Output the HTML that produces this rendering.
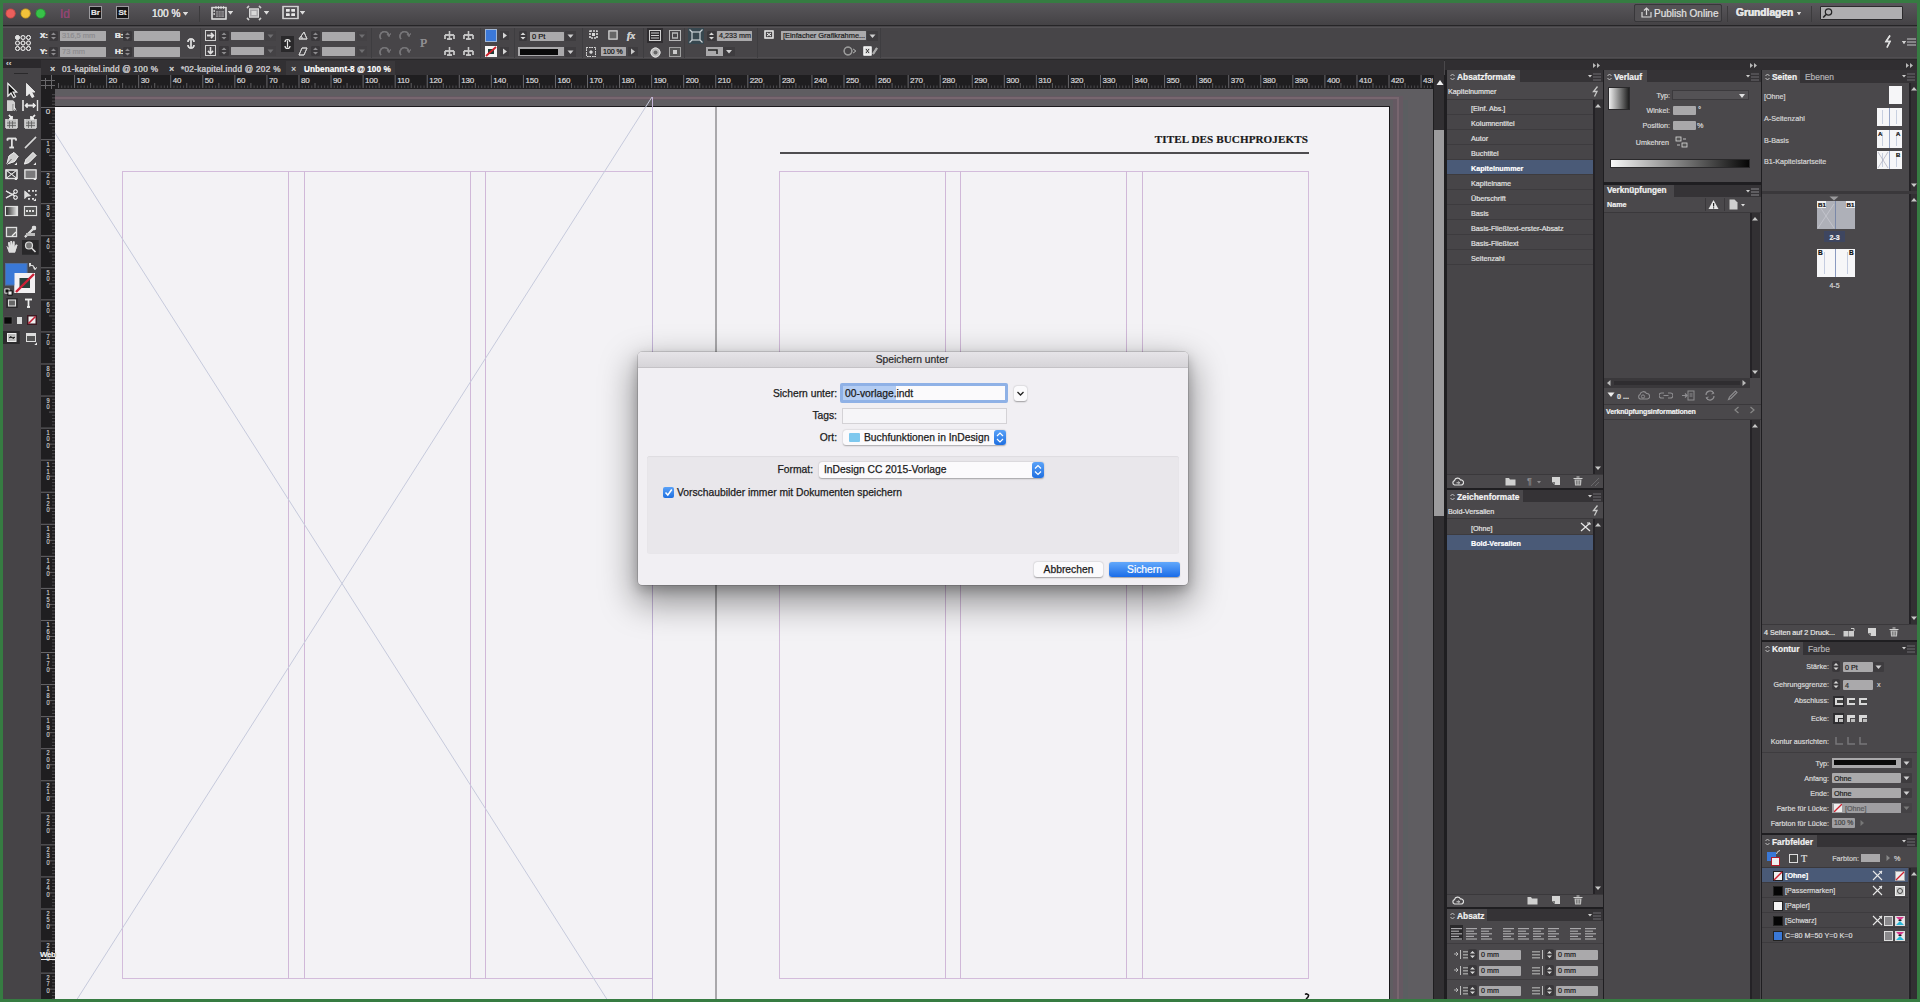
<!DOCTYPE html><html><head><meta charset="utf-8"><style>
html,body{margin:0;padding:0;}
body{width:1920px;height:1002px;position:relative;overflow:hidden;background:#367c42;font-family:"Liberation Sans",sans-serif;}
div{position:absolute;box-sizing:border-box;}
.t{white-space:nowrap;-webkit-text-stroke-width:0.2px;}
</style></head><body>
<div style="left:3px;top:3px;width:1914px;height:996px;background:#4a484b"></div>
<div style="left:3px;top:3px;width:1914px;height:22px;background:linear-gradient(#59575b,#444245)"></div>
<div style="left:3px;top:25px;width:1914px;height:1.5px;background:#262527"></div>
<div style="left:3px;top:26px;width:1914px;height:34px;background:#474548"></div>
<div style="left:3px;top:26.5px;width:1914px;height:1px;background:#555356"></div>
<div style="left:3px;top:57px;width:1914px;height:1px;background:#504e51"></div>
<div style="left:3px;top:59px;width:1914px;height:1.5px;background:#29282a"></div>
<div style="left:3px;top:60px;width:1441px;height:15px;background:#323033"></div>
<div style="left:41px;top:75px;width:1392px;height:14px;background:#1f1e20"></div>
<div style="left:3px;top:60px;width:38px;height:939px;background:#464447"></div>
<div style="left:41px;top:75px;width:14px;height:924px;background:#1f1e20"></div>
<svg style="position:absolute;left:0px;top:0px;pointer-events:none" width="1440" height="1002" viewBox="0 0 1440 1002"><rect x="58.03" y="83" width="1" height="5" fill="#5f5e61"/><rect x="61.24" y="85.5" width="1" height="2.5" fill="#4c4b4e"/><rect x="64.44" y="85.5" width="1" height="2.5" fill="#4c4b4e"/><rect x="67.65" y="85.5" width="1" height="2.5" fill="#4c4b4e"/><rect x="70.85" y="85.5" width="1" height="2.5" fill="#4c4b4e"/><rect x="74.06" y="75" width="1" height="13" fill="#68676a"/><rect x="77.27" y="85.5" width="1" height="2.5" fill="#4c4b4e"/><rect x="80.47" y="85.5" width="1" height="2.5" fill="#4c4b4e"/><rect x="83.68" y="85.5" width="1" height="2.5" fill="#4c4b4e"/><rect x="86.88" y="85.5" width="1" height="2.5" fill="#4c4b4e"/><rect x="90.09" y="83" width="1" height="5" fill="#5f5e61"/><rect x="93.30" y="85.5" width="1" height="2.5" fill="#4c4b4e"/><rect x="96.50" y="85.5" width="1" height="2.5" fill="#4c4b4e"/><rect x="99.71" y="85.5" width="1" height="2.5" fill="#4c4b4e"/><rect x="102.91" y="85.5" width="1" height="2.5" fill="#4c4b4e"/><rect x="106.12" y="75" width="1" height="13" fill="#68676a"/><rect x="109.33" y="85.5" width="1" height="2.5" fill="#4c4b4e"/><rect x="112.53" y="85.5" width="1" height="2.5" fill="#4c4b4e"/><rect x="115.74" y="85.5" width="1" height="2.5" fill="#4c4b4e"/><rect x="118.94" y="85.5" width="1" height="2.5" fill="#4c4b4e"/><rect x="122.15" y="83" width="1" height="5" fill="#5f5e61"/><rect x="125.36" y="85.5" width="1" height="2.5" fill="#4c4b4e"/><rect x="128.56" y="85.5" width="1" height="2.5" fill="#4c4b4e"/><rect x="131.77" y="85.5" width="1" height="2.5" fill="#4c4b4e"/><rect x="134.97" y="85.5" width="1" height="2.5" fill="#4c4b4e"/><rect x="138.18" y="75" width="1" height="13" fill="#68676a"/><rect x="141.39" y="85.5" width="1" height="2.5" fill="#4c4b4e"/><rect x="144.59" y="85.5" width="1" height="2.5" fill="#4c4b4e"/><rect x="147.80" y="85.5" width="1" height="2.5" fill="#4c4b4e"/><rect x="151.00" y="85.5" width="1" height="2.5" fill="#4c4b4e"/><rect x="154.21" y="83" width="1" height="5" fill="#5f5e61"/><rect x="157.42" y="85.5" width="1" height="2.5" fill="#4c4b4e"/><rect x="160.62" y="85.5" width="1" height="2.5" fill="#4c4b4e"/><rect x="163.83" y="85.5" width="1" height="2.5" fill="#4c4b4e"/><rect x="167.03" y="85.5" width="1" height="2.5" fill="#4c4b4e"/><rect x="170.24" y="75" width="1" height="13" fill="#68676a"/><rect x="173.45" y="85.5" width="1" height="2.5" fill="#4c4b4e"/><rect x="176.65" y="85.5" width="1" height="2.5" fill="#4c4b4e"/><rect x="179.86" y="85.5" width="1" height="2.5" fill="#4c4b4e"/><rect x="183.06" y="85.5" width="1" height="2.5" fill="#4c4b4e"/><rect x="186.27" y="83" width="1" height="5" fill="#5f5e61"/><rect x="189.48" y="85.5" width="1" height="2.5" fill="#4c4b4e"/><rect x="192.68" y="85.5" width="1" height="2.5" fill="#4c4b4e"/><rect x="195.89" y="85.5" width="1" height="2.5" fill="#4c4b4e"/><rect x="199.09" y="85.5" width="1" height="2.5" fill="#4c4b4e"/><rect x="202.30" y="75" width="1" height="13" fill="#68676a"/><rect x="205.51" y="85.5" width="1" height="2.5" fill="#4c4b4e"/><rect x="208.71" y="85.5" width="1" height="2.5" fill="#4c4b4e"/><rect x="211.92" y="85.5" width="1" height="2.5" fill="#4c4b4e"/><rect x="215.12" y="85.5" width="1" height="2.5" fill="#4c4b4e"/><rect x="218.33" y="83" width="1" height="5" fill="#5f5e61"/><rect x="221.54" y="85.5" width="1" height="2.5" fill="#4c4b4e"/><rect x="224.74" y="85.5" width="1" height="2.5" fill="#4c4b4e"/><rect x="227.95" y="85.5" width="1" height="2.5" fill="#4c4b4e"/><rect x="231.15" y="85.5" width="1" height="2.5" fill="#4c4b4e"/><rect x="234.36" y="75" width="1" height="13" fill="#68676a"/><rect x="237.57" y="85.5" width="1" height="2.5" fill="#4c4b4e"/><rect x="240.77" y="85.5" width="1" height="2.5" fill="#4c4b4e"/><rect x="243.98" y="85.5" width="1" height="2.5" fill="#4c4b4e"/><rect x="247.18" y="85.5" width="1" height="2.5" fill="#4c4b4e"/><rect x="250.39" y="83" width="1" height="5" fill="#5f5e61"/><rect x="253.60" y="85.5" width="1" height="2.5" fill="#4c4b4e"/><rect x="256.80" y="85.5" width="1" height="2.5" fill="#4c4b4e"/><rect x="260.01" y="85.5" width="1" height="2.5" fill="#4c4b4e"/><rect x="263.21" y="85.5" width="1" height="2.5" fill="#4c4b4e"/><rect x="266.42" y="75" width="1" height="13" fill="#68676a"/><rect x="269.63" y="85.5" width="1" height="2.5" fill="#4c4b4e"/><rect x="272.83" y="85.5" width="1" height="2.5" fill="#4c4b4e"/><rect x="276.04" y="85.5" width="1" height="2.5" fill="#4c4b4e"/><rect x="279.24" y="85.5" width="1" height="2.5" fill="#4c4b4e"/><rect x="282.45" y="83" width="1" height="5" fill="#5f5e61"/><rect x="285.66" y="85.5" width="1" height="2.5" fill="#4c4b4e"/><rect x="288.86" y="85.5" width="1" height="2.5" fill="#4c4b4e"/><rect x="292.07" y="85.5" width="1" height="2.5" fill="#4c4b4e"/><rect x="295.27" y="85.5" width="1" height="2.5" fill="#4c4b4e"/><rect x="298.48" y="75" width="1" height="13" fill="#68676a"/><rect x="301.69" y="85.5" width="1" height="2.5" fill="#4c4b4e"/><rect x="304.89" y="85.5" width="1" height="2.5" fill="#4c4b4e"/><rect x="308.10" y="85.5" width="1" height="2.5" fill="#4c4b4e"/><rect x="311.30" y="85.5" width="1" height="2.5" fill="#4c4b4e"/><rect x="314.51" y="83" width="1" height="5" fill="#5f5e61"/><rect x="317.72" y="85.5" width="1" height="2.5" fill="#4c4b4e"/><rect x="320.92" y="85.5" width="1" height="2.5" fill="#4c4b4e"/><rect x="324.13" y="85.5" width="1" height="2.5" fill="#4c4b4e"/><rect x="327.33" y="85.5" width="1" height="2.5" fill="#4c4b4e"/><rect x="330.54" y="75" width="1" height="13" fill="#68676a"/><rect x="333.75" y="85.5" width="1" height="2.5" fill="#4c4b4e"/><rect x="336.95" y="85.5" width="1" height="2.5" fill="#4c4b4e"/><rect x="340.16" y="85.5" width="1" height="2.5" fill="#4c4b4e"/><rect x="343.36" y="85.5" width="1" height="2.5" fill="#4c4b4e"/><rect x="346.57" y="83" width="1" height="5" fill="#5f5e61"/><rect x="349.78" y="85.5" width="1" height="2.5" fill="#4c4b4e"/><rect x="352.98" y="85.5" width="1" height="2.5" fill="#4c4b4e"/><rect x="356.19" y="85.5" width="1" height="2.5" fill="#4c4b4e"/><rect x="359.39" y="85.5" width="1" height="2.5" fill="#4c4b4e"/><rect x="362.60" y="75" width="1" height="13" fill="#68676a"/><rect x="365.81" y="85.5" width="1" height="2.5" fill="#4c4b4e"/><rect x="369.01" y="85.5" width="1" height="2.5" fill="#4c4b4e"/><rect x="372.22" y="85.5" width="1" height="2.5" fill="#4c4b4e"/><rect x="375.42" y="85.5" width="1" height="2.5" fill="#4c4b4e"/><rect x="378.63" y="83" width="1" height="5" fill="#5f5e61"/><rect x="381.84" y="85.5" width="1" height="2.5" fill="#4c4b4e"/><rect x="385.04" y="85.5" width="1" height="2.5" fill="#4c4b4e"/><rect x="388.25" y="85.5" width="1" height="2.5" fill="#4c4b4e"/><rect x="391.45" y="85.5" width="1" height="2.5" fill="#4c4b4e"/><rect x="394.66" y="75" width="1" height="13" fill="#68676a"/><rect x="397.87" y="85.5" width="1" height="2.5" fill="#4c4b4e"/><rect x="401.07" y="85.5" width="1" height="2.5" fill="#4c4b4e"/><rect x="404.28" y="85.5" width="1" height="2.5" fill="#4c4b4e"/><rect x="407.48" y="85.5" width="1" height="2.5" fill="#4c4b4e"/><rect x="410.69" y="83" width="1" height="5" fill="#5f5e61"/><rect x="413.90" y="85.5" width="1" height="2.5" fill="#4c4b4e"/><rect x="417.10" y="85.5" width="1" height="2.5" fill="#4c4b4e"/><rect x="420.31" y="85.5" width="1" height="2.5" fill="#4c4b4e"/><rect x="423.51" y="85.5" width="1" height="2.5" fill="#4c4b4e"/><rect x="426.72" y="75" width="1" height="13" fill="#68676a"/><rect x="429.93" y="85.5" width="1" height="2.5" fill="#4c4b4e"/><rect x="433.13" y="85.5" width="1" height="2.5" fill="#4c4b4e"/><rect x="436.34" y="85.5" width="1" height="2.5" fill="#4c4b4e"/><rect x="439.54" y="85.5" width="1" height="2.5" fill="#4c4b4e"/><rect x="442.75" y="83" width="1" height="5" fill="#5f5e61"/><rect x="445.96" y="85.5" width="1" height="2.5" fill="#4c4b4e"/><rect x="449.16" y="85.5" width="1" height="2.5" fill="#4c4b4e"/><rect x="452.37" y="85.5" width="1" height="2.5" fill="#4c4b4e"/><rect x="455.57" y="85.5" width="1" height="2.5" fill="#4c4b4e"/><rect x="458.78" y="75" width="1" height="13" fill="#68676a"/><rect x="461.99" y="85.5" width="1" height="2.5" fill="#4c4b4e"/><rect x="465.19" y="85.5" width="1" height="2.5" fill="#4c4b4e"/><rect x="468.40" y="85.5" width="1" height="2.5" fill="#4c4b4e"/><rect x="471.60" y="85.5" width="1" height="2.5" fill="#4c4b4e"/><rect x="474.81" y="83" width="1" height="5" fill="#5f5e61"/><rect x="478.02" y="85.5" width="1" height="2.5" fill="#4c4b4e"/><rect x="481.22" y="85.5" width="1" height="2.5" fill="#4c4b4e"/><rect x="484.43" y="85.5" width="1" height="2.5" fill="#4c4b4e"/><rect x="487.63" y="85.5" width="1" height="2.5" fill="#4c4b4e"/><rect x="490.84" y="75" width="1" height="13" fill="#68676a"/><rect x="494.05" y="85.5" width="1" height="2.5" fill="#4c4b4e"/><rect x="497.25" y="85.5" width="1" height="2.5" fill="#4c4b4e"/><rect x="500.46" y="85.5" width="1" height="2.5" fill="#4c4b4e"/><rect x="503.66" y="85.5" width="1" height="2.5" fill="#4c4b4e"/><rect x="506.87" y="83" width="1" height="5" fill="#5f5e61"/><rect x="510.08" y="85.5" width="1" height="2.5" fill="#4c4b4e"/><rect x="513.28" y="85.5" width="1" height="2.5" fill="#4c4b4e"/><rect x="516.49" y="85.5" width="1" height="2.5" fill="#4c4b4e"/><rect x="519.69" y="85.5" width="1" height="2.5" fill="#4c4b4e"/><rect x="522.90" y="75" width="1" height="13" fill="#68676a"/><rect x="526.11" y="85.5" width="1" height="2.5" fill="#4c4b4e"/><rect x="529.31" y="85.5" width="1" height="2.5" fill="#4c4b4e"/><rect x="532.52" y="85.5" width="1" height="2.5" fill="#4c4b4e"/><rect x="535.72" y="85.5" width="1" height="2.5" fill="#4c4b4e"/><rect x="538.93" y="83" width="1" height="5" fill="#5f5e61"/><rect x="542.14" y="85.5" width="1" height="2.5" fill="#4c4b4e"/><rect x="545.34" y="85.5" width="1" height="2.5" fill="#4c4b4e"/><rect x="548.55" y="85.5" width="1" height="2.5" fill="#4c4b4e"/><rect x="551.75" y="85.5" width="1" height="2.5" fill="#4c4b4e"/><rect x="554.96" y="75" width="1" height="13" fill="#68676a"/><rect x="558.17" y="85.5" width="1" height="2.5" fill="#4c4b4e"/><rect x="561.37" y="85.5" width="1" height="2.5" fill="#4c4b4e"/><rect x="564.58" y="85.5" width="1" height="2.5" fill="#4c4b4e"/><rect x="567.78" y="85.5" width="1" height="2.5" fill="#4c4b4e"/><rect x="570.99" y="83" width="1" height="5" fill="#5f5e61"/><rect x="574.20" y="85.5" width="1" height="2.5" fill="#4c4b4e"/><rect x="577.40" y="85.5" width="1" height="2.5" fill="#4c4b4e"/><rect x="580.61" y="85.5" width="1" height="2.5" fill="#4c4b4e"/><rect x="583.81" y="85.5" width="1" height="2.5" fill="#4c4b4e"/><rect x="587.02" y="75" width="1" height="13" fill="#68676a"/><rect x="590.23" y="85.5" width="1" height="2.5" fill="#4c4b4e"/><rect x="593.43" y="85.5" width="1" height="2.5" fill="#4c4b4e"/><rect x="596.64" y="85.5" width="1" height="2.5" fill="#4c4b4e"/><rect x="599.84" y="85.5" width="1" height="2.5" fill="#4c4b4e"/><rect x="603.05" y="83" width="1" height="5" fill="#5f5e61"/><rect x="606.26" y="85.5" width="1" height="2.5" fill="#4c4b4e"/><rect x="609.46" y="85.5" width="1" height="2.5" fill="#4c4b4e"/><rect x="612.67" y="85.5" width="1" height="2.5" fill="#4c4b4e"/><rect x="615.87" y="85.5" width="1" height="2.5" fill="#4c4b4e"/><rect x="619.08" y="75" width="1" height="13" fill="#68676a"/><rect x="622.29" y="85.5" width="1" height="2.5" fill="#4c4b4e"/><rect x="625.49" y="85.5" width="1" height="2.5" fill="#4c4b4e"/><rect x="628.70" y="85.5" width="1" height="2.5" fill="#4c4b4e"/><rect x="631.90" y="85.5" width="1" height="2.5" fill="#4c4b4e"/><rect x="635.11" y="83" width="1" height="5" fill="#5f5e61"/><rect x="638.32" y="85.5" width="1" height="2.5" fill="#4c4b4e"/><rect x="641.52" y="85.5" width="1" height="2.5" fill="#4c4b4e"/><rect x="644.73" y="85.5" width="1" height="2.5" fill="#4c4b4e"/><rect x="647.93" y="85.5" width="1" height="2.5" fill="#4c4b4e"/><rect x="651.14" y="75" width="1" height="13" fill="#68676a"/><rect x="654.35" y="85.5" width="1" height="2.5" fill="#4c4b4e"/><rect x="657.55" y="85.5" width="1" height="2.5" fill="#4c4b4e"/><rect x="660.76" y="85.5" width="1" height="2.5" fill="#4c4b4e"/><rect x="663.96" y="85.5" width="1" height="2.5" fill="#4c4b4e"/><rect x="667.17" y="83" width="1" height="5" fill="#5f5e61"/><rect x="670.38" y="85.5" width="1" height="2.5" fill="#4c4b4e"/><rect x="673.58" y="85.5" width="1" height="2.5" fill="#4c4b4e"/><rect x="676.79" y="85.5" width="1" height="2.5" fill="#4c4b4e"/><rect x="679.99" y="85.5" width="1" height="2.5" fill="#4c4b4e"/><rect x="683.20" y="75" width="1" height="13" fill="#68676a"/><rect x="686.41" y="85.5" width="1" height="2.5" fill="#4c4b4e"/><rect x="689.61" y="85.5" width="1" height="2.5" fill="#4c4b4e"/><rect x="692.82" y="85.5" width="1" height="2.5" fill="#4c4b4e"/><rect x="696.02" y="85.5" width="1" height="2.5" fill="#4c4b4e"/><rect x="699.23" y="83" width="1" height="5" fill="#5f5e61"/><rect x="702.44" y="85.5" width="1" height="2.5" fill="#4c4b4e"/><rect x="705.64" y="85.5" width="1" height="2.5" fill="#4c4b4e"/><rect x="708.85" y="85.5" width="1" height="2.5" fill="#4c4b4e"/><rect x="712.05" y="85.5" width="1" height="2.5" fill="#4c4b4e"/><rect x="715.26" y="75" width="1" height="13" fill="#68676a"/><rect x="718.47" y="85.5" width="1" height="2.5" fill="#4c4b4e"/><rect x="721.67" y="85.5" width="1" height="2.5" fill="#4c4b4e"/><rect x="724.88" y="85.5" width="1" height="2.5" fill="#4c4b4e"/><rect x="728.08" y="85.5" width="1" height="2.5" fill="#4c4b4e"/><rect x="731.29" y="83" width="1" height="5" fill="#5f5e61"/><rect x="734.50" y="85.5" width="1" height="2.5" fill="#4c4b4e"/><rect x="737.70" y="85.5" width="1" height="2.5" fill="#4c4b4e"/><rect x="740.91" y="85.5" width="1" height="2.5" fill="#4c4b4e"/><rect x="744.11" y="85.5" width="1" height="2.5" fill="#4c4b4e"/><rect x="747.32" y="75" width="1" height="13" fill="#68676a"/><rect x="750.53" y="85.5" width="1" height="2.5" fill="#4c4b4e"/><rect x="753.73" y="85.5" width="1" height="2.5" fill="#4c4b4e"/><rect x="756.94" y="85.5" width="1" height="2.5" fill="#4c4b4e"/><rect x="760.14" y="85.5" width="1" height="2.5" fill="#4c4b4e"/><rect x="763.35" y="83" width="1" height="5" fill="#5f5e61"/><rect x="766.56" y="85.5" width="1" height="2.5" fill="#4c4b4e"/><rect x="769.76" y="85.5" width="1" height="2.5" fill="#4c4b4e"/><rect x="772.97" y="85.5" width="1" height="2.5" fill="#4c4b4e"/><rect x="776.17" y="85.5" width="1" height="2.5" fill="#4c4b4e"/><rect x="779.38" y="75" width="1" height="13" fill="#68676a"/><rect x="782.59" y="85.5" width="1" height="2.5" fill="#4c4b4e"/><rect x="785.79" y="85.5" width="1" height="2.5" fill="#4c4b4e"/><rect x="789.00" y="85.5" width="1" height="2.5" fill="#4c4b4e"/><rect x="792.20" y="85.5" width="1" height="2.5" fill="#4c4b4e"/><rect x="795.41" y="83" width="1" height="5" fill="#5f5e61"/><rect x="798.62" y="85.5" width="1" height="2.5" fill="#4c4b4e"/><rect x="801.82" y="85.5" width="1" height="2.5" fill="#4c4b4e"/><rect x="805.03" y="85.5" width="1" height="2.5" fill="#4c4b4e"/><rect x="808.23" y="85.5" width="1" height="2.5" fill="#4c4b4e"/><rect x="811.44" y="75" width="1" height="13" fill="#68676a"/><rect x="814.65" y="85.5" width="1" height="2.5" fill="#4c4b4e"/><rect x="817.85" y="85.5" width="1" height="2.5" fill="#4c4b4e"/><rect x="821.06" y="85.5" width="1" height="2.5" fill="#4c4b4e"/><rect x="824.26" y="85.5" width="1" height="2.5" fill="#4c4b4e"/><rect x="827.47" y="83" width="1" height="5" fill="#5f5e61"/><rect x="830.68" y="85.5" width="1" height="2.5" fill="#4c4b4e"/><rect x="833.88" y="85.5" width="1" height="2.5" fill="#4c4b4e"/><rect x="837.09" y="85.5" width="1" height="2.5" fill="#4c4b4e"/><rect x="840.29" y="85.5" width="1" height="2.5" fill="#4c4b4e"/><rect x="843.50" y="75" width="1" height="13" fill="#68676a"/><rect x="846.71" y="85.5" width="1" height="2.5" fill="#4c4b4e"/><rect x="849.91" y="85.5" width="1" height="2.5" fill="#4c4b4e"/><rect x="853.12" y="85.5" width="1" height="2.5" fill="#4c4b4e"/><rect x="856.32" y="85.5" width="1" height="2.5" fill="#4c4b4e"/><rect x="859.53" y="83" width="1" height="5" fill="#5f5e61"/><rect x="862.74" y="85.5" width="1" height="2.5" fill="#4c4b4e"/><rect x="865.94" y="85.5" width="1" height="2.5" fill="#4c4b4e"/><rect x="869.15" y="85.5" width="1" height="2.5" fill="#4c4b4e"/><rect x="872.35" y="85.5" width="1" height="2.5" fill="#4c4b4e"/><rect x="875.56" y="75" width="1" height="13" fill="#68676a"/><rect x="878.77" y="85.5" width="1" height="2.5" fill="#4c4b4e"/><rect x="881.97" y="85.5" width="1" height="2.5" fill="#4c4b4e"/><rect x="885.18" y="85.5" width="1" height="2.5" fill="#4c4b4e"/><rect x="888.38" y="85.5" width="1" height="2.5" fill="#4c4b4e"/><rect x="891.59" y="83" width="1" height="5" fill="#5f5e61"/><rect x="894.80" y="85.5" width="1" height="2.5" fill="#4c4b4e"/><rect x="898.00" y="85.5" width="1" height="2.5" fill="#4c4b4e"/><rect x="901.21" y="85.5" width="1" height="2.5" fill="#4c4b4e"/><rect x="904.41" y="85.5" width="1" height="2.5" fill="#4c4b4e"/><rect x="907.62" y="75" width="1" height="13" fill="#68676a"/><rect x="910.83" y="85.5" width="1" height="2.5" fill="#4c4b4e"/><rect x="914.03" y="85.5" width="1" height="2.5" fill="#4c4b4e"/><rect x="917.24" y="85.5" width="1" height="2.5" fill="#4c4b4e"/><rect x="920.44" y="85.5" width="1" height="2.5" fill="#4c4b4e"/><rect x="923.65" y="83" width="1" height="5" fill="#5f5e61"/><rect x="926.86" y="85.5" width="1" height="2.5" fill="#4c4b4e"/><rect x="930.06" y="85.5" width="1" height="2.5" fill="#4c4b4e"/><rect x="933.27" y="85.5" width="1" height="2.5" fill="#4c4b4e"/><rect x="936.47" y="85.5" width="1" height="2.5" fill="#4c4b4e"/><rect x="939.68" y="75" width="1" height="13" fill="#68676a"/><rect x="942.89" y="85.5" width="1" height="2.5" fill="#4c4b4e"/><rect x="946.09" y="85.5" width="1" height="2.5" fill="#4c4b4e"/><rect x="949.30" y="85.5" width="1" height="2.5" fill="#4c4b4e"/><rect x="952.50" y="85.5" width="1" height="2.5" fill="#4c4b4e"/><rect x="955.71" y="83" width="1" height="5" fill="#5f5e61"/><rect x="958.92" y="85.5" width="1" height="2.5" fill="#4c4b4e"/><rect x="962.12" y="85.5" width="1" height="2.5" fill="#4c4b4e"/><rect x="965.33" y="85.5" width="1" height="2.5" fill="#4c4b4e"/><rect x="968.53" y="85.5" width="1" height="2.5" fill="#4c4b4e"/><rect x="971.74" y="75" width="1" height="13" fill="#68676a"/><rect x="974.95" y="85.5" width="1" height="2.5" fill="#4c4b4e"/><rect x="978.15" y="85.5" width="1" height="2.5" fill="#4c4b4e"/><rect x="981.36" y="85.5" width="1" height="2.5" fill="#4c4b4e"/><rect x="984.56" y="85.5" width="1" height="2.5" fill="#4c4b4e"/><rect x="987.77" y="83" width="1" height="5" fill="#5f5e61"/><rect x="990.98" y="85.5" width="1" height="2.5" fill="#4c4b4e"/><rect x="994.18" y="85.5" width="1" height="2.5" fill="#4c4b4e"/><rect x="997.39" y="85.5" width="1" height="2.5" fill="#4c4b4e"/><rect x="1000.59" y="85.5" width="1" height="2.5" fill="#4c4b4e"/><rect x="1003.80" y="75" width="1" height="13" fill="#68676a"/><rect x="1007.01" y="85.5" width="1" height="2.5" fill="#4c4b4e"/><rect x="1010.21" y="85.5" width="1" height="2.5" fill="#4c4b4e"/><rect x="1013.42" y="85.5" width="1" height="2.5" fill="#4c4b4e"/><rect x="1016.62" y="85.5" width="1" height="2.5" fill="#4c4b4e"/><rect x="1019.83" y="83" width="1" height="5" fill="#5f5e61"/><rect x="1023.04" y="85.5" width="1" height="2.5" fill="#4c4b4e"/><rect x="1026.24" y="85.5" width="1" height="2.5" fill="#4c4b4e"/><rect x="1029.45" y="85.5" width="1" height="2.5" fill="#4c4b4e"/><rect x="1032.65" y="85.5" width="1" height="2.5" fill="#4c4b4e"/><rect x="1035.86" y="75" width="1" height="13" fill="#68676a"/><rect x="1039.07" y="85.5" width="1" height="2.5" fill="#4c4b4e"/><rect x="1042.27" y="85.5" width="1" height="2.5" fill="#4c4b4e"/><rect x="1045.48" y="85.5" width="1" height="2.5" fill="#4c4b4e"/><rect x="1048.68" y="85.5" width="1" height="2.5" fill="#4c4b4e"/><rect x="1051.89" y="83" width="1" height="5" fill="#5f5e61"/><rect x="1055.10" y="85.5" width="1" height="2.5" fill="#4c4b4e"/><rect x="1058.30" y="85.5" width="1" height="2.5" fill="#4c4b4e"/><rect x="1061.51" y="85.5" width="1" height="2.5" fill="#4c4b4e"/><rect x="1064.71" y="85.5" width="1" height="2.5" fill="#4c4b4e"/><rect x="1067.92" y="75" width="1" height="13" fill="#68676a"/><rect x="1071.13" y="85.5" width="1" height="2.5" fill="#4c4b4e"/><rect x="1074.33" y="85.5" width="1" height="2.5" fill="#4c4b4e"/><rect x="1077.54" y="85.5" width="1" height="2.5" fill="#4c4b4e"/><rect x="1080.74" y="85.5" width="1" height="2.5" fill="#4c4b4e"/><rect x="1083.95" y="83" width="1" height="5" fill="#5f5e61"/><rect x="1087.16" y="85.5" width="1" height="2.5" fill="#4c4b4e"/><rect x="1090.36" y="85.5" width="1" height="2.5" fill="#4c4b4e"/><rect x="1093.57" y="85.5" width="1" height="2.5" fill="#4c4b4e"/><rect x="1096.77" y="85.5" width="1" height="2.5" fill="#4c4b4e"/><rect x="1099.98" y="75" width="1" height="13" fill="#68676a"/><rect x="1103.19" y="85.5" width="1" height="2.5" fill="#4c4b4e"/><rect x="1106.39" y="85.5" width="1" height="2.5" fill="#4c4b4e"/><rect x="1109.60" y="85.5" width="1" height="2.5" fill="#4c4b4e"/><rect x="1112.80" y="85.5" width="1" height="2.5" fill="#4c4b4e"/><rect x="1116.01" y="83" width="1" height="5" fill="#5f5e61"/><rect x="1119.22" y="85.5" width="1" height="2.5" fill="#4c4b4e"/><rect x="1122.42" y="85.5" width="1" height="2.5" fill="#4c4b4e"/><rect x="1125.63" y="85.5" width="1" height="2.5" fill="#4c4b4e"/><rect x="1128.83" y="85.5" width="1" height="2.5" fill="#4c4b4e"/><rect x="1132.04" y="75" width="1" height="13" fill="#68676a"/><rect x="1135.25" y="85.5" width="1" height="2.5" fill="#4c4b4e"/><rect x="1138.45" y="85.5" width="1" height="2.5" fill="#4c4b4e"/><rect x="1141.66" y="85.5" width="1" height="2.5" fill="#4c4b4e"/><rect x="1144.86" y="85.5" width="1" height="2.5" fill="#4c4b4e"/><rect x="1148.07" y="83" width="1" height="5" fill="#5f5e61"/><rect x="1151.28" y="85.5" width="1" height="2.5" fill="#4c4b4e"/><rect x="1154.48" y="85.5" width="1" height="2.5" fill="#4c4b4e"/><rect x="1157.69" y="85.5" width="1" height="2.5" fill="#4c4b4e"/><rect x="1160.89" y="85.5" width="1" height="2.5" fill="#4c4b4e"/><rect x="1164.10" y="75" width="1" height="13" fill="#68676a"/><rect x="1167.31" y="85.5" width="1" height="2.5" fill="#4c4b4e"/><rect x="1170.51" y="85.5" width="1" height="2.5" fill="#4c4b4e"/><rect x="1173.72" y="85.5" width="1" height="2.5" fill="#4c4b4e"/><rect x="1176.92" y="85.5" width="1" height="2.5" fill="#4c4b4e"/><rect x="1180.13" y="83" width="1" height="5" fill="#5f5e61"/><rect x="1183.34" y="85.5" width="1" height="2.5" fill="#4c4b4e"/><rect x="1186.54" y="85.5" width="1" height="2.5" fill="#4c4b4e"/><rect x="1189.75" y="85.5" width="1" height="2.5" fill="#4c4b4e"/><rect x="1192.95" y="85.5" width="1" height="2.5" fill="#4c4b4e"/><rect x="1196.16" y="75" width="1" height="13" fill="#68676a"/><rect x="1199.37" y="85.5" width="1" height="2.5" fill="#4c4b4e"/><rect x="1202.57" y="85.5" width="1" height="2.5" fill="#4c4b4e"/><rect x="1205.78" y="85.5" width="1" height="2.5" fill="#4c4b4e"/><rect x="1208.98" y="85.5" width="1" height="2.5" fill="#4c4b4e"/><rect x="1212.19" y="83" width="1" height="5" fill="#5f5e61"/><rect x="1215.40" y="85.5" width="1" height="2.5" fill="#4c4b4e"/><rect x="1218.60" y="85.5" width="1" height="2.5" fill="#4c4b4e"/><rect x="1221.81" y="85.5" width="1" height="2.5" fill="#4c4b4e"/><rect x="1225.01" y="85.5" width="1" height="2.5" fill="#4c4b4e"/><rect x="1228.22" y="75" width="1" height="13" fill="#68676a"/><rect x="1231.43" y="85.5" width="1" height="2.5" fill="#4c4b4e"/><rect x="1234.63" y="85.5" width="1" height="2.5" fill="#4c4b4e"/><rect x="1237.84" y="85.5" width="1" height="2.5" fill="#4c4b4e"/><rect x="1241.04" y="85.5" width="1" height="2.5" fill="#4c4b4e"/><rect x="1244.25" y="83" width="1" height="5" fill="#5f5e61"/><rect x="1247.46" y="85.5" width="1" height="2.5" fill="#4c4b4e"/><rect x="1250.66" y="85.5" width="1" height="2.5" fill="#4c4b4e"/><rect x="1253.87" y="85.5" width="1" height="2.5" fill="#4c4b4e"/><rect x="1257.07" y="85.5" width="1" height="2.5" fill="#4c4b4e"/><rect x="1260.28" y="75" width="1" height="13" fill="#68676a"/><rect x="1263.49" y="85.5" width="1" height="2.5" fill="#4c4b4e"/><rect x="1266.69" y="85.5" width="1" height="2.5" fill="#4c4b4e"/><rect x="1269.90" y="85.5" width="1" height="2.5" fill="#4c4b4e"/><rect x="1273.10" y="85.5" width="1" height="2.5" fill="#4c4b4e"/><rect x="1276.31" y="83" width="1" height="5" fill="#5f5e61"/><rect x="1279.52" y="85.5" width="1" height="2.5" fill="#4c4b4e"/><rect x="1282.72" y="85.5" width="1" height="2.5" fill="#4c4b4e"/><rect x="1285.93" y="85.5" width="1" height="2.5" fill="#4c4b4e"/><rect x="1289.13" y="85.5" width="1" height="2.5" fill="#4c4b4e"/><rect x="1292.34" y="75" width="1" height="13" fill="#68676a"/><rect x="1295.55" y="85.5" width="1" height="2.5" fill="#4c4b4e"/><rect x="1298.75" y="85.5" width="1" height="2.5" fill="#4c4b4e"/><rect x="1301.96" y="85.5" width="1" height="2.5" fill="#4c4b4e"/><rect x="1305.16" y="85.5" width="1" height="2.5" fill="#4c4b4e"/><rect x="1308.37" y="83" width="1" height="5" fill="#5f5e61"/><rect x="1311.58" y="85.5" width="1" height="2.5" fill="#4c4b4e"/><rect x="1314.78" y="85.5" width="1" height="2.5" fill="#4c4b4e"/><rect x="1317.99" y="85.5" width="1" height="2.5" fill="#4c4b4e"/><rect x="1321.19" y="85.5" width="1" height="2.5" fill="#4c4b4e"/><rect x="1324.40" y="75" width="1" height="13" fill="#68676a"/><rect x="1327.61" y="85.5" width="1" height="2.5" fill="#4c4b4e"/><rect x="1330.81" y="85.5" width="1" height="2.5" fill="#4c4b4e"/><rect x="1334.02" y="85.5" width="1" height="2.5" fill="#4c4b4e"/><rect x="1337.22" y="85.5" width="1" height="2.5" fill="#4c4b4e"/><rect x="1340.43" y="83" width="1" height="5" fill="#5f5e61"/><rect x="1343.64" y="85.5" width="1" height="2.5" fill="#4c4b4e"/><rect x="1346.84" y="85.5" width="1" height="2.5" fill="#4c4b4e"/><rect x="1350.05" y="85.5" width="1" height="2.5" fill="#4c4b4e"/><rect x="1353.25" y="85.5" width="1" height="2.5" fill="#4c4b4e"/><rect x="1356.46" y="75" width="1" height="13" fill="#68676a"/><rect x="1359.67" y="85.5" width="1" height="2.5" fill="#4c4b4e"/><rect x="1362.87" y="85.5" width="1" height="2.5" fill="#4c4b4e"/><rect x="1366.08" y="85.5" width="1" height="2.5" fill="#4c4b4e"/><rect x="1369.28" y="85.5" width="1" height="2.5" fill="#4c4b4e"/><rect x="1372.49" y="83" width="1" height="5" fill="#5f5e61"/><rect x="1375.70" y="85.5" width="1" height="2.5" fill="#4c4b4e"/><rect x="1378.90" y="85.5" width="1" height="2.5" fill="#4c4b4e"/><rect x="1382.11" y="85.5" width="1" height="2.5" fill="#4c4b4e"/><rect x="1385.31" y="85.5" width="1" height="2.5" fill="#4c4b4e"/><rect x="1388.52" y="75" width="1" height="13" fill="#68676a"/><rect x="1391.73" y="85.5" width="1" height="2.5" fill="#4c4b4e"/><rect x="1394.93" y="85.5" width="1" height="2.5" fill="#4c4b4e"/><rect x="1398.14" y="85.5" width="1" height="2.5" fill="#4c4b4e"/><rect x="1401.34" y="85.5" width="1" height="2.5" fill="#4c4b4e"/><rect x="1404.55" y="83" width="1" height="5" fill="#5f5e61"/><rect x="1407.76" y="85.5" width="1" height="2.5" fill="#4c4b4e"/><rect x="1410.96" y="85.5" width="1" height="2.5" fill="#4c4b4e"/><rect x="1414.17" y="85.5" width="1" height="2.5" fill="#4c4b4e"/><rect x="1417.37" y="85.5" width="1" height="2.5" fill="#4c4b4e"/><rect x="1420.58" y="75" width="1" height="13" fill="#68676a"/><rect x="1423.79" y="85.5" width="1" height="2.5" fill="#4c4b4e"/><rect x="1426.99" y="85.5" width="1" height="2.5" fill="#4c4b4e"/><rect x="1430.20" y="85.5" width="1" height="2.5" fill="#4c4b4e"/><rect x="52" y="94.18" width="3" height="1" fill="#4c4b4e"/><rect x="52" y="97.38" width="3" height="1" fill="#4c4b4e"/><rect x="52" y="100.59" width="3" height="1" fill="#4c4b4e"/><rect x="52" y="103.79" width="3" height="1" fill="#4c4b4e"/><rect x="41" y="107.00" width="14" height="1" fill="#68676a"/><rect x="52" y="110.21" width="3" height="1" fill="#4c4b4e"/><rect x="52" y="113.41" width="3" height="1" fill="#4c4b4e"/><rect x="52" y="116.62" width="3" height="1" fill="#4c4b4e"/><rect x="52" y="119.82" width="3" height="1" fill="#4c4b4e"/><rect x="49" y="123.03" width="6" height="1" fill="#5f5e61"/><rect x="52" y="126.24" width="3" height="1" fill="#4c4b4e"/><rect x="52" y="129.44" width="3" height="1" fill="#4c4b4e"/><rect x="52" y="132.65" width="3" height="1" fill="#4c4b4e"/><rect x="52" y="135.85" width="3" height="1" fill="#4c4b4e"/><rect x="41" y="139.06" width="14" height="1" fill="#68676a"/><rect x="52" y="142.27" width="3" height="1" fill="#4c4b4e"/><rect x="52" y="145.47" width="3" height="1" fill="#4c4b4e"/><rect x="52" y="148.68" width="3" height="1" fill="#4c4b4e"/><rect x="52" y="151.88" width="3" height="1" fill="#4c4b4e"/><rect x="49" y="155.09" width="6" height="1" fill="#5f5e61"/><rect x="52" y="158.30" width="3" height="1" fill="#4c4b4e"/><rect x="52" y="161.50" width="3" height="1" fill="#4c4b4e"/><rect x="52" y="164.71" width="3" height="1" fill="#4c4b4e"/><rect x="52" y="167.91" width="3" height="1" fill="#4c4b4e"/><rect x="41" y="171.12" width="14" height="1" fill="#68676a"/><rect x="52" y="174.33" width="3" height="1" fill="#4c4b4e"/><rect x="52" y="177.53" width="3" height="1" fill="#4c4b4e"/><rect x="52" y="180.74" width="3" height="1" fill="#4c4b4e"/><rect x="52" y="183.94" width="3" height="1" fill="#4c4b4e"/><rect x="49" y="187.15" width="6" height="1" fill="#5f5e61"/><rect x="52" y="190.36" width="3" height="1" fill="#4c4b4e"/><rect x="52" y="193.56" width="3" height="1" fill="#4c4b4e"/><rect x="52" y="196.77" width="3" height="1" fill="#4c4b4e"/><rect x="52" y="199.97" width="3" height="1" fill="#4c4b4e"/><rect x="41" y="203.18" width="14" height="1" fill="#68676a"/><rect x="52" y="206.39" width="3" height="1" fill="#4c4b4e"/><rect x="52" y="209.59" width="3" height="1" fill="#4c4b4e"/><rect x="52" y="212.80" width="3" height="1" fill="#4c4b4e"/><rect x="52" y="216.00" width="3" height="1" fill="#4c4b4e"/><rect x="49" y="219.21" width="6" height="1" fill="#5f5e61"/><rect x="52" y="222.42" width="3" height="1" fill="#4c4b4e"/><rect x="52" y="225.62" width="3" height="1" fill="#4c4b4e"/><rect x="52" y="228.83" width="3" height="1" fill="#4c4b4e"/><rect x="52" y="232.03" width="3" height="1" fill="#4c4b4e"/><rect x="41" y="235.24" width="14" height="1" fill="#68676a"/><rect x="52" y="238.45" width="3" height="1" fill="#4c4b4e"/><rect x="52" y="241.65" width="3" height="1" fill="#4c4b4e"/><rect x="52" y="244.86" width="3" height="1" fill="#4c4b4e"/><rect x="52" y="248.06" width="3" height="1" fill="#4c4b4e"/><rect x="49" y="251.27" width="6" height="1" fill="#5f5e61"/><rect x="52" y="254.48" width="3" height="1" fill="#4c4b4e"/><rect x="52" y="257.68" width="3" height="1" fill="#4c4b4e"/><rect x="52" y="260.89" width="3" height="1" fill="#4c4b4e"/><rect x="52" y="264.09" width="3" height="1" fill="#4c4b4e"/><rect x="41" y="267.30" width="14" height="1" fill="#68676a"/><rect x="52" y="270.51" width="3" height="1" fill="#4c4b4e"/><rect x="52" y="273.71" width="3" height="1" fill="#4c4b4e"/><rect x="52" y="276.92" width="3" height="1" fill="#4c4b4e"/><rect x="52" y="280.12" width="3" height="1" fill="#4c4b4e"/><rect x="49" y="283.33" width="6" height="1" fill="#5f5e61"/><rect x="52" y="286.54" width="3" height="1" fill="#4c4b4e"/><rect x="52" y="289.74" width="3" height="1" fill="#4c4b4e"/><rect x="52" y="292.95" width="3" height="1" fill="#4c4b4e"/><rect x="52" y="296.15" width="3" height="1" fill="#4c4b4e"/><rect x="41" y="299.36" width="14" height="1" fill="#68676a"/><rect x="52" y="302.57" width="3" height="1" fill="#4c4b4e"/><rect x="52" y="305.77" width="3" height="1" fill="#4c4b4e"/><rect x="52" y="308.98" width="3" height="1" fill="#4c4b4e"/><rect x="52" y="312.18" width="3" height="1" fill="#4c4b4e"/><rect x="49" y="315.39" width="6" height="1" fill="#5f5e61"/><rect x="52" y="318.60" width="3" height="1" fill="#4c4b4e"/><rect x="52" y="321.80" width="3" height="1" fill="#4c4b4e"/><rect x="52" y="325.01" width="3" height="1" fill="#4c4b4e"/><rect x="52" y="328.21" width="3" height="1" fill="#4c4b4e"/><rect x="41" y="331.42" width="14" height="1" fill="#68676a"/><rect x="52" y="334.63" width="3" height="1" fill="#4c4b4e"/><rect x="52" y="337.83" width="3" height="1" fill="#4c4b4e"/><rect x="52" y="341.04" width="3" height="1" fill="#4c4b4e"/><rect x="52" y="344.24" width="3" height="1" fill="#4c4b4e"/><rect x="49" y="347.45" width="6" height="1" fill="#5f5e61"/><rect x="52" y="350.66" width="3" height="1" fill="#4c4b4e"/><rect x="52" y="353.86" width="3" height="1" fill="#4c4b4e"/><rect x="52" y="357.07" width="3" height="1" fill="#4c4b4e"/><rect x="52" y="360.27" width="3" height="1" fill="#4c4b4e"/><rect x="41" y="363.48" width="14" height="1" fill="#68676a"/><rect x="52" y="366.69" width="3" height="1" fill="#4c4b4e"/><rect x="52" y="369.89" width="3" height="1" fill="#4c4b4e"/><rect x="52" y="373.10" width="3" height="1" fill="#4c4b4e"/><rect x="52" y="376.30" width="3" height="1" fill="#4c4b4e"/><rect x="49" y="379.51" width="6" height="1" fill="#5f5e61"/><rect x="52" y="382.72" width="3" height="1" fill="#4c4b4e"/><rect x="52" y="385.92" width="3" height="1" fill="#4c4b4e"/><rect x="52" y="389.13" width="3" height="1" fill="#4c4b4e"/><rect x="52" y="392.33" width="3" height="1" fill="#4c4b4e"/><rect x="41" y="395.54" width="14" height="1" fill="#68676a"/><rect x="52" y="398.75" width="3" height="1" fill="#4c4b4e"/><rect x="52" y="401.95" width="3" height="1" fill="#4c4b4e"/><rect x="52" y="405.16" width="3" height="1" fill="#4c4b4e"/><rect x="52" y="408.36" width="3" height="1" fill="#4c4b4e"/><rect x="49" y="411.57" width="6" height="1" fill="#5f5e61"/><rect x="52" y="414.78" width="3" height="1" fill="#4c4b4e"/><rect x="52" y="417.98" width="3" height="1" fill="#4c4b4e"/><rect x="52" y="421.19" width="3" height="1" fill="#4c4b4e"/><rect x="52" y="424.39" width="3" height="1" fill="#4c4b4e"/><rect x="41" y="427.60" width="14" height="1" fill="#68676a"/><rect x="52" y="430.81" width="3" height="1" fill="#4c4b4e"/><rect x="52" y="434.01" width="3" height="1" fill="#4c4b4e"/><rect x="52" y="437.22" width="3" height="1" fill="#4c4b4e"/><rect x="52" y="440.42" width="3" height="1" fill="#4c4b4e"/><rect x="49" y="443.63" width="6" height="1" fill="#5f5e61"/><rect x="52" y="446.84" width="3" height="1" fill="#4c4b4e"/><rect x="52" y="450.04" width="3" height="1" fill="#4c4b4e"/><rect x="52" y="453.25" width="3" height="1" fill="#4c4b4e"/><rect x="52" y="456.45" width="3" height="1" fill="#4c4b4e"/><rect x="41" y="459.66" width="14" height="1" fill="#68676a"/><rect x="52" y="462.87" width="3" height="1" fill="#4c4b4e"/><rect x="52" y="466.07" width="3" height="1" fill="#4c4b4e"/><rect x="52" y="469.28" width="3" height="1" fill="#4c4b4e"/><rect x="52" y="472.48" width="3" height="1" fill="#4c4b4e"/><rect x="49" y="475.69" width="6" height="1" fill="#5f5e61"/><rect x="52" y="478.90" width="3" height="1" fill="#4c4b4e"/><rect x="52" y="482.10" width="3" height="1" fill="#4c4b4e"/><rect x="52" y="485.31" width="3" height="1" fill="#4c4b4e"/><rect x="52" y="488.51" width="3" height="1" fill="#4c4b4e"/><rect x="41" y="491.72" width="14" height="1" fill="#68676a"/><rect x="52" y="494.93" width="3" height="1" fill="#4c4b4e"/><rect x="52" y="498.13" width="3" height="1" fill="#4c4b4e"/><rect x="52" y="501.34" width="3" height="1" fill="#4c4b4e"/><rect x="52" y="504.54" width="3" height="1" fill="#4c4b4e"/><rect x="49" y="507.75" width="6" height="1" fill="#5f5e61"/><rect x="52" y="510.96" width="3" height="1" fill="#4c4b4e"/><rect x="52" y="514.16" width="3" height="1" fill="#4c4b4e"/><rect x="52" y="517.37" width="3" height="1" fill="#4c4b4e"/><rect x="52" y="520.57" width="3" height="1" fill="#4c4b4e"/><rect x="41" y="523.78" width="14" height="1" fill="#68676a"/><rect x="52" y="526.99" width="3" height="1" fill="#4c4b4e"/><rect x="52" y="530.19" width="3" height="1" fill="#4c4b4e"/><rect x="52" y="533.40" width="3" height="1" fill="#4c4b4e"/><rect x="52" y="536.60" width="3" height="1" fill="#4c4b4e"/><rect x="49" y="539.81" width="6" height="1" fill="#5f5e61"/><rect x="52" y="543.02" width="3" height="1" fill="#4c4b4e"/><rect x="52" y="546.22" width="3" height="1" fill="#4c4b4e"/><rect x="52" y="549.43" width="3" height="1" fill="#4c4b4e"/><rect x="52" y="552.63" width="3" height="1" fill="#4c4b4e"/><rect x="41" y="555.84" width="14" height="1" fill="#68676a"/><rect x="52" y="559.05" width="3" height="1" fill="#4c4b4e"/><rect x="52" y="562.25" width="3" height="1" fill="#4c4b4e"/><rect x="52" y="565.46" width="3" height="1" fill="#4c4b4e"/><rect x="52" y="568.66" width="3" height="1" fill="#4c4b4e"/><rect x="49" y="571.87" width="6" height="1" fill="#5f5e61"/><rect x="52" y="575.08" width="3" height="1" fill="#4c4b4e"/><rect x="52" y="578.28" width="3" height="1" fill="#4c4b4e"/><rect x="52" y="581.49" width="3" height="1" fill="#4c4b4e"/><rect x="52" y="584.69" width="3" height="1" fill="#4c4b4e"/><rect x="41" y="587.90" width="14" height="1" fill="#68676a"/><rect x="52" y="591.11" width="3" height="1" fill="#4c4b4e"/><rect x="52" y="594.31" width="3" height="1" fill="#4c4b4e"/><rect x="52" y="597.52" width="3" height="1" fill="#4c4b4e"/><rect x="52" y="600.72" width="3" height="1" fill="#4c4b4e"/><rect x="49" y="603.93" width="6" height="1" fill="#5f5e61"/><rect x="52" y="607.14" width="3" height="1" fill="#4c4b4e"/><rect x="52" y="610.34" width="3" height="1" fill="#4c4b4e"/><rect x="52" y="613.55" width="3" height="1" fill="#4c4b4e"/><rect x="52" y="616.75" width="3" height="1" fill="#4c4b4e"/><rect x="41" y="619.96" width="14" height="1" fill="#68676a"/><rect x="52" y="623.17" width="3" height="1" fill="#4c4b4e"/><rect x="52" y="626.37" width="3" height="1" fill="#4c4b4e"/><rect x="52" y="629.58" width="3" height="1" fill="#4c4b4e"/><rect x="52" y="632.78" width="3" height="1" fill="#4c4b4e"/><rect x="49" y="635.99" width="6" height="1" fill="#5f5e61"/><rect x="52" y="639.20" width="3" height="1" fill="#4c4b4e"/><rect x="52" y="642.40" width="3" height="1" fill="#4c4b4e"/><rect x="52" y="645.61" width="3" height="1" fill="#4c4b4e"/><rect x="52" y="648.81" width="3" height="1" fill="#4c4b4e"/><rect x="41" y="652.02" width="14" height="1" fill="#68676a"/><rect x="52" y="655.23" width="3" height="1" fill="#4c4b4e"/><rect x="52" y="658.43" width="3" height="1" fill="#4c4b4e"/><rect x="52" y="661.64" width="3" height="1" fill="#4c4b4e"/><rect x="52" y="664.84" width="3" height="1" fill="#4c4b4e"/><rect x="49" y="668.05" width="6" height="1" fill="#5f5e61"/><rect x="52" y="671.26" width="3" height="1" fill="#4c4b4e"/><rect x="52" y="674.46" width="3" height="1" fill="#4c4b4e"/><rect x="52" y="677.67" width="3" height="1" fill="#4c4b4e"/><rect x="52" y="680.87" width="3" height="1" fill="#4c4b4e"/><rect x="41" y="684.08" width="14" height="1" fill="#68676a"/><rect x="52" y="687.29" width="3" height="1" fill="#4c4b4e"/><rect x="52" y="690.49" width="3" height="1" fill="#4c4b4e"/><rect x="52" y="693.70" width="3" height="1" fill="#4c4b4e"/><rect x="52" y="696.90" width="3" height="1" fill="#4c4b4e"/><rect x="49" y="700.11" width="6" height="1" fill="#5f5e61"/><rect x="52" y="703.32" width="3" height="1" fill="#4c4b4e"/><rect x="52" y="706.52" width="3" height="1" fill="#4c4b4e"/><rect x="52" y="709.73" width="3" height="1" fill="#4c4b4e"/><rect x="52" y="712.93" width="3" height="1" fill="#4c4b4e"/><rect x="41" y="716.14" width="14" height="1" fill="#68676a"/><rect x="52" y="719.35" width="3" height="1" fill="#4c4b4e"/><rect x="52" y="722.55" width="3" height="1" fill="#4c4b4e"/><rect x="52" y="725.76" width="3" height="1" fill="#4c4b4e"/><rect x="52" y="728.96" width="3" height="1" fill="#4c4b4e"/><rect x="49" y="732.17" width="6" height="1" fill="#5f5e61"/><rect x="52" y="735.38" width="3" height="1" fill="#4c4b4e"/><rect x="52" y="738.58" width="3" height="1" fill="#4c4b4e"/><rect x="52" y="741.79" width="3" height="1" fill="#4c4b4e"/><rect x="52" y="744.99" width="3" height="1" fill="#4c4b4e"/><rect x="41" y="748.20" width="14" height="1" fill="#68676a"/><rect x="52" y="751.41" width="3" height="1" fill="#4c4b4e"/><rect x="52" y="754.61" width="3" height="1" fill="#4c4b4e"/><rect x="52" y="757.82" width="3" height="1" fill="#4c4b4e"/><rect x="52" y="761.02" width="3" height="1" fill="#4c4b4e"/><rect x="49" y="764.23" width="6" height="1" fill="#5f5e61"/><rect x="52" y="767.44" width="3" height="1" fill="#4c4b4e"/><rect x="52" y="770.64" width="3" height="1" fill="#4c4b4e"/><rect x="52" y="773.85" width="3" height="1" fill="#4c4b4e"/><rect x="52" y="777.05" width="3" height="1" fill="#4c4b4e"/><rect x="41" y="780.26" width="14" height="1" fill="#68676a"/><rect x="52" y="783.47" width="3" height="1" fill="#4c4b4e"/><rect x="52" y="786.67" width="3" height="1" fill="#4c4b4e"/><rect x="52" y="789.88" width="3" height="1" fill="#4c4b4e"/><rect x="52" y="793.08" width="3" height="1" fill="#4c4b4e"/><rect x="49" y="796.29" width="6" height="1" fill="#5f5e61"/><rect x="52" y="799.50" width="3" height="1" fill="#4c4b4e"/><rect x="52" y="802.70" width="3" height="1" fill="#4c4b4e"/><rect x="52" y="805.91" width="3" height="1" fill="#4c4b4e"/><rect x="52" y="809.11" width="3" height="1" fill="#4c4b4e"/><rect x="41" y="812.32" width="14" height="1" fill="#68676a"/><rect x="52" y="815.53" width="3" height="1" fill="#4c4b4e"/><rect x="52" y="818.73" width="3" height="1" fill="#4c4b4e"/><rect x="52" y="821.94" width="3" height="1" fill="#4c4b4e"/><rect x="52" y="825.14" width="3" height="1" fill="#4c4b4e"/><rect x="49" y="828.35" width="6" height="1" fill="#5f5e61"/><rect x="52" y="831.56" width="3" height="1" fill="#4c4b4e"/><rect x="52" y="834.76" width="3" height="1" fill="#4c4b4e"/><rect x="52" y="837.97" width="3" height="1" fill="#4c4b4e"/><rect x="52" y="841.17" width="3" height="1" fill="#4c4b4e"/><rect x="41" y="844.38" width="14" height="1" fill="#68676a"/><rect x="52" y="847.59" width="3" height="1" fill="#4c4b4e"/><rect x="52" y="850.79" width="3" height="1" fill="#4c4b4e"/><rect x="52" y="854.00" width="3" height="1" fill="#4c4b4e"/><rect x="52" y="857.20" width="3" height="1" fill="#4c4b4e"/><rect x="49" y="860.41" width="6" height="1" fill="#5f5e61"/><rect x="52" y="863.62" width="3" height="1" fill="#4c4b4e"/><rect x="52" y="866.82" width="3" height="1" fill="#4c4b4e"/><rect x="52" y="870.03" width="3" height="1" fill="#4c4b4e"/><rect x="52" y="873.23" width="3" height="1" fill="#4c4b4e"/><rect x="41" y="876.44" width="14" height="1" fill="#68676a"/><rect x="52" y="879.65" width="3" height="1" fill="#4c4b4e"/><rect x="52" y="882.85" width="3" height="1" fill="#4c4b4e"/><rect x="52" y="886.06" width="3" height="1" fill="#4c4b4e"/><rect x="52" y="889.26" width="3" height="1" fill="#4c4b4e"/><rect x="49" y="892.47" width="6" height="1" fill="#5f5e61"/><rect x="52" y="895.68" width="3" height="1" fill="#4c4b4e"/><rect x="52" y="898.88" width="3" height="1" fill="#4c4b4e"/><rect x="52" y="902.09" width="3" height="1" fill="#4c4b4e"/><rect x="52" y="905.29" width="3" height="1" fill="#4c4b4e"/><rect x="41" y="908.50" width="14" height="1" fill="#68676a"/><rect x="52" y="911.71" width="3" height="1" fill="#4c4b4e"/><rect x="52" y="914.91" width="3" height="1" fill="#4c4b4e"/><rect x="52" y="918.12" width="3" height="1" fill="#4c4b4e"/><rect x="52" y="921.32" width="3" height="1" fill="#4c4b4e"/><rect x="49" y="924.53" width="6" height="1" fill="#5f5e61"/><rect x="52" y="927.74" width="3" height="1" fill="#4c4b4e"/><rect x="52" y="930.94" width="3" height="1" fill="#4c4b4e"/><rect x="52" y="934.15" width="3" height="1" fill="#4c4b4e"/><rect x="52" y="937.35" width="3" height="1" fill="#4c4b4e"/><rect x="41" y="940.56" width="14" height="1" fill="#68676a"/><rect x="52" y="943.77" width="3" height="1" fill="#4c4b4e"/><rect x="52" y="946.97" width="3" height="1" fill="#4c4b4e"/><rect x="52" y="950.18" width="3" height="1" fill="#4c4b4e"/><rect x="52" y="953.38" width="3" height="1" fill="#4c4b4e"/><rect x="49" y="956.59" width="6" height="1" fill="#5f5e61"/><rect x="52" y="959.80" width="3" height="1" fill="#4c4b4e"/><rect x="52" y="963.00" width="3" height="1" fill="#4c4b4e"/><rect x="52" y="966.21" width="3" height="1" fill="#4c4b4e"/><rect x="52" y="969.41" width="3" height="1" fill="#4c4b4e"/><rect x="41" y="972.62" width="14" height="1" fill="#68676a"/><rect x="52" y="975.83" width="3" height="1" fill="#4c4b4e"/><rect x="52" y="979.03" width="3" height="1" fill="#4c4b4e"/><rect x="52" y="982.24" width="3" height="1" fill="#4c4b4e"/><rect x="52" y="985.44" width="3" height="1" fill="#4c4b4e"/><rect x="49" y="988.65" width="6" height="1" fill="#5f5e61"/><rect x="52" y="991.86" width="3" height="1" fill="#4c4b4e"/><rect x="52" y="995.06" width="3" height="1" fill="#4c4b4e"/><rect x="52" y="998.27" width="3" height="1" fill="#4c4b4e"/></svg>
<svg style="position:absolute;left:41px;top:75px;" width="14" height="14" viewBox="0 0 14 14"><path d="M0,10.5 L14,10.5 M10.5,0 L10.5,14 M4.5,3 L4.5,14 M0,5.5 L14,5.5" stroke="#6a696c" stroke-width="1"/></svg>
<div class="t" style="left:76.56px;top:77.23px;font-size:8px;line-height:8px;color:#d9d8da;font-weight:400;font-family:'Liberation Sans',sans-serif;letter-spacing:-0.2px">10</div>
<div class="t" style="left:108.62px;top:77.23px;font-size:8px;line-height:8px;color:#d9d8da;font-weight:400;font-family:'Liberation Sans',sans-serif;letter-spacing:-0.2px">20</div>
<div class="t" style="left:140.68px;top:77.23px;font-size:8px;line-height:8px;color:#d9d8da;font-weight:400;font-family:'Liberation Sans',sans-serif;letter-spacing:-0.2px">30</div>
<div class="t" style="left:172.74px;top:77.23px;font-size:8px;line-height:8px;color:#d9d8da;font-weight:400;font-family:'Liberation Sans',sans-serif;letter-spacing:-0.2px">40</div>
<div class="t" style="left:204.8px;top:77.23px;font-size:8px;line-height:8px;color:#d9d8da;font-weight:400;font-family:'Liberation Sans',sans-serif;letter-spacing:-0.2px">50</div>
<div class="t" style="left:236.85999999999999px;top:77.23px;font-size:8px;line-height:8px;color:#d9d8da;font-weight:400;font-family:'Liberation Sans',sans-serif;letter-spacing:-0.2px">60</div>
<div class="t" style="left:268.91999999999996px;top:77.23px;font-size:8px;line-height:8px;color:#d9d8da;font-weight:400;font-family:'Liberation Sans',sans-serif;letter-spacing:-0.2px">70</div>
<div class="t" style="left:300.98px;top:77.23px;font-size:8px;line-height:8px;color:#d9d8da;font-weight:400;font-family:'Liberation Sans',sans-serif;letter-spacing:-0.2px">80</div>
<div class="t" style="left:333.04px;top:77.23px;font-size:8px;line-height:8px;color:#d9d8da;font-weight:400;font-family:'Liberation Sans',sans-serif;letter-spacing:-0.2px">90</div>
<div class="t" style="left:365.1px;top:77.23px;font-size:8px;line-height:8px;color:#d9d8da;font-weight:400;font-family:'Liberation Sans',sans-serif;letter-spacing:-0.2px">100</div>
<div class="t" style="left:397.15999999999997px;top:77.23px;font-size:8px;line-height:8px;color:#d9d8da;font-weight:400;font-family:'Liberation Sans',sans-serif;letter-spacing:-0.2px">110</div>
<div class="t" style="left:429.21999999999997px;top:77.23px;font-size:8px;line-height:8px;color:#d9d8da;font-weight:400;font-family:'Liberation Sans',sans-serif;letter-spacing:-0.2px">120</div>
<div class="t" style="left:461.28px;top:77.23px;font-size:8px;line-height:8px;color:#d9d8da;font-weight:400;font-family:'Liberation Sans',sans-serif;letter-spacing:-0.2px">130</div>
<div class="t" style="left:493.34px;top:77.23px;font-size:8px;line-height:8px;color:#d9d8da;font-weight:400;font-family:'Liberation Sans',sans-serif;letter-spacing:-0.2px">140</div>
<div class="t" style="left:525.4px;top:77.23px;font-size:8px;line-height:8px;color:#d9d8da;font-weight:400;font-family:'Liberation Sans',sans-serif;letter-spacing:-0.2px">150</div>
<div class="t" style="left:557.46px;top:77.23px;font-size:8px;line-height:8px;color:#d9d8da;font-weight:400;font-family:'Liberation Sans',sans-serif;letter-spacing:-0.2px">160</div>
<div class="t" style="left:589.52px;top:77.23px;font-size:8px;line-height:8px;color:#d9d8da;font-weight:400;font-family:'Liberation Sans',sans-serif;letter-spacing:-0.2px">170</div>
<div class="t" style="left:621.58px;top:77.23px;font-size:8px;line-height:8px;color:#d9d8da;font-weight:400;font-family:'Liberation Sans',sans-serif;letter-spacing:-0.2px">180</div>
<div class="t" style="left:653.64px;top:77.23px;font-size:8px;line-height:8px;color:#d9d8da;font-weight:400;font-family:'Liberation Sans',sans-serif;letter-spacing:-0.2px">190</div>
<div class="t" style="left:685.7px;top:77.23px;font-size:8px;line-height:8px;color:#d9d8da;font-weight:400;font-family:'Liberation Sans',sans-serif;letter-spacing:-0.2px">200</div>
<div class="t" style="left:717.76px;top:77.23px;font-size:8px;line-height:8px;color:#d9d8da;font-weight:400;font-family:'Liberation Sans',sans-serif;letter-spacing:-0.2px">210</div>
<div class="t" style="left:749.8199999999999px;top:77.23px;font-size:8px;line-height:8px;color:#d9d8da;font-weight:400;font-family:'Liberation Sans',sans-serif;letter-spacing:-0.2px">220</div>
<div class="t" style="left:781.88px;top:77.23px;font-size:8px;line-height:8px;color:#d9d8da;font-weight:400;font-family:'Liberation Sans',sans-serif;letter-spacing:-0.2px">230</div>
<div class="t" style="left:813.9399999999999px;top:77.23px;font-size:8px;line-height:8px;color:#d9d8da;font-weight:400;font-family:'Liberation Sans',sans-serif;letter-spacing:-0.2px">240</div>
<div class="t" style="left:846.0px;top:77.23px;font-size:8px;line-height:8px;color:#d9d8da;font-weight:400;font-family:'Liberation Sans',sans-serif;letter-spacing:-0.2px">250</div>
<div class="t" style="left:878.06px;top:77.23px;font-size:8px;line-height:8px;color:#d9d8da;font-weight:400;font-family:'Liberation Sans',sans-serif;letter-spacing:-0.2px">260</div>
<div class="t" style="left:910.12px;top:77.23px;font-size:8px;line-height:8px;color:#d9d8da;font-weight:400;font-family:'Liberation Sans',sans-serif;letter-spacing:-0.2px">270</div>
<div class="t" style="left:942.18px;top:77.23px;font-size:8px;line-height:8px;color:#d9d8da;font-weight:400;font-family:'Liberation Sans',sans-serif;letter-spacing:-0.2px">280</div>
<div class="t" style="left:974.24px;top:77.23px;font-size:8px;line-height:8px;color:#d9d8da;font-weight:400;font-family:'Liberation Sans',sans-serif;letter-spacing:-0.2px">290</div>
<div class="t" style="left:1006.3px;top:77.23px;font-size:8px;line-height:8px;color:#d9d8da;font-weight:400;font-family:'Liberation Sans',sans-serif;letter-spacing:-0.2px">300</div>
<div class="t" style="left:1038.3600000000001px;top:77.23px;font-size:8px;line-height:8px;color:#d9d8da;font-weight:400;font-family:'Liberation Sans',sans-serif;letter-spacing:-0.2px">310</div>
<div class="t" style="left:1070.42px;top:77.23px;font-size:8px;line-height:8px;color:#d9d8da;font-weight:400;font-family:'Liberation Sans',sans-serif;letter-spacing:-0.2px">320</div>
<div class="t" style="left:1102.48px;top:77.23px;font-size:8px;line-height:8px;color:#d9d8da;font-weight:400;font-family:'Liberation Sans',sans-serif;letter-spacing:-0.2px">330</div>
<div class="t" style="left:1134.54px;top:77.23px;font-size:8px;line-height:8px;color:#d9d8da;font-weight:400;font-family:'Liberation Sans',sans-serif;letter-spacing:-0.2px">340</div>
<div class="t" style="left:1166.6px;top:77.23px;font-size:8px;line-height:8px;color:#d9d8da;font-weight:400;font-family:'Liberation Sans',sans-serif;letter-spacing:-0.2px">350</div>
<div class="t" style="left:1198.66px;top:77.23px;font-size:8px;line-height:8px;color:#d9d8da;font-weight:400;font-family:'Liberation Sans',sans-serif;letter-spacing:-0.2px">360</div>
<div class="t" style="left:1230.72px;top:77.23px;font-size:8px;line-height:8px;color:#d9d8da;font-weight:400;font-family:'Liberation Sans',sans-serif;letter-spacing:-0.2px">370</div>
<div class="t" style="left:1262.78px;top:77.23px;font-size:8px;line-height:8px;color:#d9d8da;font-weight:400;font-family:'Liberation Sans',sans-serif;letter-spacing:-0.2px">380</div>
<div class="t" style="left:1294.84px;top:77.23px;font-size:8px;line-height:8px;color:#d9d8da;font-weight:400;font-family:'Liberation Sans',sans-serif;letter-spacing:-0.2px">390</div>
<div class="t" style="left:1326.9px;top:77.23px;font-size:8px;line-height:8px;color:#d9d8da;font-weight:400;font-family:'Liberation Sans',sans-serif;letter-spacing:-0.2px">400</div>
<div class="t" style="left:1358.96px;top:77.23px;font-size:8px;line-height:8px;color:#d9d8da;font-weight:400;font-family:'Liberation Sans',sans-serif;letter-spacing:-0.2px">410</div>
<div class="t" style="left:1391.02px;top:77.23px;font-size:8px;line-height:8px;color:#d9d8da;font-weight:400;font-family:'Liberation Sans',sans-serif;letter-spacing:-0.2px">420</div>
<div class="t" style="left:1423.08px;top:77.23px;font-size:8px;line-height:8px;color:#d9d8da;font-weight:400;font-family:'Liberation Sans',sans-serif;letter-spacing:-0.2px">430</div>
<div class="t" style="left:-452px;width:1000px;text-align:center;top:107.73px;font-size:8px;line-height:8px;color:#d9d8da;font-weight:400;font-family:'Liberation Sans',sans-serif;">0</div>
<div class="t" style="left:-452.5px;width:1000px;text-align:center;top:140.33px;font-size:7px;line-height:7px;color:#cfcfd1;font-weight:400;font-family:'Liberation Sans',sans-serif;transform:scaleX(0.8)">1</div>
<div class="t" style="left:-452.5px;width:1000px;text-align:center;top:146.93px;font-size:7px;line-height:7px;color:#cfcfd1;font-weight:400;font-family:'Liberation Sans',sans-serif;transform:scaleX(0.8)">0</div>
<div class="t" style="left:-452.5px;width:1000px;text-align:center;top:172.39px;font-size:7px;line-height:7px;color:#cfcfd1;font-weight:400;font-family:'Liberation Sans',sans-serif;transform:scaleX(0.8)">2</div>
<div class="t" style="left:-452.5px;width:1000px;text-align:center;top:178.99px;font-size:7px;line-height:7px;color:#cfcfd1;font-weight:400;font-family:'Liberation Sans',sans-serif;transform:scaleX(0.8)">0</div>
<div class="t" style="left:-452.5px;width:1000px;text-align:center;top:204.45px;font-size:7px;line-height:7px;color:#cfcfd1;font-weight:400;font-family:'Liberation Sans',sans-serif;transform:scaleX(0.8)">3</div>
<div class="t" style="left:-452.5px;width:1000px;text-align:center;top:211.05px;font-size:7px;line-height:7px;color:#cfcfd1;font-weight:400;font-family:'Liberation Sans',sans-serif;transform:scaleX(0.8)">0</div>
<div class="t" style="left:-452.5px;width:1000px;text-align:center;top:236.51px;font-size:7px;line-height:7px;color:#cfcfd1;font-weight:400;font-family:'Liberation Sans',sans-serif;transform:scaleX(0.8)">4</div>
<div class="t" style="left:-452.5px;width:1000px;text-align:center;top:243.11px;font-size:7px;line-height:7px;color:#cfcfd1;font-weight:400;font-family:'Liberation Sans',sans-serif;transform:scaleX(0.8)">0</div>
<div class="t" style="left:-452.5px;width:1000px;text-align:center;top:268.57px;font-size:7px;line-height:7px;color:#cfcfd1;font-weight:400;font-family:'Liberation Sans',sans-serif;transform:scaleX(0.8)">5</div>
<div class="t" style="left:-452.5px;width:1000px;text-align:center;top:275.17px;font-size:7px;line-height:7px;color:#cfcfd1;font-weight:400;font-family:'Liberation Sans',sans-serif;transform:scaleX(0.8)">0</div>
<div class="t" style="left:-452.5px;width:1000px;text-align:center;top:300.63px;font-size:7px;line-height:7px;color:#cfcfd1;font-weight:400;font-family:'Liberation Sans',sans-serif;transform:scaleX(0.8)">6</div>
<div class="t" style="left:-452.5px;width:1000px;text-align:center;top:307.23px;font-size:7px;line-height:7px;color:#cfcfd1;font-weight:400;font-family:'Liberation Sans',sans-serif;transform:scaleX(0.8)">0</div>
<div class="t" style="left:-452.5px;width:1000px;text-align:center;top:332.69px;font-size:7px;line-height:7px;color:#cfcfd1;font-weight:400;font-family:'Liberation Sans',sans-serif;transform:scaleX(0.8)">7</div>
<div class="t" style="left:-452.5px;width:1000px;text-align:center;top:339.29px;font-size:7px;line-height:7px;color:#cfcfd1;font-weight:400;font-family:'Liberation Sans',sans-serif;transform:scaleX(0.8)">0</div>
<div class="t" style="left:-452.5px;width:1000px;text-align:center;top:364.75px;font-size:7px;line-height:7px;color:#cfcfd1;font-weight:400;font-family:'Liberation Sans',sans-serif;transform:scaleX(0.8)">8</div>
<div class="t" style="left:-452.5px;width:1000px;text-align:center;top:371.35px;font-size:7px;line-height:7px;color:#cfcfd1;font-weight:400;font-family:'Liberation Sans',sans-serif;transform:scaleX(0.8)">0</div>
<div class="t" style="left:-452.5px;width:1000px;text-align:center;top:396.81px;font-size:7px;line-height:7px;color:#cfcfd1;font-weight:400;font-family:'Liberation Sans',sans-serif;transform:scaleX(0.8)">9</div>
<div class="t" style="left:-452.5px;width:1000px;text-align:center;top:403.41px;font-size:7px;line-height:7px;color:#cfcfd1;font-weight:400;font-family:'Liberation Sans',sans-serif;transform:scaleX(0.8)">0</div>
<div class="t" style="left:-452.5px;width:1000px;text-align:center;top:428.87px;font-size:7px;line-height:7px;color:#cfcfd1;font-weight:400;font-family:'Liberation Sans',sans-serif;transform:scaleX(0.8)">1</div>
<div class="t" style="left:-452.5px;width:1000px;text-align:center;top:435.47px;font-size:7px;line-height:7px;color:#cfcfd1;font-weight:400;font-family:'Liberation Sans',sans-serif;transform:scaleX(0.8)">0</div>
<div class="t" style="left:-452.5px;width:1000px;text-align:center;top:442.07px;font-size:7px;line-height:7px;color:#cfcfd1;font-weight:400;font-family:'Liberation Sans',sans-serif;transform:scaleX(0.8)">0</div>
<div class="t" style="left:-452.5px;width:1000px;text-align:center;top:460.93px;font-size:7px;line-height:7px;color:#cfcfd1;font-weight:400;font-family:'Liberation Sans',sans-serif;transform:scaleX(0.8)">1</div>
<div class="t" style="left:-452.5px;width:1000px;text-align:center;top:467.53px;font-size:7px;line-height:7px;color:#cfcfd1;font-weight:400;font-family:'Liberation Sans',sans-serif;transform:scaleX(0.8)">1</div>
<div class="t" style="left:-452.5px;width:1000px;text-align:center;top:474.13px;font-size:7px;line-height:7px;color:#cfcfd1;font-weight:400;font-family:'Liberation Sans',sans-serif;transform:scaleX(0.8)">0</div>
<div class="t" style="left:-452.5px;width:1000px;text-align:center;top:492.99px;font-size:7px;line-height:7px;color:#cfcfd1;font-weight:400;font-family:'Liberation Sans',sans-serif;transform:scaleX(0.8)">1</div>
<div class="t" style="left:-452.5px;width:1000px;text-align:center;top:499.59px;font-size:7px;line-height:7px;color:#cfcfd1;font-weight:400;font-family:'Liberation Sans',sans-serif;transform:scaleX(0.8)">2</div>
<div class="t" style="left:-452.5px;width:1000px;text-align:center;top:506.19px;font-size:7px;line-height:7px;color:#cfcfd1;font-weight:400;font-family:'Liberation Sans',sans-serif;transform:scaleX(0.8)">0</div>
<div class="t" style="left:-452.5px;width:1000px;text-align:center;top:525.05px;font-size:7px;line-height:7px;color:#cfcfd1;font-weight:400;font-family:'Liberation Sans',sans-serif;transform:scaleX(0.8)">1</div>
<div class="t" style="left:-452.5px;width:1000px;text-align:center;top:531.65px;font-size:7px;line-height:7px;color:#cfcfd1;font-weight:400;font-family:'Liberation Sans',sans-serif;transform:scaleX(0.8)">3</div>
<div class="t" style="left:-452.5px;width:1000px;text-align:center;top:538.25px;font-size:7px;line-height:7px;color:#cfcfd1;font-weight:400;font-family:'Liberation Sans',sans-serif;transform:scaleX(0.8)">0</div>
<div class="t" style="left:-452.5px;width:1000px;text-align:center;top:557.11px;font-size:7px;line-height:7px;color:#cfcfd1;font-weight:400;font-family:'Liberation Sans',sans-serif;transform:scaleX(0.8)">1</div>
<div class="t" style="left:-452.5px;width:1000px;text-align:center;top:563.71px;font-size:7px;line-height:7px;color:#cfcfd1;font-weight:400;font-family:'Liberation Sans',sans-serif;transform:scaleX(0.8)">4</div>
<div class="t" style="left:-452.5px;width:1000px;text-align:center;top:570.31px;font-size:7px;line-height:7px;color:#cfcfd1;font-weight:400;font-family:'Liberation Sans',sans-serif;transform:scaleX(0.8)">0</div>
<div class="t" style="left:-452.5px;width:1000px;text-align:center;top:589.17px;font-size:7px;line-height:7px;color:#cfcfd1;font-weight:400;font-family:'Liberation Sans',sans-serif;transform:scaleX(0.8)">1</div>
<div class="t" style="left:-452.5px;width:1000px;text-align:center;top:595.77px;font-size:7px;line-height:7px;color:#cfcfd1;font-weight:400;font-family:'Liberation Sans',sans-serif;transform:scaleX(0.8)">5</div>
<div class="t" style="left:-452.5px;width:1000px;text-align:center;top:602.37px;font-size:7px;line-height:7px;color:#cfcfd1;font-weight:400;font-family:'Liberation Sans',sans-serif;transform:scaleX(0.8)">0</div>
<div class="t" style="left:-452.5px;width:1000px;text-align:center;top:621.23px;font-size:7px;line-height:7px;color:#cfcfd1;font-weight:400;font-family:'Liberation Sans',sans-serif;transform:scaleX(0.8)">1</div>
<div class="t" style="left:-452.5px;width:1000px;text-align:center;top:627.83px;font-size:7px;line-height:7px;color:#cfcfd1;font-weight:400;font-family:'Liberation Sans',sans-serif;transform:scaleX(0.8)">6</div>
<div class="t" style="left:-452.5px;width:1000px;text-align:center;top:634.43px;font-size:7px;line-height:7px;color:#cfcfd1;font-weight:400;font-family:'Liberation Sans',sans-serif;transform:scaleX(0.8)">0</div>
<div class="t" style="left:-452.5px;width:1000px;text-align:center;top:653.29px;font-size:7px;line-height:7px;color:#cfcfd1;font-weight:400;font-family:'Liberation Sans',sans-serif;transform:scaleX(0.8)">1</div>
<div class="t" style="left:-452.5px;width:1000px;text-align:center;top:659.89px;font-size:7px;line-height:7px;color:#cfcfd1;font-weight:400;font-family:'Liberation Sans',sans-serif;transform:scaleX(0.8)">7</div>
<div class="t" style="left:-452.5px;width:1000px;text-align:center;top:666.49px;font-size:7px;line-height:7px;color:#cfcfd1;font-weight:400;font-family:'Liberation Sans',sans-serif;transform:scaleX(0.8)">0</div>
<div class="t" style="left:-452.5px;width:1000px;text-align:center;top:685.35px;font-size:7px;line-height:7px;color:#cfcfd1;font-weight:400;font-family:'Liberation Sans',sans-serif;transform:scaleX(0.8)">1</div>
<div class="t" style="left:-452.5px;width:1000px;text-align:center;top:691.95px;font-size:7px;line-height:7px;color:#cfcfd1;font-weight:400;font-family:'Liberation Sans',sans-serif;transform:scaleX(0.8)">8</div>
<div class="t" style="left:-452.5px;width:1000px;text-align:center;top:698.55px;font-size:7px;line-height:7px;color:#cfcfd1;font-weight:400;font-family:'Liberation Sans',sans-serif;transform:scaleX(0.8)">0</div>
<div class="t" style="left:-452.5px;width:1000px;text-align:center;top:717.41px;font-size:7px;line-height:7px;color:#cfcfd1;font-weight:400;font-family:'Liberation Sans',sans-serif;transform:scaleX(0.8)">1</div>
<div class="t" style="left:-452.5px;width:1000px;text-align:center;top:724.01px;font-size:7px;line-height:7px;color:#cfcfd1;font-weight:400;font-family:'Liberation Sans',sans-serif;transform:scaleX(0.8)">9</div>
<div class="t" style="left:-452.5px;width:1000px;text-align:center;top:730.61px;font-size:7px;line-height:7px;color:#cfcfd1;font-weight:400;font-family:'Liberation Sans',sans-serif;transform:scaleX(0.8)">0</div>
<div class="t" style="left:-452.5px;width:1000px;text-align:center;top:749.47px;font-size:7px;line-height:7px;color:#cfcfd1;font-weight:400;font-family:'Liberation Sans',sans-serif;transform:scaleX(0.8)">2</div>
<div class="t" style="left:-452.5px;width:1000px;text-align:center;top:756.07px;font-size:7px;line-height:7px;color:#cfcfd1;font-weight:400;font-family:'Liberation Sans',sans-serif;transform:scaleX(0.8)">0</div>
<div class="t" style="left:-452.5px;width:1000px;text-align:center;top:762.67px;font-size:7px;line-height:7px;color:#cfcfd1;font-weight:400;font-family:'Liberation Sans',sans-serif;transform:scaleX(0.8)">0</div>
<div class="t" style="left:-452.5px;width:1000px;text-align:center;top:781.53px;font-size:7px;line-height:7px;color:#cfcfd1;font-weight:400;font-family:'Liberation Sans',sans-serif;transform:scaleX(0.8)">2</div>
<div class="t" style="left:-452.5px;width:1000px;text-align:center;top:788.13px;font-size:7px;line-height:7px;color:#cfcfd1;font-weight:400;font-family:'Liberation Sans',sans-serif;transform:scaleX(0.8)">1</div>
<div class="t" style="left:-452.5px;width:1000px;text-align:center;top:794.73px;font-size:7px;line-height:7px;color:#cfcfd1;font-weight:400;font-family:'Liberation Sans',sans-serif;transform:scaleX(0.8)">0</div>
<div class="t" style="left:-452.5px;width:1000px;text-align:center;top:813.59px;font-size:7px;line-height:7px;color:#cfcfd1;font-weight:400;font-family:'Liberation Sans',sans-serif;transform:scaleX(0.8)">2</div>
<div class="t" style="left:-452.5px;width:1000px;text-align:center;top:820.19px;font-size:7px;line-height:7px;color:#cfcfd1;font-weight:400;font-family:'Liberation Sans',sans-serif;transform:scaleX(0.8)">2</div>
<div class="t" style="left:-452.5px;width:1000px;text-align:center;top:826.79px;font-size:7px;line-height:7px;color:#cfcfd1;font-weight:400;font-family:'Liberation Sans',sans-serif;transform:scaleX(0.8)">0</div>
<div class="t" style="left:-452.5px;width:1000px;text-align:center;top:845.65px;font-size:7px;line-height:7px;color:#cfcfd1;font-weight:400;font-family:'Liberation Sans',sans-serif;transform:scaleX(0.8)">2</div>
<div class="t" style="left:-452.5px;width:1000px;text-align:center;top:852.25px;font-size:7px;line-height:7px;color:#cfcfd1;font-weight:400;font-family:'Liberation Sans',sans-serif;transform:scaleX(0.8)">3</div>
<div class="t" style="left:-452.5px;width:1000px;text-align:center;top:858.85px;font-size:7px;line-height:7px;color:#cfcfd1;font-weight:400;font-family:'Liberation Sans',sans-serif;transform:scaleX(0.8)">0</div>
<div class="t" style="left:-452.5px;width:1000px;text-align:center;top:877.71px;font-size:7px;line-height:7px;color:#cfcfd1;font-weight:400;font-family:'Liberation Sans',sans-serif;transform:scaleX(0.8)">2</div>
<div class="t" style="left:-452.5px;width:1000px;text-align:center;top:884.31px;font-size:7px;line-height:7px;color:#cfcfd1;font-weight:400;font-family:'Liberation Sans',sans-serif;transform:scaleX(0.8)">4</div>
<div class="t" style="left:-452.5px;width:1000px;text-align:center;top:890.91px;font-size:7px;line-height:7px;color:#cfcfd1;font-weight:400;font-family:'Liberation Sans',sans-serif;transform:scaleX(0.8)">0</div>
<div class="t" style="left:-452.5px;width:1000px;text-align:center;top:909.77px;font-size:7px;line-height:7px;color:#cfcfd1;font-weight:400;font-family:'Liberation Sans',sans-serif;transform:scaleX(0.8)">2</div>
<div class="t" style="left:-452.5px;width:1000px;text-align:center;top:916.37px;font-size:7px;line-height:7px;color:#cfcfd1;font-weight:400;font-family:'Liberation Sans',sans-serif;transform:scaleX(0.8)">5</div>
<div class="t" style="left:-452.5px;width:1000px;text-align:center;top:922.97px;font-size:7px;line-height:7px;color:#cfcfd1;font-weight:400;font-family:'Liberation Sans',sans-serif;transform:scaleX(0.8)">0</div>
<div class="t" style="left:-452.5px;width:1000px;text-align:center;top:941.83px;font-size:7px;line-height:7px;color:#cfcfd1;font-weight:400;font-family:'Liberation Sans',sans-serif;transform:scaleX(0.8)">2</div>
<div class="t" style="left:-452.5px;width:1000px;text-align:center;top:948.43px;font-size:7px;line-height:7px;color:#cfcfd1;font-weight:400;font-family:'Liberation Sans',sans-serif;transform:scaleX(0.8)">6</div>
<div class="t" style="left:-452.5px;width:1000px;text-align:center;top:955.03px;font-size:7px;line-height:7px;color:#cfcfd1;font-weight:400;font-family:'Liberation Sans',sans-serif;transform:scaleX(0.8)">0</div>
<div class="t" style="left:-452.5px;width:1000px;text-align:center;top:973.89px;font-size:7px;line-height:7px;color:#cfcfd1;font-weight:400;font-family:'Liberation Sans',sans-serif;transform:scaleX(0.8)">2</div>
<div class="t" style="left:-452.5px;width:1000px;text-align:center;top:980.49px;font-size:7px;line-height:7px;color:#cfcfd1;font-weight:400;font-family:'Liberation Sans',sans-serif;transform:scaleX(0.8)">7</div>
<div class="t" style="left:-452.5px;width:1000px;text-align:center;top:987.09px;font-size:7px;line-height:7px;color:#cfcfd1;font-weight:400;font-family:'Liberation Sans',sans-serif;transform:scaleX(0.8)">0</div>
<div style="left:0;top:0;width:1920px;height:1002px;clip-path:inset(89px 487px 3px 55px)">
<div style="left:55px;top:89px;width:1378px;height:910px;background:#5f5d61"></div>
<div style="left:1393px;top:96px;width:10px;height:903px;background:#655962"></div>
<div style="left:55px;top:96px;width:1348px;height:4px;background:#655962"></div>
<div style="left:1403px;top:100px;width:5px;height:899px;background:#5b5e61"></div>
<div style="left:55px;top:88px;width:1378px;height:1px;background:#747276"></div>
<div style="left:42px;top:107px;width:674px;height:892px;background:#f3f2f5"></div>
<div style="left:716px;top:107px;width:673px;height:892px;background:#f3f2f5"></div>
<div style="left:55px;top:106px;width:1335px;height:1px;background:#1c1b1e"></div>
<div style="left:1389px;top:106px;width:1px;height:893px;background:#18171a"></div>
<div style="left:715px;top:107px;width:2px;height:892px;background:#a9a8ab"></div>
<div style="left:55px;top:97px;width:1344px;height:1.5px;background:#78666f"></div>
<div style="left:1397px;top:97px;width:1.5px;height:902px;background:#78666f"></div>
<div style="left:122px;top:171px;width:531px;height:808px;border:1px solid #d3bcdb"></div>
<div style="left:288px;top:171px;width:1px;height:808px;background:#d0b8d8"></div>
<div style="left:304px;top:171px;width:1px;height:808px;background:#d0b8d8"></div>
<div style="left:470px;top:171px;width:1px;height:808px;background:#d0b8d8"></div>
<div style="left:485px;top:171px;width:1px;height:808px;background:#d0b8d8"></div>
<div style="left:779px;top:171px;width:530px;height:808px;border:1px solid #d3bcdb"></div>
<div style="left:945px;top:171px;width:1px;height:808px;background:#d0b8d8"></div>
<div style="left:960px;top:171px;width:1px;height:808px;background:#d0b8d8"></div>
<div style="left:1126px;top:171px;width:1px;height:808px;background:#d0b8d8"></div>
<div style="left:1142px;top:171px;width:1px;height:808px;background:#d0b8d8"></div>
<svg style="position:absolute;left:0px;top:0px;" width="1440" height="1002" viewBox="0 0 1440 1002"><line x1="32" y1="97" x2="652" y2="1070" stroke="#c6cadc" stroke-width="1"/><line x1="652" y1="97" x2="32" y2="1070" stroke="#c6cadc" stroke-width="1"/><line x1="652.5" y1="97" x2="652.5" y2="1002" stroke="#c4b4d8" stroke-width="1"/></svg>
<div class="t" style="right:612px;top:133.80px;font-size:11.1px;line-height:11.1px;color:#1a1a1a;font-weight:700;font-family:'Liberation Serif',serif;letter-spacing:0.1px">TITEL DES BUCHPROJEKTS</div>
<div style="left:780px;top:152.3px;width:529px;height:1.7px;background:#4e4d50"></div>
<svg style="position:absolute;left:1304px;top:993px;" width="6" height="7" viewBox="0 0 6 7"><path d="M1,1.5 Q3,0 4.5,2 Q5,3.5 2,6" fill="none" stroke="#111" stroke-width="1.5"/></svg>
</div>
<div style="left:1433px;top:75px;width:12px;height:924px;background:#323033"></div>
<div style="left:1433px;top:75px;width:1px;height:924px;background:#1f1e20"></div>
<div style="left:1444px;top:75px;width:2px;height:924px;background:#1f1e20"></div>
<div style="left:1434px;top:130px;width:10px;height:386px;background:#9c9b9d"></div>
<div class="t" style="left:40px;top:950.73px;font-size:8px;line-height:8px;color:#f4f4f4;font-weight:700;font-family:'Liberation Sans',sans-serif;letter-spacing:-0.4px;text-shadow:0 0 1px #000">Web</div>
<div style="left:41px;top:959px;width:14px;height:1px;background:#e8e8e8"></div>
<svg style="position:absolute;left:1435px;top:79px;" width="10" height="7" viewBox="0 0 10 7"><path d="M1.5,6 L5,1 L8.5,6 Z" fill="#f0f0f0"/></svg>
<svg style="position:absolute;left:3px;top:3px;" width="60" height="22" viewBox="0 0 60 22"><circle cx="7.6" cy="10.5" r="4.6" fill="#ec5f5c" stroke="#b8453f" stroke-width="0.6"/><circle cx="22.6" cy="10.5" r="4.6" fill="#f3c23a" stroke="#b89020" stroke-width="0.6"/><circle cx="37.6" cy="10.5" r="4.6" fill="#38c149" stroke="#24902f" stroke-width="0.6"/></svg>
<div class="t" style="left:60px;top:8.34px;font-size:12px;line-height:12px;color:#8e4672;font-weight:400;font-family:'Liberation Sans',sans-serif;">Id</div>
<div style="left:89px;top:6px;width:13px;height:13px;background:#151416;border:1px solid #9b9a9d"></div>
<div class="t" style="left:-404.5px;width:1000px;text-align:center;top:9.23px;font-size:8px;line-height:8px;color:#e4e4e4;font-weight:700;font-family:'Liberation Sans',sans-serif;">Br</div>
<div style="left:116px;top:6px;width:13px;height:13px;background:#151416;border:1px solid #9b9a9d"></div>
<div class="t" style="left:-377.5px;width:1000px;text-align:center;top:9.23px;font-size:8px;line-height:8px;color:#e4e4e4;font-weight:700;font-family:'Liberation Sans',sans-serif;">St</div>
<div class="t" style="left:152px;top:8.54px;font-size:10px;line-height:10px;color:#dedede;font-weight:400;font-family:'Liberation Sans',sans-serif;">100 %</div>
<svg style="position:absolute;left:183px;top:12px;" width="5" height="3.5" viewBox="0 0 5 3.5"><path d="M0,0 L5,0 L2.5,3.5 Z" fill="#dcdcdc"/></svg>
<div style="left:199px;top:6px;width:1px;height:16px;background:#3c3b3d"></div>
<svg style="position:absolute;left:211px;top:6px;" width="16" height="14" viewBox="0 0 16 14"><rect x="1" y="1.5" width="14" height="11.5" fill="none" stroke="#d8d8d8" stroke-width="1.2"/><path d="M5,2.5 L5,0.5 M7.5,2.5 L7.5,0.5 M10,2.5 L10,0.5 M12.5,2.5 L12.5,0.5" stroke="#e0e0e0" stroke-width="1"/><rect x="5" y="5" width="8" height="6" fill="#8a898c"/><path d="M5,7 L13,7 M5,9 L13,9 M7.5,5 L7.5,11 M10,5 L10,11" stroke="#5a595c" stroke-width="0.6"/><path d="M2.5,5 L4,5 M2.5,8 L4,8" stroke="#e0e0e0"/></svg>
<svg style="position:absolute;left:227.5px;top:11px;" width="5" height="3.5" viewBox="0 0 5 3.5"><path d="M0,0 L5,0 L2.5,3.5 Z" fill="#dcdcdc"/></svg>
<svg style="position:absolute;left:246px;top:5px;" width="16" height="16" viewBox="0 0 16 16"><rect x="3.5" y="4" width="9" height="8" fill="#a9a8ab" stroke="#d8d8d8" stroke-width="1"/><rect x="5.5" y="6" width="5" height="4" fill="#d8d8d8"/><path d="M1,3 L3,1 M15,3 L13,1 M1,13 L3,15 M15,13 L13,15" stroke="#cfcfcf" stroke-width="1.2"/></svg>
<svg style="position:absolute;left:264px;top:11px;" width="5" height="3.5" viewBox="0 0 5 3.5"><path d="M0,0 L5,0 L2.5,3.5 Z" fill="#dcdcdc"/></svg>
<svg style="position:absolute;left:282px;top:5px;" width="17" height="15" viewBox="0 0 17 15"><rect x="1" y="1.5" width="15" height="12" fill="none" stroke="#d0d0d0" stroke-width="1.2"/><rect x="4" y="4" width="3.5" height="2.5" fill="#e8e8e8"/><rect x="9.5" y="4" width="3.5" height="2.5" fill="#e8e8e8"/><rect x="4" y="8.5" width="3.5" height="2.5" fill="#e8e8e8"/><rect x="9.5" y="8.5" width="3.5" height="2.5" fill="#e8e8e8"/></svg>
<svg style="position:absolute;left:300px;top:11px;" width="5" height="3.5" viewBox="0 0 5 3.5"><path d="M0,0 L5,0 L2.5,3.5 Z" fill="#dcdcdc"/></svg>
<div style="left:1634px;top:4px;width:88px;height:18px;background:#535154;border:1px solid #38373a;border-radius:2px"></div>
<svg style="position:absolute;left:1641px;top:7px;" width="11" height="11" viewBox="0 0 11 11"><path d="M1,5 L1,10 L10,10 L10,5" fill="none" stroke="#d8d8d8" stroke-width="1.2"/><path d="M5.5,8 L5.5,1 M3,3.5 L5.5,1 L8,3.5" fill="none" stroke="#d8d8d8" stroke-width="1.2"/></svg>
<div class="t" style="left:1654px;top:8.54px;font-size:10px;line-height:10px;color:#e2e2e2;font-weight:400;font-family:'Liberation Sans',sans-serif;">Publish Online</div>
<div style="left:1727px;top:6px;width:1px;height:16px;background:#3c3b3d"></div>
<div class="t" style="left:1736px;top:7.87px;font-size:10.2px;line-height:10.2px;color:#e6e6e6;font-weight:700;font-family:'Liberation Sans',sans-serif;">Grundlagen</div>
<svg style="position:absolute;left:1797px;top:12px;" width="4" height="3" viewBox="0 0 4 3"><path d="M0,0 L4,0 L2.0,3 Z" fill="#dcdcdc"/></svg>
<div style="left:1811px;top:6px;width:1px;height:16px;background:#3c3b3d"></div>
<div style="left:1820px;top:6px;width:83px;height:14px;background:#afaeb0;border:1px solid #2b2a2c;border-radius:1px"></div>
<svg style="position:absolute;left:1822px;top:7px;" width="12" height="12" viewBox="0 0 12 12"><circle cx="6.5" cy="5" r="3.2" fill="none" stroke="#222" stroke-width="1.2"/><path d="M4,7.5 L1.2,10.5" stroke="#222" stroke-width="1.6"/></svg>
<div style="left:3px;top:60px;width:38px;height:8px;background:#2b292c"></div>
<div class="t" style="left:6px;top:60.23px;font-size:8px;line-height:8px;color:#cfcfcf;font-weight:700;font-family:'Liberation Sans',sans-serif;">&#8249;&#8249;</div>
<div class="t" style="left:50px;top:65.38px;font-size:9px;line-height:9px;color:#c8c8c8;font-weight:400;font-family:'Liberation Sans',sans-serif;">&#215;</div>
<div class="t" style="left:62px;top:66.26px;font-size:8.2px;line-height:8.2px;color:#bdbcbf;font-weight:400;font-family:'Liberation Sans',sans-serif;letter-spacing:0.3px">01-kapitel.indd @ 100 %</div>
<div class="t" style="left:169px;top:65.38px;font-size:9px;line-height:9px;color:#c8c8c8;font-weight:400;font-family:'Liberation Sans',sans-serif;">&#215;</div>
<div class="t" style="left:181px;top:66.26px;font-size:8.2px;line-height:8.2px;color:#bdbcbf;font-weight:400;font-family:'Liberation Sans',sans-serif;letter-spacing:0.3px">*02-kapitel.indd @ 202 %</div>
<div style="left:286px;top:61px;width:109px;height:14px;background:#3a383b"></div>
<div class="t" style="left:291px;top:65.38px;font-size:9px;line-height:9px;color:#d8d8d8;font-weight:400;font-family:'Liberation Sans',sans-serif;">&#215;</div>
<div class="t" style="left:304px;top:66.26px;font-size:8.2px;line-height:8.2px;color:#ffffff;font-weight:700;font-family:'Liberation Sans',sans-serif;letter-spacing:0.05px">Unbenannt-8 @ 100 %</div>
<div style="left:14px;top:73px;width:14px;height:1px;background:#2a292b"></div>
<svg style="position:absolute;left:0px;top:0px;" width="45" height="350" viewBox="0 0 45 350"><path d="M8,83.5 L8,96 L11,93 L13.5,97.5 L15.5,96.5 L13,92 L16.5,92 Z" fill="#111" stroke="#e8e8e8" stroke-width="1.1"/><path d="M26.5,83.5 L26.5,96 L29.5,93 L32,97.5 L34,96.5 L31.5,92 L35,92 Z" fill="#e8e8e8" stroke="#e8e8e8" stroke-width="0.6"/><path d="M7,100.5 L13,100.5 L15,102.5 L15,111 L7,111 Z" fill="#d0d0d0"/><path d="M13,104 L13,111 L15,109.5 L17,111.5" fill="#e8e8e8" stroke="#333" stroke-width="0.5"/><path d="M23,100 L23,111 M37.5,100 L37.5,111" stroke="#e0e0e0" stroke-width="1.2"/><path d="M25.5,105.5 L35,105.5 M27.5,103.5 L25.5,105.5 L27.5,107.5 M33,103.5 L35,105.5 L33,107.5" fill="none" stroke="#e8e8e8" stroke-width="1.3"/><path d="M6,119 L6,128 L17,128 L17,119" fill="#bdbdbd" stroke="#e0e0e0" stroke-width="1"/><path d="M7,123 L16,123 M7,125.5 L16,125.5 M9.5,121 L9.5,128 M12.5,121 L12.5,128" stroke="#555" stroke-width="0.7"/><path d="M25,119 L25,128 L36,128 L36,119" fill="#bdbdbd" stroke="#e0e0e0" stroke-width="1"/><path d="M26,123 L35,123 M26,125.5 L35,125.5 M28.5,121 L28.5,128 M31.5,121 L31.5,128" stroke="#555" stroke-width="0.7"/><path d="M9,115 L12,119 M12,116 L12,119 L9,119" fill="none" stroke="#eee" stroke-width="1.3"/><path d="M35,115 L31,119 M31,116 L31,119 L34,119" fill="none" stroke="#eee" stroke-width="1.3"/><path d="M7.5,138.5 L16,138.5 M11.75,138.5 L11.75,147.5 M9.5,147.5 L14,147.5 M7.5,138.5 L7.5,140.5 M16,138.5 L16,140.5" fill="none" stroke="#e2e2e2" stroke-width="1.5"/><path d="M25,148 L36,137" stroke="#d8d8d8" stroke-width="1.2"/><path d="M7,164 L9,156 L14,152.5 L18,156.5 L14.5,161.5 Z" fill="#cfcfcf" stroke="#eee" stroke-width="0.8"/><path d="M7,164 L11.5,159" stroke="#444" stroke-width="0.8"/><path d="M24.5,164 L26,159.5 L33,152.5 L36,155.5 L29,162.5 Z" fill="#cfcfcf" stroke="#eee" stroke-width="0.8"/><rect x="6" y="170" width="11" height="8.5" fill="none" stroke="#e0e0e0" stroke-width="1.2"/><path d="M6,170 L17,178.5 M17,170 L6,178.5" stroke="#e0e0e0" stroke-width="0.9"/><rect x="25" y="170" width="11" height="8.5" fill="#7a797b" stroke="#e0e0e0" stroke-width="1.2"/><path d="M14.5,165 L17,162.5 L17,165 Z" fill="#e8e8e8"/><path d="M33.5,165 L36,162.5 L36,165 Z" fill="#e8e8e8"/><path d="M14.5,180 L17,177.5 L17,180 Z" fill="#e8e8e8"/><path d="M33.5,180 L36,177.5 L36,180 Z" fill="#e8e8e8"/><path d="M33.5,201 L36,198.5 L36,201 Z" fill="#e8e8e8"/><path d="M6,191 L15,196 M6,198 L15,193" stroke="#e0e0e0" stroke-width="1.1"/><circle cx="15.5" cy="191.5" r="1.8" fill="none" stroke="#e0e0e0"/><circle cx="15.5" cy="197.5" r="1.8" fill="none" stroke="#e0e0e0"/><path d="M24.5,190.5 L24.5,199 L27,196.5 L31,196 Z" fill="#ddd"/><g fill="#ddd"><rect x="28" y="190" width="2" height="1.5"/><rect x="32" y="190" width="2" height="1.5"/><rect x="35" y="190" width="1.5" height="1.5"/><rect x="35" y="194" width="1.5" height="1.5"/><rect x="32" y="198" width="2" height="1.5"/><rect x="28" y="198" width="2" height="1.5"/></g><defs><linearGradient id="tg" x1="0" x2="1"><stop offset="0" stop-color="#222"/><stop offset="1" stop-color="#eee"/></linearGradient></defs><rect x="5.5" y="206.5" width="12" height="9" fill="url(#tg)" stroke="#e0e0e0" stroke-width="1.1"/><rect x="24.5" y="206.5" width="12" height="9" fill="#555" stroke="#e0e0e0" stroke-width="1.1"/><path d="M26,211 L35,211" stroke="#ddd" stroke-width="2" stroke-dasharray="2,1"/><rect x="6.5" y="227.5" width="10" height="9" fill="#666" stroke="#e0e0e0" stroke-width="1.2"/><path d="M12,236 L16,232" stroke="#eee" stroke-width="1.2"/><path d="M25,237 L33,229" stroke="#ddd" stroke-width="1.8"/><circle cx="34" cy="228" r="2.2" fill="#ddd"/><rect x="26" y="233" width="9" height="3" fill="#bbb"/><path d="M6.5,246 L9,252.5 L15,252.5 L17.5,245 L16,244.5 L14.5,247 L14.5,241.5 L13,241.5 L12.5,246 L12,241 L10.5,241 L10.5,246 L9.5,242 L8,242.5 L9,248 Z" fill="#ddd"/><rect x="22" y="240" width="16.5" height="14.5" fill="#29282a"/><circle cx="29" cy="245.5" r="3.5" fill="#777" stroke="#ddd" stroke-width="1.2"/><path d="M31.5,248 L35.5,252" stroke="#ddd" stroke-width="1.6"/><rect x="5.5" y="263.5" width="21.5" height="21.5" fill="#3a78d6" stroke="#516f9c" stroke-width="0.8"/><rect x="14.5" y="273" width="20.5" height="20" fill="#f2f0f2"/><rect x="19.5" y="278" width="10.5" height="10" fill="#29403a"/><path d="M16,292 L34,274" stroke="#cc1f35" stroke-width="2.4"/><path d="M29,266 Q34,264 35,269 M33.5,267.5 L35,269.5 L36.5,267.5" fill="none" stroke="#ddd" stroke-width="1"/><rect x="29" y="263" width="2" height="2" fill="#ddd"/><rect x="5" y="289" width="4" height="4" fill="#111" stroke="#ddd" stroke-width="0.8"/><rect x="8" y="291" width="4" height="4" fill="#eee" stroke="#111" stroke-width="0.8"/><rect x="6.5" y="298" width="11" height="10" fill="#2a292b"/><rect x="8.5" y="300" width="7" height="6" fill="#666" stroke="#ddd" stroke-width="1.1"/><path d="M25,299.5 L32,299.5 M28.5,299.5 L28.5,307 M27,307 L30,307" fill="none" stroke="#eee" stroke-width="1.4"/><rect x="4" y="317" width="8" height="7" fill="#0a0a0a" stroke="#555" stroke-width="0.6"/><rect x="17" y="317" width="5" height="7" fill="#d8d8d8"/><rect x="27" y="315" width="10" height="10" fill="#3a1a22"/><rect x="28.5" y="316.5" width="7" height="7" fill="#eee"/><path d="M28.5,323.5 L35.5,316.5" stroke="#c21d33" stroke-width="1.6"/><rect x="3" y="331" width="16.5" height="13" fill="#2c2b2d"/><rect x="7.5" y="333.5" width="8.5" height="8" fill="#bbb" stroke="#eee" stroke-width="1"/><path d="M9,338 L11,336.5 L13,338.5 L15,337" stroke="#222" stroke-width="1"/><rect x="26.5" y="333.5" width="9" height="8" fill="#555" stroke="#ddd" stroke-width="1"/><rect x="27" y="334" width="8" height="2" fill="#ddd"/><path d="M34.5,345 L37,342.5 L37,345 Z" fill="#e8e8e8"/></svg>
<svg style="position:absolute;left:15px;top:35px;" width="17" height="17" viewBox="0 0 17 17"><circle cx="2.5" cy="2.5" r="2" fill="none" stroke="#d9d9d9" stroke-width="1"/><circle cx="2.5" cy="8.0" r="2" fill="none" stroke="#d9d9d9" stroke-width="1"/><circle cx="2.5" cy="13.5" r="2" fill="none" stroke="#d9d9d9" stroke-width="1"/><circle cx="8.0" cy="2.5" r="2" fill="none" stroke="#d9d9d9" stroke-width="1"/><circle cx="8.0" cy="8.0" r="2" fill="none" stroke="#d9d9d9" stroke-width="1"/><circle cx="8.0" cy="13.5" r="2" fill="none" stroke="#d9d9d9" stroke-width="1"/><circle cx="13.5" cy="2.5" r="2" fill="none" stroke="#d9d9d9" stroke-width="1"/><circle cx="13.5" cy="8.0" r="2" fill="none" stroke="#d9d9d9" stroke-width="1"/><circle cx="13.5" cy="13.5" r="2" fill="none" stroke="#d9d9d9" stroke-width="1"/><circle cx="2.5" cy="2.5" r="2" fill="#e0e0e0"/></svg>
<div class="t" style="left:40px;top:32.23px;font-size:8px;line-height:8px;color:#e0e0e0;font-weight:700;font-family:'Liberation Sans',sans-serif;">X:</div>
<div class="t" style="left:40px;top:48.23px;font-size:8px;line-height:8px;color:#e0e0e0;font-weight:700;font-family:'Liberation Sans',sans-serif;">Y:</div>
<div style="left:49px;top:31px;width:9px;height:10px;background:#3a383b;border-radius:2px"></div>
<svg style="position:absolute;left:49px;top:31px;" width="9" height="10" viewBox="0 0 9 10"><path d="M2.0,4.0 L4.5,1.5 L7.0,4.0 Z M2.0,6.0 L4.5,8.5 L7.0,6.0 Z" fill="#8d8c8f"/></svg>
<div style="left:49px;top:47px;width:9px;height:10px;background:#3a383b;border-radius:2px"></div>
<svg style="position:absolute;left:49px;top:47px;" width="9" height="10" viewBox="0 0 9 10"><path d="M2.0,4.0 L4.5,1.5 L7.0,4.0 Z M2.0,6.0 L4.5,8.5 L7.0,6.0 Z" fill="#8d8c8f"/></svg>
<div style="left:60px;top:31px;width:46px;height:9.5px;background:#aaa9ab;border-radius:1px;"></div>
<div class="t" style="left:62px;top:32.10px;font-size:7.5px;line-height:7.5px;color:#8d8c8f;font-weight:400;font-family:'Liberation Sans',sans-serif;">316,5 mm</div>
<div style="left:60px;top:47px;width:46px;height:9.5px;background:#aaa9ab;border-radius:1px;"></div>
<div class="t" style="left:62px;top:48.10px;font-size:7.5px;line-height:7.5px;color:#8d8c8f;font-weight:400;font-family:'Liberation Sans',sans-serif;">73 mm</div>
<div class="t" style="left:115px;top:32.23px;font-size:8px;line-height:8px;color:#e0e0e0;font-weight:700;font-family:'Liberation Sans',sans-serif;">B:</div>
<div class="t" style="left:115px;top:48.23px;font-size:8px;line-height:8px;color:#e0e0e0;font-weight:700;font-family:'Liberation Sans',sans-serif;">H:</div>
<div style="left:123px;top:31px;width:9px;height:10px;background:#3a383b;border-radius:2px"></div>
<svg style="position:absolute;left:123px;top:31px;" width="9" height="10" viewBox="0 0 9 10"><path d="M2.0,4.0 L4.5,1.5 L7.0,4.0 Z M2.0,6.0 L4.5,8.5 L7.0,6.0 Z" fill="#8d8c8f"/></svg>
<div style="left:123px;top:47px;width:9px;height:10px;background:#3a383b;border-radius:2px"></div>
<svg style="position:absolute;left:123px;top:47px;" width="9" height="10" viewBox="0 0 9 10"><path d="M2.0,4.0 L4.5,1.5 L7.0,4.0 Z M2.0,6.0 L4.5,8.5 L7.0,6.0 Z" fill="#8d8c8f"/></svg>
<div style="left:134px;top:31px;width:46px;height:9.5px;background:#aaa9ab;border-radius:1px;"></div>
<div style="left:134px;top:47px;width:46px;height:9.5px;background:#aaa9ab;border-radius:1px;"></div>
<svg style="position:absolute;left:185px;top:36px;" width="12" height="15" viewBox="0 0 12 15"><path d="M3,6 A3,3 0 0 1 9,6 M3,9 A3,3 0 0 0 9,9 M6,4 L6,11" fill="none" stroke="#dcdcdc" stroke-width="1.3"/></svg>
<div style="left:200px;top:28px;width:1px;height:30px;background:#3e3d40"></div>
<div style="left:205px;top:30px;width:11px;height:11px;border:1px solid #cfcfcf"></div>
<svg style="position:absolute;left:205px;top:30px;" width="11" height="11" viewBox="0 0 11 11"><path d="M2,5.5 L8,5.5 M6,3 L8.5,5.5 L6,8" fill="none" stroke="#e0e0e0" stroke-width="1.3"/></svg>
<div style="left:219px;top:31px;width:10px;height:10px;background:#3a383b;border-radius:2px"></div>
<svg style="position:absolute;left:219px;top:31px;" width="10" height="10" viewBox="0 0 10 10"><path d="M2.5,4.0 L5.0,1.5 L7.5,4.0 Z M2.5,6.0 L5.0,8.5 L7.5,6.0 Z" fill="#8d8c8f"/></svg>
<div style="left:231px;top:31.5px;width:33px;height:8.5px;background:#aaa9ab;border-radius:1px;"></div>
<div style="left:265px;top:31px;width:11px;height:10px;background:#444245;border-radius:1px"></div>
<svg style="position:absolute;left:265px;top:31px;" width="11" height="10" viewBox="0 0 11 10"><path d="M2.5,3.5 L8.5,3.5 L5.5,7.0 Z" fill="#6f6e71"/></svg>
<div style="left:205px;top:45px;width:11px;height:11px;border:1px solid #cfcfcf"></div>
<svg style="position:absolute;left:205px;top:45px;" width="11" height="11" viewBox="0 0 11 11"><path d="M5.5,2 L5.5,8 M3,6 L5.5,8.5 L8,6" fill="none" stroke="#e0e0e0" stroke-width="1.3"/></svg>
<div style="left:219px;top:46px;width:10px;height:10px;background:#3a383b;border-radius:2px"></div>
<svg style="position:absolute;left:219px;top:46px;" width="10" height="10" viewBox="0 0 10 10"><path d="M2.5,4.0 L5.0,1.5 L7.5,4.0 Z M2.5,6.0 L5.0,8.5 L7.5,6.0 Z" fill="#8d8c8f"/></svg>
<div style="left:231px;top:46.5px;width:33px;height:8.5px;background:#aaa9ab;border-radius:1px;"></div>
<div style="left:265px;top:46px;width:11px;height:10px;background:#444245;border-radius:1px"></div>
<svg style="position:absolute;left:265px;top:46px;" width="11" height="10" viewBox="0 0 11 10"><path d="M2.5,3.5 L8.5,3.5 L5.5,7.0 Z" fill="#6f6e71"/></svg>
<div style="left:281px;top:36px;width:13px;height:16px;background:#2a292b;border-radius:1px"></div>
<svg style="position:absolute;left:281px;top:36px;" width="13" height="16" viewBox="0 0 13 16"><path d="M4,6 A2.5,2.5 0 0 1 9,6 M4,10 A2.5,2.5 0 0 0 9,10 M6.5,4.5 L6.5,11.5" fill="none" stroke="#e8e8e8" stroke-width="1.2"/></svg>
<svg style="position:absolute;left:298px;top:31px;" width="10" height="9" viewBox="0 0 10 9"><path d="M1,8 L9,8 L6,1 Z M4,8 A3,3 0 0 0 3,5" fill="none" stroke="#d0d0d0" stroke-width="1"/></svg>
<svg style="position:absolute;left:298px;top:47px;" width="10" height="9" viewBox="0 0 10 9"><path d="M1,8 L4,1 L9,1 L6,8 Z" fill="none" stroke="#d0d0d0" stroke-width="1"/></svg>
<div style="left:311px;top:31px;width:9px;height:10px;background:#3a383b;border-radius:2px"></div>
<svg style="position:absolute;left:311px;top:31px;" width="9" height="10" viewBox="0 0 9 10"><path d="M2.0,4.0 L4.5,1.5 L7.0,4.0 Z M2.0,6.0 L4.5,8.5 L7.0,6.0 Z" fill="#8d8c8f"/></svg>
<div style="left:322px;top:32px;width:33px;height:8.5px;background:#aaa9ab;border-radius:1px;"></div>
<div style="left:357px;top:31px;width:10px;height:10px;background:#444245;border-radius:1px"></div>
<svg style="position:absolute;left:357px;top:31px;" width="10" height="10" viewBox="0 0 10 10"><path d="M2.0,3.5 L8.0,3.5 L5.0,7.0 Z" fill="#6f6e71"/></svg>
<div style="left:311px;top:46px;width:9px;height:10px;background:#3a383b;border-radius:2px"></div>
<svg style="position:absolute;left:311px;top:46px;" width="9" height="10" viewBox="0 0 9 10"><path d="M2.0,4.0 L4.5,1.5 L7.0,4.0 Z M2.0,6.0 L4.5,8.5 L7.0,6.0 Z" fill="#8d8c8f"/></svg>
<div style="left:322px;top:47px;width:33px;height:8.5px;background:#aaa9ab;border-radius:1px;"></div>
<div style="left:357px;top:46px;width:10px;height:10px;background:#444245;border-radius:1px"></div>
<svg style="position:absolute;left:357px;top:46px;" width="10" height="10" viewBox="0 0 10 10"><path d="M2.0,3.5 L8.0,3.5 L5.0,7.0 Z" fill="#6f6e71"/></svg>
<div style="left:371px;top:28px;width:1px;height:30px;background:#3e3d40"></div>
<svg style="position:absolute;left:379px;top:30px;" width="12" height="11" viewBox="0 0 12 11"><path d="M2,9 A4.5,4.5 0 1 1 10,6" fill="none" stroke="#767578" stroke-width="1.4"/><path d="M8,4 L10,6.5 L11.5,3.5" fill="none" stroke="#767578" stroke-width="1"/></svg>
<svg style="position:absolute;left:399px;top:30px;" width="12" height="11" viewBox="0 0 12 11"><path d="M2,9 A4.5,4.5 0 1 1 10,6" fill="none" stroke="#767578" stroke-width="1.4"/><path d="M8,4 L10,6.5 L11.5,3.5" fill="none" stroke="#767578" stroke-width="1"/></svg>
<svg style="position:absolute;left:379px;top:46px;" width="12" height="11" viewBox="0 0 12 11"><path d="M2,9 A4.5,4.5 0 1 1 10,6" fill="none" stroke="#767578" stroke-width="1.4"/><path d="M8,4 L10,6.5 L11.5,3.5" fill="none" stroke="#767578" stroke-width="1"/></svg>
<svg style="position:absolute;left:399px;top:46px;" width="12" height="11" viewBox="0 0 12 11"><path d="M2,9 A4.5,4.5 0 1 1 10,6" fill="none" stroke="#767578" stroke-width="1.4"/><path d="M8,4 L10,6.5 L11.5,3.5" fill="none" stroke="#767578" stroke-width="1"/></svg>
<div class="t" style="left:420px;top:36.00px;font-size:13px;line-height:13px;color:#8f8e91;font-weight:400;font-family:'Liberation Serif',serif;">P</div>
<svg style="position:absolute;left:443px;top:30px;" width="13" height="11" viewBox="0 0 13 11"><path d="M6.5,1 L6.5,10 M2,5 L11,5 M2,5 L2,9 M11,5 L11,9 M4,9 L9,9" fill="none" stroke="#c8c8c8" stroke-width="1.3"/></svg>
<svg style="position:absolute;left:462px;top:30px;" width="13" height="11" viewBox="0 0 13 11"><path d="M6.5,1 L6.5,10 M2,5 L11,5 M2,5 L2,9 M11,5 L11,9 M4,9 L9,9" fill="none" stroke="#c8c8c8" stroke-width="1.3"/></svg>
<svg style="position:absolute;left:443px;top:46px;" width="13" height="11" viewBox="0 0 13 11"><path d="M6.5,1 L6.5,10 M2,5 L11,5 M2,5 L2,9 M11,5 L11,9 M4,9 L9,9" fill="none" stroke="#c8c8c8" stroke-width="1.3"/></svg>
<svg style="position:absolute;left:462px;top:46px;" width="13" height="11" viewBox="0 0 13 11"><path d="M6.5,1 L6.5,10 M2,5 L11,5 M2,5 L2,9 M11,5 L11,9 M4,9 L9,9" fill="none" stroke="#c8c8c8" stroke-width="1.3"/></svg>
<div style="left:480px;top:28px;width:1px;height:30px;background:#3e3d40"></div>
<div style="left:485px;top:29px;width:12px;height:13px;background:#3b78d8;border:1px solid #9fb5d5"></div>
<div style="left:485px;top:46px;width:12px;height:11px;background:#f4f4f4"></div>
<svg style="position:absolute;left:485px;top:46px;" width="12" height="11" viewBox="0 0 12 11"><rect x="3" y="3" width="6" height="5" fill="#1f3d36"/><path d="M1,10 L11,1" stroke="#d0202a" stroke-width="1.8"/></svg>
<div style="left:500px;top:31px;width:9px;height:9px;background:#3e3c3f;border-radius:1px"></div>
<svg style="position:absolute;left:500px;top:31px;" width="9" height="9" viewBox="0 0 9 9"><path d="M3,1.5 L7,4.5 L3,7.5 Z" fill="#d6d6d6"/></svg>
<div style="left:500px;top:47px;width:9px;height:9px;background:#3e3c3f;border-radius:1px"></div>
<svg style="position:absolute;left:500px;top:47px;" width="9" height="9" viewBox="0 0 9 9"><path d="M3,1.5 L7,4.5 L3,7.5 Z" fill="#d6d6d6"/></svg>
<div style="left:514px;top:28px;width:1px;height:30px;background:#3e3d40"></div>
<div style="left:519px;top:31px;width:8px;height:10px;background:#3a383b;border-radius:2px"></div>
<svg style="position:absolute;left:519px;top:31px;" width="8" height="10" viewBox="0 0 8 10"><path d="M1.5,4.0 L4.0,1.5 L6.5,4.0 Z M1.5,6.0 L4.0,8.5 L6.5,6.0 Z" fill="#d8d8d8"/></svg>
<div style="left:530px;top:32px;width:34px;height:8.5px;background:#aaa9ab;border-radius:1px;"></div>
<div class="t" style="left:532px;top:32.60px;font-size:7.5px;line-height:7.5px;color:#111;font-weight:400;font-family:'Liberation Sans',sans-serif;">0 Pt</div>
<div style="left:565px;top:31px;width:11px;height:10px;background:#3e3c3f;border-radius:1px"></div>
<svg style="position:absolute;left:565px;top:31px;" width="11" height="10" viewBox="0 0 11 10"><path d="M2.5,3.5 L8.5,3.5 L5.5,7.0 Z" fill="#cfcfd0"/></svg>
<div style="left:518px;top:47px;width:46px;height:9px;background:#aaa9ab"></div>
<div style="left:520px;top:48.5px;width:38px;height:6px;background:#0a0a0a"></div>
<div style="left:565px;top:47px;width:11px;height:10px;background:#3e3c3f;border-radius:1px"></div>
<svg style="position:absolute;left:565px;top:47px;" width="11" height="10" viewBox="0 0 11 10"><path d="M2.5,3.5 L8.5,3.5 L5.5,7.0 Z" fill="#cfcfd0"/></svg>
<div style="left:582px;top:28px;width:1px;height:30px;background:#3e3d40"></div>
<svg style="position:absolute;left:589px;top:30px;" width="10" height="10" viewBox="0 0 10 10"><rect x="1" y="1" width="7" height="7" fill="none" stroke="#d8d8d8" stroke-width="1.2" stroke-dasharray="2,1"/><rect x="3" y="3" width="3" height="3" fill="#d8d8d8"/></svg>
<svg style="position:absolute;left:608px;top:30px;" width="10" height="10" viewBox="0 0 10 10"><rect x="1" y="1" width="8" height="8" fill="#666" stroke="#c8c8c8" stroke-width="1.2"/></svg>
<div class="t" style="left:627px;top:30.54px;font-size:10px;line-height:10px;color:#cfcfcf;font-weight:700;font-family:'Liberation Serif',serif;"><i>fx</i></div>
<svg style="position:absolute;left:586px;top:47px;" width="10" height="10" viewBox="0 0 10 10"><rect x="0.5" y="0.5" width="9" height="9" fill="none" stroke="#d8d8d8" stroke-width="1" stroke-dasharray="1.5,1"/><circle cx="5" cy="5" r="1.5" fill="#d8d8d8"/></svg>
<div style="left:601px;top:47px;width:25px;height:9px;background:#aaa9ab;border-radius:1px;"></div>
<div class="t" style="left:603px;top:48.09px;font-size:7px;line-height:7px;color:#111;font-weight:400;font-family:'Liberation Sans',sans-serif;">100 %</div>
<div style="left:628px;top:47px;width:10px;height:9px;background:#3e3c3f"></div>
<svg style="position:absolute;left:628px;top:47px;" width="10" height="9" viewBox="0 0 10 9"><path d="M3,1.5 L7,4.5 L3,7.5 Z" fill="#c8c8c8"/></svg>
<div style="left:643px;top:28px;width:1px;height:30px;background:#3e3d40"></div>
<div style="left:647px;top:28px;width:16px;height:15px;background:#2f2d30;border-radius:1px"></div>
<svg style="position:absolute;left:649px;top:30px;" width="12" height="11" viewBox="0 0 12 11"><rect x="0.5" y="0.5" width="11" height="10" fill="none" stroke="#d0d0d0"/><path d="M2,3 L10,3 M2,5.5 L10,5.5 M2,8 L10,8" stroke="#d0d0d0"/></svg>
<svg style="position:absolute;left:669px;top:30px;" width="12" height="11" viewBox="0 0 12 11"><rect x="0.5" y="0.5" width="11" height="10" fill="none" stroke="#b8b8b8"/><rect x="3.5" y="3" width="5" height="5" fill="none" stroke="#b8b8b8"/></svg>
<svg style="position:absolute;left:650px;top:47px;" width="11" height="11" viewBox="0 0 11 11"><circle cx="5.5" cy="5.5" r="4.5" fill="#bbb" stroke="#e0e0e0"/><circle cx="5.5" cy="5.5" r="2" fill="#666"/></svg>
<svg style="position:absolute;left:669px;top:47px;" width="12" height="10" viewBox="0 0 12 10"><rect x="0.5" y="0.5" width="11" height="9" fill="#555" stroke="#a0a0a0"/><rect x="4" y="3" width="4" height="4" fill="#ccc"/></svg>
<div style="left:684px;top:28px;width:1px;height:30px;background:#3e3d40"></div>
<div style="left:688px;top:28px;width:16px;height:16px;background:#37474f;border-radius:1px"></div>
<svg style="position:absolute;left:688px;top:28px;" width="16" height="16" viewBox="0 0 16 16"><rect x="4" y="4" width="8" height="8" fill="none" stroke="#c8d0d4" stroke-width="1.2"/><path d="M1.5,1.5 L4,4 M14.5,1.5 L12,4 M1.5,14.5 L4,12 M14.5,14.5 L12,12" stroke="#c8d0d4" stroke-width="1.2"/></svg>
<div style="left:707px;top:31px;width:9px;height:10px;background:#3a383b;border-radius:2px"></div>
<svg style="position:absolute;left:707px;top:31px;" width="9" height="10" viewBox="0 0 9 10"><path d="M2.0,4.0 L4.5,1.5 L7.0,4.0 Z M2.0,6.0 L4.5,8.5 L7.0,6.0 Z" fill="#d8d8d8"/></svg>
<div style="left:717px;top:31px;width:35px;height:9.5px;background:#aaa9ab;border-radius:1px;"></div>
<div class="t" style="left:719px;top:32.25px;font-size:7.2px;line-height:7.2px;color:#222;font-weight:400;font-family:'Liberation Sans',sans-serif;">4,233 mm</div>
<div style="left:706px;top:47px;width:17px;height:9px;background:#aaa9ab"></div>
<svg style="position:absolute;left:707px;top:48px;" width="14" height="7" viewBox="0 0 14 7"><path d="M1,2 L10,2 L10,6" fill="none" stroke="#222" stroke-width="1.5"/></svg>
<div style="left:723px;top:47px;width:12px;height:9px;background:#3e3c3f;border-radius:1px"></div>
<svg style="position:absolute;left:723px;top:47px;" width="12" height="9" viewBox="0 0 12 9"><path d="M3.0,3.0 L9.0,3.0 L6.0,6.5 Z" fill="#cfcfd0"/></svg>
<div style="left:757px;top:28px;width:1px;height:30px;background:#3e3d40"></div>
<svg style="position:absolute;left:764px;top:30px;" width="11" height="10" viewBox="0 0 11 10"><rect x="1" y="1" width="8" height="7" fill="none" stroke="#e0e0e0" stroke-width="1.2"/><path d="M3,3 L7,6 M7,3 L3,6" stroke="#e0e0e0"/></svg>
<div style="left:781px;top:30.5px;width:85px;height:9.5px;background:#aaa9ab;border-radius:1px;"></div>
<div class="t" style="left:783px;top:31.65px;font-size:7.4px;line-height:7.4px;color:#1c1c1c;font-weight:400;font-family:'Liberation Sans',sans-serif;">[Einfacher Grafikrahme...</div>
<div style="left:867px;top:30.5px;width:11px;height:10px;background:#3e3c3f;border-radius:1px"></div>
<svg style="position:absolute;left:867px;top:30.5px;" width="11" height="10" viewBox="0 0 11 10"><path d="M2.5,3.5 L8.5,3.5 L5.5,7.0 Z" fill="#cfcfd0"/></svg>
<svg style="position:absolute;left:843px;top:46px;" width="14" height="10" viewBox="0 0 14 10"><circle cx="5" cy="5" r="3.8" fill="none" stroke="#999" stroke-width="1.3"/><path d="M10,3 L13,5 L10,7" fill="none" stroke="#999"/></svg>
<svg style="position:absolute;left:863px;top:46px;" width="16" height="10" viewBox="0 0 16 10"><rect x="1" y="1" width="7" height="8" fill="#ddd" stroke="#fff"/><path d="M3,3 L6,7 M6,3 L3,7" stroke="#333"/><path d="M10,8 L14,2" stroke="#aaa" stroke-width="2"/></svg>
<div style="left:880px;top:28px;width:1px;height:30px;background:#3e3d40"></div>
<svg style="position:absolute;left:1883px;top:35px;" width="12" height="13" viewBox="0 0 12 13"><path d="M7,0.5 L3,6.5 L7,6.5 L4,12.5" fill="none" stroke="#e0e0e0" stroke-width="1.4"/></svg>
<svg style="position:absolute;left:1902px;top:41px;" width="4" height="3" viewBox="0 0 4 3"><path d="M0,0 L4,0 L2.0,3 Z" fill="#d0d0d0"/></svg>
<svg style="position:absolute;left:1907px;top:38px;" width="9" height="8" viewBox="0 0 9 8"><path d="M0,1 L9,1 M0,4 L9,4 M0,7 L9,7" stroke="#9a999c" stroke-width="1.2"/></svg>
<div style="left:1445px;top:60px;width:472px;height:939px;background:#1f1e21"></div>
<div style="left:1445px;top:60px;width:472px;height:10px;background:#302e31"></div>
<svg style="position:absolute;left:1593px;top:63px;" width="8" height="5" viewBox="0 0 8 5"><path d="M0,0 L3,2.5 L0,5 Z M4,0 L7,2.5 L4,5 Z" fill="#b8b8b8"/></svg>
<svg style="position:absolute;left:1750px;top:63px;" width="8" height="5" viewBox="0 0 8 5"><path d="M0,0 L3,2.5 L0,5 Z M4,0 L7,2.5 L4,5 Z" fill="#b8b8b8"/></svg>
<svg style="position:absolute;left:1906px;top:63px;" width="8" height="5" viewBox="0 0 8 5"><path d="M0,0 L3,2.5 L0,5 Z M4,0 L7,2.5 L4,5 Z" fill="#b8b8b8"/></svg>
<div style="left:1447px;top:70px;width:156px;height:929px;background:#4a484b"></div>
<div style="left:1447px;top:70px;width:156px;height:12px;background:#353336"></div>
<div style="left:1447px;top:70px;width:73px;height:12px;background:#4a484b"></div>
<svg style="position:absolute;left:1450px;top:72.5px;" width="5" height="8" viewBox="0 0 5 8"><path d="M0.5,3 L2.5,1 L4.5,3 M0.5,5 L2.5,7 L4.5,5" fill="none" stroke="#cfcfcf" stroke-width="0.9"/></svg>
<div class="t" style="left:1457px;top:72.89px;font-size:8.4px;line-height:8.4px;color:#f2f2f2;font-weight:700;font-family:'Liberation Sans',sans-serif;">Absatzformate</div>
<svg style="position:absolute;left:1588px;top:75px;" width="4" height="2.5" viewBox="0 0 4 2.5"><path d="M0,0 L4,0 L2.0,2.5 Z" fill="#d0d0d0"/></svg>
<svg style="position:absolute;left:1593px;top:72.5px;" width="8" height="8" viewBox="0 0 8 8"><path d="M0,1 L8,1 M0,4 L8,4 M0,7 L8,7" stroke="#6e6d70" stroke-width="1"/></svg>
<div class="t" style="left:1448px;top:88.41px;font-size:7.2px;line-height:7.2px;color:#e4e4e4;font-weight:400;font-family:'Liberation Sans',sans-serif;">Kapitelnummer</div>
<svg style="position:absolute;left:1592px;top:86px;" width="8" height="11" viewBox="0 0 8 11"><path d="M5.5,0.5 L1.5,5.5 L5,5.5 L2.5,10.5 M6.5,2 L6.5,2" fill="none" stroke="#c8c8c8" stroke-width="1.3"/></svg>
<div style="left:1447px;top:99px;width:156px;height:1px;background:#3a383b"></div>
<div style="left:1447px;top:100px;width:146px;height:374px;background:#474548"></div>
<div class="t" style="left:1471px;top:105.41px;font-size:7.2px;line-height:7.2px;color:#e2e2e2;font-weight:400;font-family:'Liberation Sans',sans-serif;">[Einf. Abs.]</div>
<div style="left:1447px;top:114px;width:146px;height:1px;background:#3d3b3e"></div>
<div class="t" style="left:1471px;top:120.41px;font-size:7.2px;line-height:7.2px;color:#e2e2e2;font-weight:400;font-family:'Liberation Sans',sans-serif;">Kolumnentitel</div>
<div style="left:1447px;top:129px;width:146px;height:1px;background:#3d3b3e"></div>
<div class="t" style="left:1471px;top:135.41px;font-size:7.2px;line-height:7.2px;color:#e2e2e2;font-weight:400;font-family:'Liberation Sans',sans-serif;">Autor</div>
<div style="left:1447px;top:144px;width:146px;height:1px;background:#3d3b3e"></div>
<div class="t" style="left:1471px;top:150.41px;font-size:7.2px;line-height:7.2px;color:#e2e2e2;font-weight:400;font-family:'Liberation Sans',sans-serif;">Buchtitel</div>
<div style="left:1447px;top:159px;width:146px;height:1px;background:#3d3b3e"></div>
<div style="left:1447px;top:160px;width:146px;height:15px;background:#4a5a77"></div>
<div class="t" style="left:1471px;top:165.41px;font-size:7.2px;line-height:7.2px;color:#ffffff;font-weight:700;font-family:'Liberation Sans',sans-serif;">Kapitelnummer</div>
<div style="left:1447px;top:174px;width:146px;height:1px;background:#3d3b3e"></div>
<div class="t" style="left:1471px;top:180.41px;font-size:7.2px;line-height:7.2px;color:#e2e2e2;font-weight:400;font-family:'Liberation Sans',sans-serif;">Kapitelname</div>
<div style="left:1447px;top:189px;width:146px;height:1px;background:#3d3b3e"></div>
<div class="t" style="left:1471px;top:195.41px;font-size:7.2px;line-height:7.2px;color:#e2e2e2;font-weight:400;font-family:'Liberation Sans',sans-serif;">&#220;berschrift</div>
<div style="left:1447px;top:204px;width:146px;height:1px;background:#3d3b3e"></div>
<div class="t" style="left:1471px;top:210.41px;font-size:7.2px;line-height:7.2px;color:#e2e2e2;font-weight:400;font-family:'Liberation Sans',sans-serif;">Basis</div>
<div style="left:1447px;top:219px;width:146px;height:1px;background:#3d3b3e"></div>
<div class="t" style="left:1471px;top:225.41px;font-size:7.2px;line-height:7.2px;color:#e2e2e2;font-weight:400;font-family:'Liberation Sans',sans-serif;">Basis-Flie&#223;text-erster-Absatz</div>
<div style="left:1447px;top:234px;width:146px;height:1px;background:#3d3b3e"></div>
<div class="t" style="left:1471px;top:240.41px;font-size:7.2px;line-height:7.2px;color:#e2e2e2;font-weight:400;font-family:'Liberation Sans',sans-serif;">Basis-Flie&#223;text</div>
<div style="left:1447px;top:249px;width:146px;height:1px;background:#3d3b3e"></div>
<div class="t" style="left:1471px;top:255.41px;font-size:7.2px;line-height:7.2px;color:#e2e2e2;font-weight:400;font-family:'Liberation Sans',sans-serif;">Seitenzahl</div>
<div style="left:1447px;top:264px;width:146px;height:1px;background:#3d3b3e"></div>
<div style="left:1593px;top:100px;width:10px;height:374px;background:#323033"></div>
<div style="left:1593px;top:100px;width:1.5px;height:374px;background:#242226"></div>
<svg style="position:absolute;left:1594px;top:103px;" width="8" height="5" viewBox="0 0 8 5"><path d="M1,4.5 L4,1 L7,4.5 Z" fill="#c8c8c8"/></svg>
<svg style="position:absolute;left:1594px;top:466px;" width="8" height="5" viewBox="0 0 8 5"><path d="M1,0.5 L4,4 L7,0.5 Z" fill="#c8c8c8"/></svg>
<div style="left:1447px;top:474px;width:156px;height:14px;background:#4a484b"></div>
<div style="left:1447px;top:474px;width:156px;height:1px;background:#3a383b"></div>
<svg style="position:absolute;left:1452px;top:477px;" width="12" height="9" viewBox="0 0 12 9"><path d="M2.5,8 A2.3,2.3 0 0 1 2.5,3.6 A3.2,3.2 0 0 1 8.5,3 A2.5,2.5 0 0 1 9.5,8 Z" fill="none" stroke="#e0e0e0" stroke-width="1.2"/><path d="M4.5,5.8 L7.5,5.8 M6.3,4.6 L7.6,5.8 L6.3,7" fill="none" stroke="#e0e0e0" stroke-width="0.9"/></svg>
<svg style="position:absolute;left:1505px;top:477px;" width="11" height="9" viewBox="0 0 11 9"><path d="M0.5,1 L4,1 L5,2.5 L10.5,2.5 L10.5,8.5 L0.5,8.5 Z" fill="#cfcfcf"/></svg>
<div class="t" style="left:1527px;top:477.38px;font-size:9px;line-height:9px;color:#8d8c8f;font-weight:400;font-family:'Liberation Sans',sans-serif;">&#182;</div>
<svg style="position:absolute;left:1537px;top:481px;" width="4" height="2.5" viewBox="0 0 4 2.5"><path d="M0,0 L4,0 L2.0,2.5 Z" fill="#8d8c8f"/></svg>
<svg style="position:absolute;left:1590px;top:477px;" width="10" height="10" viewBox="0 0 10 10"><path d="M1,9 L9,1 M5,9 L9,5" stroke="#6a696c" stroke-width="1"/></svg>
<svg style="position:absolute;left:1551px;top:476px;" width="10" height="10" viewBox="0 0 10 10"><path d="M1,1 L9,1 L9,9 L4,9 L1,6 Z" fill="#d4d4d4"/><path d="M1,6 L4,6 L4,9" fill="#777"/></svg>
<svg style="position:absolute;left:1573px;top:476px;" width="10" height="10" viewBox="0 0 10 10"><path d="M0.5,2.5 L9.5,2.5 M3.5,1 L6.5,1" stroke="#cfcfcf" stroke-width="1.2"/><path d="M1.5,3.5 L8.5,3.5 L8,9.5 L2,9.5 Z" fill="#bdbdbd"/><path d="M3.5,4.5 L3.5,8.5 M5,4.5 L5,8.5 M6.5,4.5 L6.5,8.5" stroke="#555" stroke-width="0.6"/></svg>
<div style="left:1447px;top:488px;width:156px;height:2px;background:#1f1e21"></div>
<div style="left:1447px;top:490px;width:156px;height:12px;background:#353336"></div>
<div style="left:1447px;top:490px;width:76px;height:12px;background:#4a484b"></div>
<svg style="position:absolute;left:1450px;top:492.5px;" width="5" height="8" viewBox="0 0 5 8"><path d="M0.5,3 L2.5,1 L4.5,3 M0.5,5 L2.5,7 L4.5,5" fill="none" stroke="#cfcfcf" stroke-width="0.9"/></svg>
<div class="t" style="left:1457px;top:492.89px;font-size:8.4px;line-height:8.4px;color:#f2f2f2;font-weight:700;font-family:'Liberation Sans',sans-serif;">Zeichenformate</div>
<svg style="position:absolute;left:1588px;top:495px;" width="4" height="2.5" viewBox="0 0 4 2.5"><path d="M0,0 L4,0 L2.0,2.5 Z" fill="#d0d0d0"/></svg>
<svg style="position:absolute;left:1593px;top:492.5px;" width="8" height="8" viewBox="0 0 8 8"><path d="M0,1 L8,1 M0,4 L8,4 M0,7 L8,7" stroke="#6e6d70" stroke-width="1"/></svg>
<div class="t" style="left:1448px;top:507.91px;font-size:7.2px;line-height:7.2px;color:#e4e4e4;font-weight:400;font-family:'Liberation Sans',sans-serif;">Bold-Versalien</div>
<svg style="position:absolute;left:1592px;top:505px;" width="8" height="11" viewBox="0 0 8 11"><path d="M5.5,0.5 L1.5,5.5 L5,5.5 L2.5,10.5 M6.5,2 L6.5,2" fill="none" stroke="#c8c8c8" stroke-width="1.3"/></svg>
<div style="left:1447px;top:518px;width:156px;height:1px;background:#3a383b"></div>
<div style="left:1447px;top:519px;width:146px;height:375px;background:#474548"></div>
<div class="t" style="left:1471px;top:524.91px;font-size:7.2px;line-height:7.2px;color:#e2e2e2;font-weight:400;font-family:'Liberation Sans',sans-serif;">[Ohne]</div>
<svg style="position:absolute;left:1580px;top:522px;" width="11" height="10" viewBox="0 0 11 10"><path d="M1,1 L10,9 M10,1 L1,9" stroke="#e8e8e8" stroke-width="1.2"/><path d="M7,1 L10,1 L10,3" stroke="#e8e8e8" fill="none"/></svg>
<div style="left:1447px;top:534px;width:146px;height:1px;background:#3d3b3e"></div>
<div style="left:1447px;top:535px;width:146px;height:15px;background:#4a5a77"></div>
<div class="t" style="left:1471px;top:539.91px;font-size:7.2px;line-height:7.2px;color:#ffffff;font-weight:700;font-family:'Liberation Sans',sans-serif;">Bold-Versalien</div>
<div style="left:1593px;top:519px;width:10px;height:375px;background:#323033"></div>
<div style="left:1593px;top:519px;width:1.5px;height:375px;background:#242226"></div>
<svg style="position:absolute;left:1594px;top:522px;" width="8" height="5" viewBox="0 0 8 5"><path d="M1,4.5 L4,1 L7,4.5 Z" fill="#c8c8c8"/></svg>
<svg style="position:absolute;left:1594px;top:886px;" width="8" height="5" viewBox="0 0 8 5"><path d="M1,0.5 L4,4 L7,0.5 Z" fill="#c8c8c8"/></svg>
<div style="left:1447px;top:894px;width:156px;height:13px;background:#4a484b"></div>
<div style="left:1447px;top:894px;width:156px;height:1px;background:#3a383b"></div>
<svg style="position:absolute;left:1452px;top:896px;" width="12" height="9" viewBox="0 0 12 9"><path d="M2.5,8 A2.3,2.3 0 0 1 2.5,3.6 A3.2,3.2 0 0 1 8.5,3 A2.5,2.5 0 0 1 9.5,8 Z" fill="none" stroke="#e0e0e0" stroke-width="1.2"/><path d="M4.5,5.8 L7.5,5.8 M6.3,4.6 L7.6,5.8 L6.3,7" fill="none" stroke="#e0e0e0" stroke-width="0.9"/></svg>
<svg style="position:absolute;left:1527px;top:896px;" width="11" height="9" viewBox="0 0 11 9"><path d="M0.5,1 L4,1 L5,2.5 L10.5,2.5 L10.5,8.5 L0.5,8.5 Z" fill="#cfcfcf"/></svg>
<svg style="position:absolute;left:1551px;top:895px;" width="10" height="10" viewBox="0 0 10 10"><path d="M1,1 L9,1 L9,9 L4,9 L1,6 Z" fill="#d4d4d4"/><path d="M1,6 L4,6 L4,9" fill="#777"/></svg>
<svg style="position:absolute;left:1573px;top:895px;" width="10" height="10" viewBox="0 0 10 10"><path d="M0.5,2.5 L9.5,2.5 M3.5,1 L6.5,1" stroke="#cfcfcf" stroke-width="1.2"/><path d="M1.5,3.5 L8.5,3.5 L8,9.5 L2,9.5 Z" fill="#bdbdbd"/><path d="M3.5,4.5 L3.5,8.5 M5,4.5 L5,8.5 M6.5,4.5 L6.5,8.5" stroke="#555" stroke-width="0.6"/></svg>
<div style="left:1447px;top:907px;width:156px;height:2px;background:#1f1e21"></div>
<div style="left:1447px;top:909px;width:156px;height:12px;background:#353336"></div>
<div style="left:1447px;top:909px;width:40px;height:12px;background:#4a484b"></div>
<svg style="position:absolute;left:1450px;top:911.5px;" width="5" height="8" viewBox="0 0 5 8"><path d="M0.5,3 L2.5,1 L4.5,3 M0.5,5 L2.5,7 L4.5,5" fill="none" stroke="#cfcfcf" stroke-width="0.9"/></svg>
<div class="t" style="left:1457px;top:911.89px;font-size:8.4px;line-height:8.4px;color:#f2f2f2;font-weight:700;font-family:'Liberation Sans',sans-serif;">Absatz</div>
<svg style="position:absolute;left:1588px;top:914px;" width="4" height="2.5" viewBox="0 0 4 2.5"><path d="M0,0 L4,0 L2.0,2.5 Z" fill="#d0d0d0"/></svg>
<svg style="position:absolute;left:1593px;top:911.5px;" width="8" height="8" viewBox="0 0 8 8"><path d="M0,1 L8,1 M0,4 L8,4 M0,7 L8,7" stroke="#6e6d70" stroke-width="1"/></svg>
<div style="left:1450px;top:925px;width:13px;height:15px;background:#2a292b"></div>
<svg style="position:absolute;left:1451px;top:927px;" width="11" height="13" viewBox="0 0 11 13"><rect x="0" y="1.0" width="11" height="1.2" fill="#a8a7aa"/><rect x="0" y="3.6" width="8" height="1.2" fill="#a8a7aa"/><rect x="0" y="6.2" width="11" height="1.2" fill="#a8a7aa"/><rect x="0" y="8.8" width="8" height="1.2" fill="#a8a7aa"/><rect x="0" y="11.4" width="11" height="1.2" fill="#a8a7aa"/></svg>
<svg style="position:absolute;left:1466px;top:927px;" width="11" height="13" viewBox="0 0 11 13"><rect x="0" y="1.0" width="11" height="1.2" fill="#a8a7aa"/><rect x="0" y="3.6" width="8" height="1.2" fill="#a8a7aa"/><rect x="0" y="6.2" width="11" height="1.2" fill="#a8a7aa"/><rect x="0" y="8.8" width="8" height="1.2" fill="#a8a7aa"/><rect x="0" y="11.4" width="11" height="1.2" fill="#a8a7aa"/></svg>
<svg style="position:absolute;left:1481px;top:927px;" width="11" height="13" viewBox="0 0 11 13"><rect x="0" y="1.0" width="11" height="1.2" fill="#a8a7aa"/><rect x="0" y="3.6" width="8" height="1.2" fill="#a8a7aa"/><rect x="0" y="6.2" width="11" height="1.2" fill="#a8a7aa"/><rect x="0" y="8.8" width="8" height="1.2" fill="#a8a7aa"/><rect x="0" y="11.4" width="11" height="1.2" fill="#a8a7aa"/></svg>
<svg style="position:absolute;left:1503px;top:927px;" width="11" height="13" viewBox="0 0 11 13"><rect x="0" y="1.0" width="11" height="1.2" fill="#a8a7aa"/><rect x="0" y="3.6" width="8" height="1.2" fill="#a8a7aa"/><rect x="0" y="6.2" width="11" height="1.2" fill="#a8a7aa"/><rect x="0" y="8.8" width="8" height="1.2" fill="#a8a7aa"/><rect x="0" y="11.4" width="11" height="1.2" fill="#a8a7aa"/></svg>
<svg style="position:absolute;left:1518px;top:927px;" width="11" height="13" viewBox="0 0 11 13"><rect x="0" y="1.0" width="11" height="1.2" fill="#a8a7aa"/><rect x="0" y="3.6" width="8" height="1.2" fill="#a8a7aa"/><rect x="0" y="6.2" width="11" height="1.2" fill="#a8a7aa"/><rect x="0" y="8.8" width="8" height="1.2" fill="#a8a7aa"/><rect x="0" y="11.4" width="11" height="1.2" fill="#a8a7aa"/></svg>
<svg style="position:absolute;left:1533px;top:927px;" width="11" height="13" viewBox="0 0 11 13"><rect x="0" y="1.0" width="11" height="1.2" fill="#a8a7aa"/><rect x="0" y="3.6" width="8" height="1.2" fill="#a8a7aa"/><rect x="0" y="6.2" width="11" height="1.2" fill="#a8a7aa"/><rect x="0" y="8.8" width="8" height="1.2" fill="#a8a7aa"/><rect x="0" y="11.4" width="11" height="1.2" fill="#a8a7aa"/></svg>
<svg style="position:absolute;left:1548px;top:927px;" width="11" height="13" viewBox="0 0 11 13"><rect x="0" y="1.0" width="11" height="1.2" fill="#a8a7aa"/><rect x="0" y="3.6" width="8" height="1.2" fill="#a8a7aa"/><rect x="0" y="6.2" width="11" height="1.2" fill="#a8a7aa"/><rect x="0" y="8.8" width="8" height="1.2" fill="#a8a7aa"/><rect x="0" y="11.4" width="11" height="1.2" fill="#a8a7aa"/></svg>
<svg style="position:absolute;left:1570px;top:927px;" width="11" height="13" viewBox="0 0 11 13"><rect x="0" y="1.0" width="11" height="1.2" fill="#a8a7aa"/><rect x="0" y="3.6" width="8" height="1.2" fill="#a8a7aa"/><rect x="0" y="6.2" width="11" height="1.2" fill="#a8a7aa"/><rect x="0" y="8.8" width="8" height="1.2" fill="#a8a7aa"/><rect x="0" y="11.4" width="11" height="1.2" fill="#a8a7aa"/></svg>
<svg style="position:absolute;left:1585px;top:927px;" width="11" height="13" viewBox="0 0 11 13"><rect x="0" y="1.0" width="11" height="1.2" fill="#a8a7aa"/><rect x="0" y="3.6" width="8" height="1.2" fill="#a8a7aa"/><rect x="0" y="6.2" width="11" height="1.2" fill="#a8a7aa"/><rect x="0" y="8.8" width="8" height="1.2" fill="#a8a7aa"/><rect x="0" y="11.4" width="11" height="1.2" fill="#a8a7aa"/></svg>
<div style="left:1447px;top:943px;width:156px;height:1px;background:#3e3c3f"></div>
<svg style="position:absolute;left:1453px;top:949px;" width="22" height="11" viewBox="0 0 22 11"><path d="M1,5 L5,5 M3,3 L5,5 L3,7" fill="none" stroke="#cfcfcf" stroke-width="0.8"/><rect x="7" y="1" width="1" height="9" fill="#bbb"/><rect x="10" y="2" width="8" height="1.5" fill="#999"/><rect x="10" y="5" width="8" height="1.5" fill="#999"/><rect x="10" y="8" width="8" height="1.5" fill="#999"/></svg>
<div style="left:1468px;top:949px;width:9px;height:11px;background:#3a383b;border-radius:2px"></div>
<svg style="position:absolute;left:1468px;top:949px;" width="9" height="11" viewBox="0 0 9 11"><path d="M2.0,4.5 L4.5,2.0 L7.0,4.5 Z M2.0,6.5 L4.5,9.0 L7.0,6.5 Z" fill="#d8d8d8"/></svg>
<div style="left:1479px;top:949.5px;width:42px;height:10px;background:#aaa9ab;border-radius:1px;"></div>
<div class="t" style="left:1481px;top:951.00px;font-size:7.2px;line-height:7.2px;color:#1c1c1c;font-weight:400;font-family:'Liberation Sans',sans-serif;">0 mm</div>
<svg style="position:absolute;left:1530px;top:949px;" width="22" height="11" viewBox="0 0 22 11"><rect x="2" y="2" width="8" height="1.5" fill="#999"/><rect x="2" y="5" width="8" height="1.5" fill="#999"/><rect x="2" y="8" width="8" height="1.5" fill="#999"/><rect x="12" y="1" width="1" height="9" fill="#bbb"/><path d="M15,5 L20,5 M18,3 L20,5 L18,7" fill="none" stroke="#cfcfcf" stroke-width="0.8"/></svg>
<div style="left:1545px;top:949px;width:9px;height:11px;background:#3a383b;border-radius:2px"></div>
<svg style="position:absolute;left:1545px;top:949px;" width="9" height="11" viewBox="0 0 9 11"><path d="M2.0,4.5 L4.5,2.0 L7.0,4.5 Z M2.0,6.5 L4.5,9.0 L7.0,6.5 Z" fill="#d8d8d8"/></svg>
<div style="left:1556px;top:949.5px;width:42px;height:10px;background:#aaa9ab;border-radius:1px;"></div>
<div class="t" style="left:1558px;top:951.00px;font-size:7.2px;line-height:7.2px;color:#1c1c1c;font-weight:400;font-family:'Liberation Sans',sans-serif;">0 mm</div>
<svg style="position:absolute;left:1453px;top:965px;" width="22" height="11" viewBox="0 0 22 11"><path d="M1,5 L5,5 M3,3 L5,5 L3,7" fill="none" stroke="#cfcfcf" stroke-width="0.8"/><rect x="7" y="1" width="1" height="9" fill="#bbb"/><rect x="10" y="2" width="8" height="1.5" fill="#999"/><rect x="10" y="5" width="8" height="1.5" fill="#999"/><rect x="10" y="8" width="8" height="1.5" fill="#999"/></svg>
<div style="left:1468px;top:965px;width:9px;height:11px;background:#3a383b;border-radius:2px"></div>
<svg style="position:absolute;left:1468px;top:965px;" width="9" height="11" viewBox="0 0 9 11"><path d="M2.0,4.5 L4.5,2.0 L7.0,4.5 Z M2.0,6.5 L4.5,9.0 L7.0,6.5 Z" fill="#d8d8d8"/></svg>
<div style="left:1479px;top:965.5px;width:42px;height:10px;background:#aaa9ab;border-radius:1px;"></div>
<div class="t" style="left:1481px;top:967.00px;font-size:7.2px;line-height:7.2px;color:#1c1c1c;font-weight:400;font-family:'Liberation Sans',sans-serif;">0 mm</div>
<svg style="position:absolute;left:1530px;top:965px;" width="22" height="11" viewBox="0 0 22 11"><rect x="2" y="2" width="8" height="1.5" fill="#999"/><rect x="2" y="5" width="8" height="1.5" fill="#999"/><rect x="2" y="8" width="8" height="1.5" fill="#999"/><rect x="12" y="1" width="1" height="9" fill="#bbb"/><path d="M15,5 L20,5 M18,3 L20,5 L18,7" fill="none" stroke="#cfcfcf" stroke-width="0.8"/></svg>
<div style="left:1545px;top:965px;width:9px;height:11px;background:#3a383b;border-radius:2px"></div>
<svg style="position:absolute;left:1545px;top:965px;" width="9" height="11" viewBox="0 0 9 11"><path d="M2.0,4.5 L4.5,2.0 L7.0,4.5 Z M2.0,6.5 L4.5,9.0 L7.0,6.5 Z" fill="#d8d8d8"/></svg>
<div style="left:1556px;top:965.5px;width:42px;height:10px;background:#aaa9ab;border-radius:1px;"></div>
<div class="t" style="left:1558px;top:967.00px;font-size:7.2px;line-height:7.2px;color:#1c1c1c;font-weight:400;font-family:'Liberation Sans',sans-serif;">0 mm</div>
<svg style="position:absolute;left:1453px;top:985px;" width="22" height="11" viewBox="0 0 22 11"><path d="M1,5 L5,5 M3,3 L5,5 L3,7" fill="none" stroke="#cfcfcf" stroke-width="0.8"/><rect x="7" y="1" width="1" height="9" fill="#bbb"/><rect x="10" y="2" width="8" height="1.5" fill="#999"/><rect x="10" y="5" width="8" height="1.5" fill="#999"/><rect x="10" y="8" width="8" height="1.5" fill="#999"/></svg>
<div style="left:1468px;top:985px;width:9px;height:11px;background:#3a383b;border-radius:2px"></div>
<svg style="position:absolute;left:1468px;top:985px;" width="9" height="11" viewBox="0 0 9 11"><path d="M2.0,4.5 L4.5,2.0 L7.0,4.5 Z M2.0,6.5 L4.5,9.0 L7.0,6.5 Z" fill="#d8d8d8"/></svg>
<div style="left:1479px;top:985.5px;width:42px;height:10px;background:#aaa9ab;border-radius:1px;"></div>
<div class="t" style="left:1481px;top:987.00px;font-size:7.2px;line-height:7.2px;color:#1c1c1c;font-weight:400;font-family:'Liberation Sans',sans-serif;">0 mm</div>
<svg style="position:absolute;left:1530px;top:985px;" width="22" height="11" viewBox="0 0 22 11"><rect x="2" y="2" width="8" height="1.5" fill="#999"/><rect x="2" y="5" width="8" height="1.5" fill="#999"/><rect x="2" y="8" width="8" height="1.5" fill="#999"/><rect x="12" y="1" width="1" height="9" fill="#bbb"/><path d="M15,5 L20,5 M18,3 L20,5 L18,7" fill="none" stroke="#cfcfcf" stroke-width="0.8"/></svg>
<div style="left:1545px;top:985px;width:9px;height:11px;background:#3a383b;border-radius:2px"></div>
<svg style="position:absolute;left:1545px;top:985px;" width="9" height="11" viewBox="0 0 9 11"><path d="M2.0,4.5 L4.5,2.0 L7.0,4.5 Z M2.0,6.5 L4.5,9.0 L7.0,6.5 Z" fill="#d8d8d8"/></svg>
<div style="left:1556px;top:985.5px;width:42px;height:10px;background:#aaa9ab;border-radius:1px;"></div>
<div class="t" style="left:1558px;top:987.00px;font-size:7.2px;line-height:7.2px;color:#1c1c1c;font-weight:400;font-family:'Liberation Sans',sans-serif;">0 mm</div>
<div style="left:1447px;top:979px;width:156px;height:1px;background:#3e3c3f"></div>
<div style="left:1604px;top:70px;width:157px;height:929px;background:#4a484b"></div>
<div style="left:1604px;top:70px;width:157px;height:12px;background:#353336"></div>
<div style="left:1604px;top:70px;width:43px;height:12px;background:#4a484b"></div>
<svg style="position:absolute;left:1607px;top:72.5px;" width="5" height="8" viewBox="0 0 5 8"><path d="M0.5,3 L2.5,1 L4.5,3 M0.5,5 L2.5,7 L4.5,5" fill="none" stroke="#cfcfcf" stroke-width="0.9"/></svg>
<div class="t" style="left:1614px;top:72.89px;font-size:8.4px;line-height:8.4px;color:#f2f2f2;font-weight:700;font-family:'Liberation Sans',sans-serif;">Verlauf</div>
<svg style="position:absolute;left:1746px;top:75px;" width="4" height="2.5" viewBox="0 0 4 2.5"><path d="M0,0 L4,0 L2.0,2.5 Z" fill="#d0d0d0"/></svg>
<svg style="position:absolute;left:1751px;top:72.5px;" width="8" height="8" viewBox="0 0 8 8"><path d="M0,1 L8,1 M0,4 L8,4 M0,7 L8,7" stroke="#6e6d70" stroke-width="1"/></svg>
<svg style="position:absolute;left:1608px;top:87px;" width="23" height="24" viewBox="0 0 23 24"><defs><linearGradient id="vg" x1="0" x2="1"><stop offset="0" stop-color="#f4f4f4"/><stop offset="1" stop-color="#1a1a1a"/></linearGradient></defs><rect x="0.5" y="0.5" width="21" height="22" fill="url(#vg)" stroke="#2a292b"/></svg>
<div class="t" style="right:250px;top:91.91px;font-size:7.2px;line-height:7.2px;color:#d8d8d8;font-weight:400;font-family:'Liberation Sans',sans-serif;">Typ:</div>
<div style="left:1672px;top:90px;width:77px;height:10px;background:#545255;border:1px solid #3c3a3d"></div>
<svg style="position:absolute;left:1739px;top:93.5px;" width="6" height="4" viewBox="0 0 6 4"><path d="M0,0 L6,0 L3.0,4 Z" fill="#e0e0e0"/></svg>
<div class="t" style="right:250px;top:107.41px;font-size:7.2px;line-height:7.2px;color:#d8d8d8;font-weight:400;font-family:'Liberation Sans',sans-serif;">Winkel:</div>
<div style="left:1673px;top:105.5px;width:23px;height:9.5px;background:#a9a8aa;border-radius:1px;"></div>
<div class="t" style="left:1698px;top:106.23px;font-size:8px;line-height:8px;color:#d8d8d8;font-weight:400;font-family:'Liberation Sans',sans-serif;">&#176;</div>
<div class="t" style="right:250px;top:122.41px;font-size:7.2px;line-height:7.2px;color:#d8d8d8;font-weight:400;font-family:'Liberation Sans',sans-serif;">Position:</div>
<div style="left:1673px;top:120.5px;width:23px;height:9.5px;background:#a9a8aa;border-radius:1px;"></div>
<div class="t" style="left:1697px;top:122.41px;font-size:7.2px;line-height:7.2px;color:#d8d8d8;font-weight:400;font-family:'Liberation Sans',sans-serif;">%</div>
<div class="t" style="right:251px;top:138.91px;font-size:7.2px;line-height:7.2px;color:#d8d8d8;font-weight:400;font-family:'Liberation Sans',sans-serif;">Umkehren</div>
<svg style="position:absolute;left:1675px;top:136px;" width="14" height="12" viewBox="0 0 14 12"><rect x="1" y="1" width="5" height="4" fill="#555" stroke="#ddd" stroke-width="0.8"/><rect x="7" y="7" width="5" height="4" fill="#555" stroke="#ddd" stroke-width="0.8"/><path d="M8,3 L11,3 M2,9 L5,9" stroke="#ddd" stroke-width="0.8"/></svg>
<svg style="position:absolute;left:1610px;top:159px;" width="140" height="9" viewBox="0 0 140 9"><defs><linearGradient id="vb" x1="0" x2="1"><stop offset="0" stop-color="#f8f8f8"/><stop offset="1" stop-color="#050505"/></linearGradient></defs><rect x="0.5" y="0.5" width="139" height="8" fill="url(#vb)" stroke="#2a292b"/></svg>
<div style="left:1604px;top:182px;width:157px;height:3px;background:#1f1e21"></div>
<div style="left:1604px;top:185px;width:157px;height:12px;background:#353336"></div>
<div style="left:1604px;top:185px;width:70px;height:12px;background:#4a484b"></div>
<div class="t" style="left:1607px;top:187.06px;font-size:8.2px;line-height:8.2px;color:#f2f2f2;font-weight:700;font-family:'Liberation Sans',sans-serif;">Verkn&#252;pfungen</div>
<svg style="position:absolute;left:1746px;top:190px;" width="4" height="2.5" viewBox="0 0 4 2.5"><path d="M0,0 L4,0 L2.0,2.5 Z" fill="#d0d0d0"/></svg>
<svg style="position:absolute;left:1751px;top:187.5px;" width="8" height="8" viewBox="0 0 8 8"><path d="M0,1 L8,1 M0,4 L8,4 M0,7 L8,7" stroke="#8a898c" stroke-width="1"/></svg>
<div style="left:1604px;top:197px;width:157px;height:15px;background:#4a484b"></div>
<div class="t" style="left:1607px;top:201.41px;font-size:7.2px;line-height:7.2px;color:#f0f0f0;font-weight:700;font-family:'Liberation Sans',sans-serif;">Name</div>
<div style="left:1705px;top:198px;width:1px;height:13px;background:#3a383b"></div>
<svg style="position:absolute;left:1708px;top:199px;" width="11" height="11" viewBox="0 0 11 11"><path d="M5.5,1 L10.5,10 L0.5,10 Z" fill="#e8e8e8"/><rect x="5" y="4" width="1.2" height="3.5" fill="#222"/><rect x="5" y="8.3" width="1.2" height="1.2" fill="#222"/></svg>
<div style="left:1724px;top:198px;width:1px;height:13px;background:#3a383b"></div>
<svg style="position:absolute;left:1729px;top:199px;" width="9" height="11" viewBox="0 0 9 11"><path d="M0.5,0.5 L5.5,0.5 L8.5,3.5 L8.5,10.5 L0.5,10.5 Z" fill="#cfcfcf"/></svg>
<svg style="position:absolute;left:1741px;top:204px;" width="4" height="2.5" viewBox="0 0 4 2.5"><path d="M0,0 L4,0 L2.0,2.5 Z" fill="#e0e0e0"/></svg>
<div style="left:1604px;top:212px;width:157px;height:1px;background:#3a383b"></div>
<div style="left:1604px;top:213px;width:146px;height:165px;background:#474548"></div>
<div style="left:1750px;top:213px;width:10px;height:165px;background:#323033"></div>
<div style="left:1750px;top:213px;width:1.5px;height:165px;background:#242226"></div>
<svg style="position:absolute;left:1751px;top:216px;" width="8" height="5" viewBox="0 0 8 5"><path d="M1,4.5 L4,1 L7,4.5 Z" fill="#c8c8c8"/></svg>
<svg style="position:absolute;left:1751px;top:370px;" width="8" height="5" viewBox="0 0 8 5"><path d="M1,0.5 L4,4 L7,0.5 Z" fill="#c8c8c8"/></svg>
<div style="left:1604px;top:378px;width:146px;height:10px;background:#3a383b"></div>
<div style="left:1614px;top:381px;width:126px;height:4px;background:#2f2d30"></div>
<svg style="position:absolute;left:1606px;top:379px;" width="6" height="8" viewBox="0 0 6 8"><path d="M4.5,1 L1,4 L4.5,7 Z" fill="#bbb"/></svg>
<svg style="position:absolute;left:1741px;top:379px;" width="6" height="8" viewBox="0 0 6 8"><path d="M1.5,1 L5,4 L1.5,7 Z" fill="#bbb"/></svg>
<div style="left:1604px;top:388px;width:157px;height:16px;background:#4a484b"></div>
<svg style="position:absolute;left:1607px;top:392px;" width="8" height="6" viewBox="0 0 8 6"><path d="M0.5,0.5 L7.5,0.5 L4,5 Z" fill="#eee"/></svg>
<div class="t" style="left:1617px;top:392.91px;font-size:7.2px;line-height:7.2px;color:#e0e0e0;font-weight:700;font-family:'Liberation Sans',sans-serif;">0 ...</div>
<svg style="position:absolute;left:1637px;top:390px;" width="13" height="11" viewBox="0 0 13 11"><path d="M3,9 A2.5,2.5 0 0 1 3,4.5 A3.5,3.5 0 0 1 9.5,3.5 A2.8,2.8 0 0 1 10.5,9 Z" fill="none" stroke="#8e8d90" stroke-width="1.1"/><circle cx="6" cy="6.5" r="1.6" fill="none" stroke="#8e8d90"/></svg>
<svg style="position:absolute;left:1659px;top:391px;" width="14" height="9" viewBox="0 0 14 9"><path d="M5,2 L2.5,2 A2.5,2.5 0 0 0 2.5,7 L5,7 M9,2 L11.5,2 A2.5,2.5 0 0 1 11.5,7 L9,7 M4.5,4.5 L9.5,4.5" fill="none" stroke="#8e8d90" stroke-width="1.2"/></svg>
<svg style="position:absolute;left:1681px;top:390px;" width="14" height="11" viewBox="0 0 14 11"><path d="M1,5.5 L6,5.5 M4,3.5 L6,5.5 L4,7.5" fill="none" stroke="#8e8d90" stroke-width="1.2"/><rect x="7" y="1" width="6" height="9" fill="none" stroke="#8e8d90"/><path d="M8.5,4 L11.5,4 M8.5,6 L11.5,6" stroke="#8e8d90"/></svg>
<svg style="position:absolute;left:1704px;top:390px;" width="12" height="11" viewBox="0 0 12 11"><path d="M2,5 A4,4 0 0 1 9.5,3 M10,6 A4,4 0 0 1 2.5,8" fill="none" stroke="#8e8d90" stroke-width="1.2"/><path d="M8,1 L10,3.2 L7.5,4 M4,10 L2,7.8 L4.5,7" fill="none" stroke="#8e8d90"/></svg>
<svg style="position:absolute;left:1727px;top:390px;" width="11" height="11" viewBox="0 0 11 11"><path d="M1.5,9.5 L2.5,7 L8.5,1 L10,2.5 L4,8.5 Z" fill="none" stroke="#8e8d90" stroke-width="1.1"/></svg>
<div style="left:1604px;top:404px;width:157px;height:1px;background:#3a383b"></div>
<div class="t" style="left:1606px;top:408.07px;font-size:7px;line-height:7px;color:#f0f0f0;font-weight:700;font-family:'Liberation Sans',sans-serif;letter-spacing:-0.15px">Verkn&#252;pfungsinformationen</div>
<svg style="position:absolute;left:1734px;top:406px;" width="6" height="8" viewBox="0 0 6 8"><path d="M4.5,1 L1,4 L4.5,7" fill="none" stroke="#888" stroke-width="1.2"/></svg>
<svg style="position:absolute;left:1749px;top:406px;" width="6" height="8" viewBox="0 0 6 8"><path d="M1.5,1 L5,4 L1.5,7" fill="none" stroke="#888" stroke-width="1.2"/></svg>
<div style="left:1604px;top:419px;width:157px;height:1px;background:#3a383b"></div>
<div style="left:1604px;top:420px;width:146px;height:579px;background:#4a484b"></div>
<div style="left:1750px;top:420px;width:10px;height:579px;background:#323033"></div>
<div style="left:1750px;top:420px;width:1.5px;height:579px;background:#242226"></div>
<svg style="position:absolute;left:1751px;top:423px;" width="8" height="5" viewBox="0 0 8 5"><path d="M1,4.5 L4,1 L7,4.5 Z" fill="#c8c8c8"/></svg>
<div style="left:1762px;top:70px;width:155px;height:929px;background:#4a484b"></div>
<div style="left:1762px;top:70px;width:155px;height:13px;background:#353336"></div>
<div style="left:1762px;top:70px;width:38px;height:13px;background:#4a484b"></div>
<svg style="position:absolute;left:1765px;top:72.5px;" width="5" height="8" viewBox="0 0 5 8"><path d="M0.5,3 L2.5,1 L4.5,3 M0.5,5 L2.5,7 L4.5,5" fill="none" stroke="#cfcfcf" stroke-width="0.9"/></svg>
<div class="t" style="left:1772px;top:72.89px;font-size:8.4px;line-height:8.4px;color:#f2f2f2;font-weight:700;font-family:'Liberation Sans',sans-serif;">Seiten</div>
<div class="t" style="left:1805px;top:72.89px;font-size:8.4px;line-height:8.4px;color:#b5b4b7;font-weight:400;font-family:'Liberation Sans',sans-serif;">Ebenen</div>
<svg style="position:absolute;left:1902px;top:75px;" width="4" height="2.5" viewBox="0 0 4 2.5"><path d="M0,0 L4,0 L2.0,2.5 Z" fill="#d0d0d0"/></svg>
<svg style="position:absolute;left:1907px;top:72.5px;" width="8" height="8" viewBox="0 0 8 8"><path d="M0,1 L8,1 M0,4 L8,4 M0,7 L8,7" stroke="#6e6d70" stroke-width="1"/></svg>
<div style="left:1762px;top:83px;width:146px;height:108px;background:#4a484b"></div>
<div class="t" style="left:1764px;top:92.91px;font-size:7.2px;line-height:7.2px;color:#d6d6d6;font-weight:400;font-family:'Liberation Sans',sans-serif;">[Ohne]</div>
<div style="left:1889px;top:86px;width:13px;height:18px;background:#f6f6f8"></div>
<div class="t" style="left:1764px;top:114.91px;font-size:7.2px;line-height:7.2px;color:#d6d6d6;font-weight:400;font-family:'Liberation Sans',sans-serif;">A-Seitenzahl</div>
<div style="left:1877px;top:108px;width:25px;height:18px;background:#f6f6f8"></div>
<div style="left:1889px;top:108px;width:1px;height:18px;background:#9aa8c8"></div>
<div style="left:1882px;top:110px;width:1px;height:14px;background:#c8d0e0"></div>
<div style="left:1896px;top:110px;width:1px;height:14px;background:#c8d0e0"></div>
<div class="t" style="left:1764px;top:136.91px;font-size:7.2px;line-height:7.2px;color:#d6d6d6;font-weight:400;font-family:'Liberation Sans',sans-serif;">B-Basis</div>
<div style="left:1877px;top:130px;width:25px;height:18px;background:#f6f6f8"></div>
<div style="left:1889px;top:130px;width:1px;height:18px;background:#9aa8c8"></div>
<div style="left:1882px;top:132px;width:1px;height:14px;background:#c8d0e0"></div>
<div style="left:1896px;top:132px;width:1px;height:14px;background:#c8d0e0"></div>
<div class="t" style="left:1878px;top:130.92px;font-size:6px;line-height:6px;color:#111;font-weight:700;font-family:'Liberation Sans',sans-serif;">A</div>
<div class="t" style="left:1896px;top:130.92px;font-size:6px;line-height:6px;color:#111;font-weight:700;font-family:'Liberation Sans',sans-serif;">A</div>
<div class="t" style="left:1764px;top:157.91px;font-size:7.2px;line-height:7.2px;color:#d6d6d6;font-weight:400;font-family:'Liberation Sans',sans-serif;">B1-Kapitelstartseite</div>
<div style="left:1877px;top:151px;width:25px;height:18px;background:#f6f6f8"></div>
<div style="left:1889px;top:151px;width:1px;height:18px;background:#9aa8c8"></div>
<div style="left:1882px;top:153px;width:1px;height:14px;background:#c8d0e0"></div>
<div style="left:1896px;top:153px;width:1px;height:14px;background:#c8d0e0"></div>
<div class="t" style="left:1896px;top:151.92px;font-size:6px;line-height:6px;color:#111;font-weight:700;font-family:'Liberation Sans',sans-serif;">B</div>
<svg style="position:absolute;left:1877px;top:151px;" width="12" height="18" viewBox="0 0 12 18"><path d="M1,1 L11,17 M11,1 L1,17" stroke="#aab" stroke-width="0.7"/></svg>
<div style="left:1909px;top:83px;width:8px;height:108px;background:#323033"></div>
<div style="left:1909px;top:83px;width:1.5px;height:108px;background:#242226"></div>
<svg style="position:absolute;left:1910px;top:86px;" width="8" height="5" viewBox="0 0 8 5"><path d="M1,4.5 L4,1 L7,4.5 Z" fill="#c8c8c8"/></svg>
<svg style="position:absolute;left:1910px;top:183px;" width="8" height="5" viewBox="0 0 8 5"><path d="M1,0.5 L4,4 L7,0.5 Z" fill="#c8c8c8"/></svg>
<div style="left:1762px;top:191px;width:155px;height:3px;background:#3a383b"></div>
<div style="left:1762px;top:194px;width:146px;height:430px;background:#4a484b"></div>
<div style="left:1909px;top:194px;width:8px;height:430px;background:#323033"></div>
<div style="left:1909px;top:194px;width:1.5px;height:430px;background:#242226"></div>
<svg style="position:absolute;left:1910px;top:197px;" width="8" height="5" viewBox="0 0 8 5"><path d="M1,4.5 L4,1 L7,4.5 Z" fill="#c8c8c8"/></svg>
<svg style="position:absolute;left:1910px;top:616px;" width="8" height="5" viewBox="0 0 8 5"><path d="M1,0.5 L4,4 L7,0.5 Z" fill="#c8c8c8"/></svg>
<svg style="position:absolute;left:1829px;top:196px;" width="10" height="5" viewBox="0 0 10 5"><path d="M0.5,0.5 L9.5,0.5 L5,4.5 Z" fill="#9a999c"/></svg>
<div style="left:1817px;top:201px;width:38px;height:28px;background:#aeb0b8"></div>
<div style="left:1835px;top:201px;width:1px;height:28px;background:#7a88a8"></div>
<svg style="position:absolute;left:1817px;top:201px;" width="18" height="28" viewBox="0 0 18 28"><path d="M1,3 L17,27 M17,3 L1,27" stroke="#c8c8d0" stroke-width="0.8"/></svg>
<div style="left:1817px;top:201px;width:9px;height:7px;background:#f0f0f0"></div>
<div class="t" style="left:1818px;top:201.75px;font-size:6.2px;line-height:6.2px;color:#111;font-weight:700;font-family:'Liberation Sans',sans-serif;">B1</div>
<div style="left:1846px;top:201px;width:9px;height:7px;background:#f0f0f0"></div>
<div class="t" style="left:1846.5px;top:201.75px;font-size:6.2px;line-height:6.2px;color:#111;font-weight:700;font-family:'Liberation Sans',sans-serif;">B1</div>
<div style="left:1824px;top:231px;width:21px;height:11px;background:#3e4660"></div>
<div class="t" style="left:1334.5px;width:1000px;text-align:center;top:233.57px;font-size:7px;line-height:7px;color:#f4f4f4;font-weight:700;font-family:'Liberation Sans',sans-serif;">2-3</div>
<div style="left:1817px;top:249px;width:38px;height:28px;background:#f6f6f8"></div>
<div style="left:1835px;top:249px;width:1px;height:28px;background:#8a9ac0"></div>
<div style="left:1824px;top:252px;width:1px;height:22px;background:#c4cce0"></div>
<div style="left:1847px;top:252px;width:1px;height:22px;background:#c4cce0"></div>
<div class="t" style="left:1818px;top:250.00px;font-size:6.5px;line-height:6.5px;color:#111;font-weight:700;font-family:'Liberation Sans',sans-serif;">B</div>
<div class="t" style="left:1849px;top:250.00px;font-size:6.5px;line-height:6.5px;color:#111;font-weight:700;font-family:'Liberation Sans',sans-serif;">B</div>
<div class="t" style="left:1334.5px;width:1000px;text-align:center;top:282.07px;font-size:7px;line-height:7px;color:#d8d8d8;font-weight:400;font-family:'Liberation Sans',sans-serif;">4-5</div>
<div style="left:1762px;top:624px;width:155px;height:16px;background:#4a484b"></div>
<div style="left:1762px;top:624px;width:155px;height:1px;background:#3a383b"></div>
<div class="t" style="left:1764px;top:628.91px;font-size:7.2px;line-height:7.2px;color:#e6e6e6;font-weight:400;font-family:'Liberation Sans',sans-serif;">4 Seiten auf 2 Druck...</div>
<svg style="position:absolute;left:1843px;top:628px;" width="13" height="9" viewBox="0 0 13 9"><rect x="0.5" y="3" width="5" height="5.5" fill="#ccc"/><rect x="6" y="3" width="5" height="5.5" fill="#ccc"/><path d="M8,0.5 L11,0.5 L11,3" fill="none" stroke="#ccc"/></svg>
<svg style="position:absolute;left:1867px;top:627px;" width="10" height="10" viewBox="0 0 10 10"><path d="M1,1 L9,1 L9,9 L4,9 L1,6 Z" fill="#d4d4d4"/><path d="M1,6 L4,6 L4,9" fill="#777"/></svg>
<svg style="position:absolute;left:1889px;top:627px;" width="10" height="10" viewBox="0 0 10 10"><path d="M0.5,2.5 L9.5,2.5 M3.5,1 L6.5,1" stroke="#cfcfcf" stroke-width="1.2"/><path d="M1.5,3.5 L8.5,3.5 L8,9.5 L2,9.5 Z" fill="#bdbdbd"/><path d="M3.5,4.5 L3.5,8.5 M5,4.5 L5,8.5 M6.5,4.5 L6.5,8.5" stroke="#555" stroke-width="0.6"/></svg>
<div style="left:1762px;top:640px;width:155px;height:2px;background:#1f1e21"></div>
<div style="left:1762px;top:642px;width:155px;height:13px;background:#353336"></div>
<div style="left:1762px;top:642px;width:41px;height:13px;background:#4a484b"></div>
<svg style="position:absolute;left:1765px;top:644.5px;" width="5" height="8" viewBox="0 0 5 8"><path d="M0.5,3 L2.5,1 L4.5,3 M0.5,5 L2.5,7 L4.5,5" fill="none" stroke="#cfcfcf" stroke-width="0.9"/></svg>
<div class="t" style="left:1772px;top:644.89px;font-size:8.4px;line-height:8.4px;color:#f2f2f2;font-weight:700;font-family:'Liberation Sans',sans-serif;">Kontur</div>
<div class="t" style="left:1808px;top:644.89px;font-size:8.4px;line-height:8.4px;color:#b5b4b7;font-weight:400;font-family:'Liberation Sans',sans-serif;">Farbe</div>
<svg style="position:absolute;left:1902px;top:647px;" width="4" height="2.5" viewBox="0 0 4 2.5"><path d="M0,0 L4,0 L2.0,2.5 Z" fill="#d0d0d0"/></svg>
<svg style="position:absolute;left:1907px;top:644.5px;" width="8" height="8" viewBox="0 0 8 8"><path d="M0,1 L8,1 M0,4 L8,4 M0,7 L8,7" stroke="#6e6d70" stroke-width="1"/></svg>
<div style="left:1762px;top:655px;width:155px;height:178px;background:#4a484b"></div>
<div class="t" style="right:91px;top:662.91px;font-size:7.2px;line-height:7.2px;color:#dadada;font-weight:400;font-family:'Liberation Sans',sans-serif;">St&#228;rke:</div>
<div style="left:1832px;top:661px;width:8px;height:11px;background:#3a383b;border-radius:2px"></div>
<svg style="position:absolute;left:1832px;top:661px;" width="8" height="11" viewBox="0 0 8 11"><path d="M1.5,4.5 L4.0,2.0 L6.5,4.5 Z M1.5,6.5 L4.0,9.0 L6.5,6.5 Z" fill="#d8d8d8"/></svg>
<div style="left:1843px;top:662px;width:30px;height:10px;background:#aaa9ab;border-radius:1px;"></div>
<div class="t" style="left:1845px;top:663.50px;font-size:7.2px;line-height:7.2px;color:#1c1c1c;font-weight:400;font-family:'Liberation Sans',sans-serif;">0 Pt</div>
<div style="left:1873px;top:662px;width:11px;height:10px;background:#3e3c3f;border-radius:1px"></div>
<svg style="position:absolute;left:1873px;top:662px;" width="11" height="10" viewBox="0 0 11 10"><path d="M2.5,3.5 L8.5,3.5 L5.5,7.0 Z" fill="#cfcfd0"/></svg>
<div class="t" style="right:91px;top:680.91px;font-size:7.2px;line-height:7.2px;color:#dadada;font-weight:400;font-family:'Liberation Sans',sans-serif;">Gehrungsgrenze:</div>
<div style="left:1832px;top:679px;width:8px;height:11px;background:#3a383b;border-radius:2px"></div>
<svg style="position:absolute;left:1832px;top:679px;" width="8" height="11" viewBox="0 0 8 11"><path d="M1.5,4.5 L4.0,2.0 L6.5,4.5 Z M1.5,6.5 L4.0,9.0 L6.5,6.5 Z" fill="#d8d8d8"/></svg>
<div style="left:1843px;top:680px;width:30px;height:10px;background:#aaa9ab;border-radius:1px;"></div>
<div class="t" style="left:1845px;top:681.50px;font-size:7.2px;line-height:7.2px;color:#333;font-weight:400;font-family:'Liberation Sans',sans-serif;">4</div>
<div class="t" style="left:1877px;top:680.91px;font-size:7.2px;line-height:7.2px;color:#d0d0d0;font-weight:400;font-family:'Liberation Sans',sans-serif;">x</div>
<div class="t" style="right:91px;top:696.91px;font-size:7.2px;line-height:7.2px;color:#dadada;font-weight:400;font-family:'Liberation Sans',sans-serif;">Abschluss:</div>
<div style="left:1833px;top:696px;width:11px;height:11px;background:#2e2d30"></div>
<svg style="position:absolute;left:1834px;top:697px;" width="10" height="9" viewBox="0 0 10 9"><rect x="1" y="1" width="8" height="7" fill="#d8d8d8"/><rect x="3" y="3" width="6" height="3" fill="#444"/></svg>
<div style="left:1845px;top:696px;width:11px;height:11px;background:transparent"></div>
<svg style="position:absolute;left:1846px;top:697px;" width="10" height="9" viewBox="0 0 10 9"><rect x="1" y="1" width="8" height="7" fill="#d8d8d8"/><rect x="3" y="3" width="6" height="3" fill="#444"/></svg>
<div style="left:1857px;top:696px;width:11px;height:11px;background:transparent"></div>
<svg style="position:absolute;left:1858px;top:697px;" width="10" height="9" viewBox="0 0 10 9"><rect x="1" y="1" width="8" height="7" fill="#d8d8d8"/><rect x="3" y="3" width="6" height="3" fill="#444"/></svg>
<div class="t" style="right:91px;top:714.91px;font-size:7.2px;line-height:7.2px;color:#dadada;font-weight:400;font-family:'Liberation Sans',sans-serif;">Ecke:</div>
<div style="left:1833px;top:713px;width:11px;height:11px;background:#2e2d30"></div>
<svg style="position:absolute;left:1834px;top:714px;" width="10" height="9" viewBox="0 0 10 9"><path d="M1,8 L1,1 L9,1 L9,4 L4,4 L4,8 Z" fill="#d8d8d8"/><rect x="5" y="5" width="4" height="3" fill="#bbb"/></svg>
<div style="left:1845px;top:713px;width:11px;height:11px;background:transparent"></div>
<svg style="position:absolute;left:1846px;top:714px;" width="10" height="9" viewBox="0 0 10 9"><path d="M1,8 L1,1 L9,1 L9,4 L4,4 L4,8 Z" fill="#d8d8d8"/><rect x="5" y="5" width="4" height="3" fill="#bbb"/></svg>
<div style="left:1857px;top:713px;width:11px;height:11px;background:transparent"></div>
<svg style="position:absolute;left:1858px;top:714px;" width="10" height="9" viewBox="0 0 10 9"><path d="M1,8 L1,1 L9,1 L9,4 L4,4 L4,8 Z" fill="#d8d8d8"/><rect x="5" y="5" width="4" height="3" fill="#bbb"/></svg>
<div class="t" style="right:91px;top:737.91px;font-size:7.2px;line-height:7.2px;color:#dadada;font-weight:400;font-family:'Liberation Sans',sans-serif;">Kontur ausrichten:</div>
<svg style="position:absolute;left:1834px;top:736px;" width="10" height="10" viewBox="0 0 10 10"><path d="M2,1 L2,8 L9,8" fill="none" stroke="#77767a" stroke-width="1.5"/></svg>
<svg style="position:absolute;left:1846px;top:736px;" width="10" height="10" viewBox="0 0 10 10"><path d="M2,1 L2,8 L9,8" fill="none" stroke="#77767a" stroke-width="1.5"/></svg>
<svg style="position:absolute;left:1858px;top:736px;" width="10" height="10" viewBox="0 0 10 10"><path d="M2,1 L2,8 L9,8" fill="none" stroke="#77767a" stroke-width="1.5"/></svg>
<div style="left:1762px;top:752px;width:155px;height:1px;background:#3e3c3f"></div>
<div class="t" style="right:91px;top:759.91px;font-size:7.2px;line-height:7.2px;color:#dadada;font-weight:400;font-family:'Liberation Sans',sans-serif;">Typ:</div>
<div style="left:1832px;top:758px;width:69px;height:10px;background:#a9a8aa"></div>
<div style="left:1834px;top:760px;width:62px;height:5px;background:#0a0a0a"></div>
<div style="left:1901px;top:758px;width:11px;height:10px;background:#3e3c3f;border-radius:1px"></div>
<svg style="position:absolute;left:1901px;top:758px;" width="11" height="10" viewBox="0 0 11 10"><path d="M2.5,3.5 L8.5,3.5 L5.5,7.0 Z" fill="#cfcfd0"/></svg>
<div class="t" style="right:91px;top:774.91px;font-size:7.2px;line-height:7.2px;color:#dadada;font-weight:400;font-family:'Liberation Sans',sans-serif;">Anfang:</div>
<div style="left:1832px;top:773px;width:69px;height:10px;background:#aaa9ab;border-radius:1px;"></div>
<div class="t" style="left:1834px;top:774.50px;font-size:7.2px;line-height:7.2px;color:#1c1c1c;font-weight:400;font-family:'Liberation Sans',sans-serif;">Ohne</div>
<div style="left:1901px;top:773px;width:11px;height:10px;background:#3e3c3f;border-radius:1px"></div>
<svg style="position:absolute;left:1901px;top:773px;" width="11" height="10" viewBox="0 0 11 10"><path d="M2.5,3.5 L8.5,3.5 L5.5,7.0 Z" fill="#cfcfd0"/></svg>
<div class="t" style="right:91px;top:789.91px;font-size:7.2px;line-height:7.2px;color:#dadada;font-weight:400;font-family:'Liberation Sans',sans-serif;">Ende:</div>
<div style="left:1832px;top:788px;width:69px;height:10px;background:#aaa9ab;border-radius:1px;"></div>
<div class="t" style="left:1834px;top:789.50px;font-size:7.2px;line-height:7.2px;color:#1c1c1c;font-weight:400;font-family:'Liberation Sans',sans-serif;">Ohne</div>
<div style="left:1901px;top:788px;width:11px;height:10px;background:#3e3c3f;border-radius:1px"></div>
<svg style="position:absolute;left:1901px;top:788px;" width="11" height="10" viewBox="0 0 11 10"><path d="M2.5,3.5 L8.5,3.5 L5.5,7.0 Z" fill="#cfcfd0"/></svg>
<div class="t" style="right:91px;top:804.91px;font-size:7.2px;line-height:7.2px;color:#dadada;font-weight:400;font-family:'Liberation Sans',sans-serif;">Farbe f&#252;r L&#252;cke:</div>
<div style="left:1832px;top:803px;width:69px;height:10px;background:#9f9ea1"></div>
<svg style="position:absolute;left:1834px;top:804px;" width="8" height="8" viewBox="0 0 8 8"><rect width="8" height="8" fill="#eee"/><path d="M0,8 L8,0" stroke="#d02030" stroke-width="1.3"/></svg>
<div class="t" style="left:1845px;top:804.91px;font-size:7.2px;line-height:7.2px;color:#5a595c;font-weight:400;font-family:'Liberation Sans',sans-serif;">[Ohne]</div>
<div style="left:1901px;top:803px;width:11px;height:10px;background:#444245;border-radius:1px"></div>
<svg style="position:absolute;left:1901px;top:803px;" width="11" height="10" viewBox="0 0 11 10"><path d="M2.5,3.5 L8.5,3.5 L5.5,7.0 Z" fill="#777"/></svg>
<div class="t" style="right:91px;top:819.91px;font-size:7.2px;line-height:7.2px;color:#dadada;font-weight:400;font-family:'Liberation Sans',sans-serif;">Farbton f&#252;r L&#252;cke:</div>
<div style="left:1832px;top:818px;width:23px;height:10px;background:#9f9ea1;border-radius:1px;"></div>
<div class="t" style="left:1834px;top:819.69px;font-size:6.8px;line-height:6.8px;color:#444;font-weight:400;font-family:'Liberation Sans',sans-serif;">100 %</div>
<svg style="position:absolute;left:1859px;top:819px;" width="6" height="8" viewBox="0 0 6 8"><path d="M1.5,1 L5,4 L1.5,7 Z" fill="#777"/></svg>
<div style="left:1762px;top:833px;width:155px;height:2px;background:#1f1e21"></div>
<div style="left:1762px;top:835px;width:155px;height:12px;background:#353336"></div>
<div style="left:1762px;top:835px;width:55px;height:12px;background:#4a484b"></div>
<svg style="position:absolute;left:1765px;top:837.5px;" width="5" height="8" viewBox="0 0 5 8"><path d="M0.5,3 L2.5,1 L4.5,3 M0.5,5 L2.5,7 L4.5,5" fill="none" stroke="#cfcfcf" stroke-width="0.9"/></svg>
<div class="t" style="left:1772px;top:837.89px;font-size:8.4px;line-height:8.4px;color:#f2f2f2;font-weight:700;font-family:'Liberation Sans',sans-serif;">Farbfelder</div>
<svg style="position:absolute;left:1902px;top:840px;" width="4" height="2.5" viewBox="0 0 4 2.5"><path d="M0,0 L4,0 L2.0,2.5 Z" fill="#d0d0d0"/></svg>
<svg style="position:absolute;left:1907px;top:837.5px;" width="8" height="8" viewBox="0 0 8 8"><path d="M0,1 L8,1 M0,4 L8,4 M0,7 L8,7" stroke="#6e6d70" stroke-width="1"/></svg>
<div style="left:1762px;top:847px;width:155px;height:21px;background:#4a484b"></div>
<div style="left:1767px;top:852px;width:9px;height:9px;background:#3a78d6"></div>
<div style="left:1771px;top:857px;width:9px;height:9px;background:#f0f0f0;border:1.5px solid #b01a2a"></div>
<svg style="position:absolute;left:1776px;top:850px;" width="5" height="5" viewBox="0 0 5 5"><path d="M0.5,4 Q1,1 4,0.5" fill="none" stroke="#ddd"/></svg>
<svg style="position:absolute;left:1789px;top:854px;" width="9" height="9" viewBox="0 0 9 9"><rect x="0.5" y="0.5" width="8" height="8" fill="#444" stroke="#ddd"/></svg>
<div class="t" style="left:1801px;top:854.03px;font-size:10px;line-height:10px;color:#e0e0e0;font-weight:400;font-family:'Liberation Serif',serif;">T</div>
<div class="t" style="right:61px;top:855.41px;font-size:7.2px;line-height:7.2px;color:#d0d0d0;font-weight:400;font-family:'Liberation Sans',sans-serif;">Farbton:</div>
<div style="left:1861px;top:854px;width:19px;height:8px;background:#a9a8aa"></div>
<svg style="position:absolute;left:1885px;top:854px;" width="6" height="8" viewBox="0 0 6 8"><path d="M1.5,1 L5,4 L1.5,7 Z" fill="#888"/></svg>
<div class="t" style="left:1894px;top:855.41px;font-size:7.2px;line-height:7.2px;color:#d0d0d0;font-weight:400;font-family:'Liberation Sans',sans-serif;">%</div>
<div style="left:1762px;top:867px;width:155px;height:1px;background:#3a383b"></div>
<div style="left:1762px;top:868px;width:146px;height:131px;background:#474548"></div>
<div style="left:1909px;top:868px;width:8px;height:131px;background:#323033"></div>
<div style="left:1909px;top:868px;width:1.5px;height:131px;background:#242226"></div>
<svg style="position:absolute;left:1910px;top:871px;" width="8" height="5" viewBox="0 0 8 5"><path d="M1,4.5 L4,1 L7,4.5 Z" fill="#c8c8c8"/></svg>
<div style="left:1762px;top:868px;width:146px;height:15px;background:#4a5a77"></div>
<div style="left:1762px;top:882px;width:146px;height:1px;background:#3d3b3e"></div>
<svg style="position:absolute;left:1773px;top:871px;" width="10" height="10" viewBox="0 0 10 10"><rect x="0.5" y="0.5" width="9" height="9" fill="#f0f0f0" stroke="#222"/><path d="M1,9 L9,1" stroke="#d02030" stroke-width="1.5"/></svg>
<div class="t" style="left:1785px;top:872.41px;font-size:7.2px;line-height:7.2px;color:#ffffff;font-weight:700;font-family:'Liberation Sans',sans-serif;">[Ohne]</div>
<svg style="position:absolute;left:1872px;top:870px;" width="11" height="11" viewBox="0 0 11 11"><path d="M1,1 L10,10 M10,1 L1,10" stroke="#e8e8e8" stroke-width="1.1"/><path d="M7,1.5 L9.5,1.5 L9.5,4" fill="none" stroke="#e8e8e8" stroke-width="0.8"/></svg>
<svg style="position:absolute;left:1895px;top:871px;" width="10" height="10" viewBox="0 0 10 10"><rect x="0.5" y="0.5" width="9" height="9" fill="#eee" stroke="#aaa"/><path d="M1,9 L9,1" stroke="#d02030" stroke-width="1.2"/></svg>
<div style="left:1762px;top:897px;width:146px;height:1px;background:#3d3b3e"></div>
<div style="left:1773px;top:886px;width:10px;height:10px;background:#050505;border:1px solid #222"></div>
<div class="t" style="left:1785px;top:887.41px;font-size:7.2px;line-height:7.2px;color:#dcdcdc;font-weight:400;font-family:'Liberation Sans',sans-serif;">[Passermarken]</div>
<svg style="position:absolute;left:1872px;top:885px;" width="11" height="11" viewBox="0 0 11 11"><path d="M1,1 L10,10 M10,1 L1,10" stroke="#e8e8e8" stroke-width="1.1"/><path d="M7,1.5 L9.5,1.5 L9.5,4" fill="none" stroke="#e8e8e8" stroke-width="0.8"/></svg>
<svg style="position:absolute;left:1895px;top:886px;" width="10" height="10" viewBox="0 0 10 10"><rect x="0.5" y="0.5" width="9" height="9" fill="#ccc" stroke="#eee"/><circle cx="5" cy="5" r="2.5" fill="none" stroke="#444"/></svg>
<div style="left:1762px;top:912px;width:146px;height:1px;background:#3d3b3e"></div>
<div style="left:1773px;top:901px;width:10px;height:10px;background:#f4f4f4;border:1px solid #222"></div>
<div class="t" style="left:1785px;top:902.41px;font-size:7.2px;line-height:7.2px;color:#dcdcdc;font-weight:400;font-family:'Liberation Sans',sans-serif;">[Papier]</div>
<div style="left:1762px;top:927px;width:146px;height:1px;background:#3d3b3e"></div>
<div style="left:1773px;top:916px;width:10px;height:10px;background:#050505;border:1px solid #222"></div>
<div class="t" style="left:1785px;top:917.41px;font-size:7.2px;line-height:7.2px;color:#dcdcdc;font-weight:400;font-family:'Liberation Sans',sans-serif;">[Schwarz]</div>
<svg style="position:absolute;left:1872px;top:915px;" width="11" height="11" viewBox="0 0 11 11"><path d="M1,1 L10,10 M10,1 L1,10" stroke="#e8e8e8" stroke-width="1.1"/><path d="M7,1.5 L9.5,1.5 L9.5,4" fill="none" stroke="#e8e8e8" stroke-width="0.8"/></svg>
<svg style="position:absolute;left:1884px;top:916px;" width="9" height="10" viewBox="0 0 9 10"><rect x="0.5" y="0.5" width="8" height="9" fill="#8a898c" stroke="#ddd"/></svg>
<svg style="position:absolute;left:1895px;top:916px;" width="10" height="10" viewBox="0 0 10 10"><rect x="0.5" y="0.5" width="9" height="9" fill="#e8e8e8" stroke="#ddd"/><path d="M1,1 L9,1 L5,5 Z" fill="#d43a8c"/><path d="M1,9 L9,9 L5,5 Z" fill="#28b8d8"/><path d="M3,5 L7,5 L5,3 Z" fill="#222"/></svg>
<div style="left:1762px;top:942px;width:146px;height:1px;background:#3d3b3e"></div>
<div style="left:1773px;top:931px;width:10px;height:10px;background:#3a78d6;border:1px solid #222"></div>
<div class="t" style="left:1785px;top:932.41px;font-size:7.2px;line-height:7.2px;color:#dcdcdc;font-weight:400;font-family:'Liberation Sans',sans-serif;">C=80 M=50 Y=0 K=0</div>
<svg style="position:absolute;left:1884px;top:931px;" width="9" height="10" viewBox="0 0 9 10"><rect x="0.5" y="0.5" width="8" height="9" fill="#8a898c" stroke="#ddd"/></svg>
<svg style="position:absolute;left:1895px;top:931px;" width="10" height="10" viewBox="0 0 10 10"><rect x="0.5" y="0.5" width="9" height="9" fill="#e8e8e8" stroke="#ddd"/><path d="M1,1 L9,1 L5,5 Z" fill="#d43a8c"/><path d="M1,9 L9,9 L5,5 Z" fill="#28b8d8"/><path d="M3,5 L7,5 L5,3 Z" fill="#222"/></svg>
<svg style="position:absolute;left:3px;top:3px;" width="60" height="22" viewBox="0 0 60 22"><circle cx="7.6" cy="10.5" r="4.6" fill="#ec5f5c" stroke="#b8453f" stroke-width="0.6"/><circle cx="22.6" cy="10.5" r="4.6" fill="#f3c23a" stroke="#b89020" stroke-width="0.6"/><circle cx="37.6" cy="10.5" r="4.6" fill="#38c149" stroke="#24902f" stroke-width="0.6"/></svg>
<div class="t" style="left:60px;top:8.34px;font-size:12px;line-height:12px;color:#8e4672;font-weight:400;font-family:'Liberation Sans',sans-serif;">Id</div>
<div style="left:89px;top:6px;width:13px;height:13px;background:#151416;border:1px solid #9b9a9d"></div>
<div class="t" style="left:-404.5px;width:1000px;text-align:center;top:9.23px;font-size:8px;line-height:8px;color:#e4e4e4;font-weight:700;font-family:'Liberation Sans',sans-serif;">Br</div>
<div style="left:116px;top:6px;width:13px;height:13px;background:#151416;border:1px solid #9b9a9d"></div>
<div class="t" style="left:-377.5px;width:1000px;text-align:center;top:9.23px;font-size:8px;line-height:8px;color:#e4e4e4;font-weight:700;font-family:'Liberation Sans',sans-serif;">St</div>
<div class="t" style="left:152px;top:8.54px;font-size:10px;line-height:10px;color:#dedede;font-weight:400;font-family:'Liberation Sans',sans-serif;">100 %</div>
<svg style="position:absolute;left:183px;top:12px;" width="5" height="3.5" viewBox="0 0 5 3.5"><path d="M0,0 L5,0 L2.5,3.5 Z" fill="#dcdcdc"/></svg>
<div style="left:199px;top:6px;width:1px;height:16px;background:#3c3b3d"></div>
<svg style="position:absolute;left:211px;top:6px;" width="16" height="14" viewBox="0 0 16 14"><rect x="1" y="1.5" width="14" height="11.5" fill="none" stroke="#d8d8d8" stroke-width="1.2"/><path d="M5,2.5 L5,0.5 M7.5,2.5 L7.5,0.5 M10,2.5 L10,0.5 M12.5,2.5 L12.5,0.5" stroke="#e0e0e0" stroke-width="1"/><rect x="5" y="5" width="8" height="6" fill="#8a898c"/><path d="M5,7 L13,7 M5,9 L13,9 M7.5,5 L7.5,11 M10,5 L10,11" stroke="#5a595c" stroke-width="0.6"/><path d="M2.5,5 L4,5 M2.5,8 L4,8" stroke="#e0e0e0"/></svg>
<svg style="position:absolute;left:227.5px;top:11px;" width="5" height="3.5" viewBox="0 0 5 3.5"><path d="M0,0 L5,0 L2.5,3.5 Z" fill="#dcdcdc"/></svg>
<svg style="position:absolute;left:246px;top:5px;" width="16" height="16" viewBox="0 0 16 16"><rect x="3.5" y="4" width="9" height="8" fill="#a9a8ab" stroke="#d8d8d8" stroke-width="1"/><rect x="5.5" y="6" width="5" height="4" fill="#d8d8d8"/><path d="M1,3 L3,1 M15,3 L13,1 M1,13 L3,15 M15,13 L13,15" stroke="#cfcfcf" stroke-width="1.2"/></svg>
<svg style="position:absolute;left:264px;top:11px;" width="5" height="3.5" viewBox="0 0 5 3.5"><path d="M0,0 L5,0 L2.5,3.5 Z" fill="#dcdcdc"/></svg>
<svg style="position:absolute;left:282px;top:5px;" width="17" height="15" viewBox="0 0 17 15"><rect x="1" y="1.5" width="15" height="12" fill="none" stroke="#d0d0d0" stroke-width="1.2"/><rect x="4" y="4" width="3.5" height="2.5" fill="#e8e8e8"/><rect x="9.5" y="4" width="3.5" height="2.5" fill="#e8e8e8"/><rect x="4" y="8.5" width="3.5" height="2.5" fill="#e8e8e8"/><rect x="9.5" y="8.5" width="3.5" height="2.5" fill="#e8e8e8"/></svg>
<svg style="position:absolute;left:300px;top:11px;" width="5" height="3.5" viewBox="0 0 5 3.5"><path d="M0,0 L5,0 L2.5,3.5 Z" fill="#dcdcdc"/></svg>
<div style="left:1634px;top:4px;width:88px;height:18px;background:#535154;border:1px solid #38373a;border-radius:2px"></div>
<svg style="position:absolute;left:1641px;top:7px;" width="11" height="11" viewBox="0 0 11 11"><path d="M1,5 L1,10 L10,10 L10,5" fill="none" stroke="#d8d8d8" stroke-width="1.2"/><path d="M5.5,8 L5.5,1 M3,3.5 L5.5,1 L8,3.5" fill="none" stroke="#d8d8d8" stroke-width="1.2"/></svg>
<div class="t" style="left:1654px;top:8.54px;font-size:10px;line-height:10px;color:#e2e2e2;font-weight:400;font-family:'Liberation Sans',sans-serif;">Publish Online</div>
<div style="left:1727px;top:6px;width:1px;height:16px;background:#3c3b3d"></div>
<div class="t" style="left:1736px;top:7.87px;font-size:10.2px;line-height:10.2px;color:#e6e6e6;font-weight:700;font-family:'Liberation Sans',sans-serif;">Grundlagen</div>
<svg style="position:absolute;left:1797px;top:12px;" width="4" height="3" viewBox="0 0 4 3"><path d="M0,0 L4,0 L2.0,3 Z" fill="#dcdcdc"/></svg>
<div style="left:1811px;top:6px;width:1px;height:16px;background:#3c3b3d"></div>
<div style="left:1820px;top:6px;width:83px;height:14px;background:#afaeb0;border:1px solid #2b2a2c;border-radius:1px"></div>
<svg style="position:absolute;left:1822px;top:7px;" width="12" height="12" viewBox="0 0 12 12"><circle cx="6.5" cy="5" r="3.2" fill="none" stroke="#222" stroke-width="1.2"/><path d="M4,7.5 L1.2,10.5" stroke="#222" stroke-width="1.6"/></svg>
<div style="left:3px;top:60px;width:38px;height:8px;background:#2b292c"></div>
<div class="t" style="left:6px;top:60.23px;font-size:8px;line-height:8px;color:#cfcfcf;font-weight:700;font-family:'Liberation Sans',sans-serif;">&#8249;&#8249;</div>
<div class="t" style="left:50px;top:65.38px;font-size:9px;line-height:9px;color:#c8c8c8;font-weight:400;font-family:'Liberation Sans',sans-serif;">&#215;</div>
<div class="t" style="left:62px;top:66.26px;font-size:8.2px;line-height:8.2px;color:#bdbcbf;font-weight:400;font-family:'Liberation Sans',sans-serif;letter-spacing:0.3px">01-kapitel.indd @ 100 %</div>
<div class="t" style="left:169px;top:65.38px;font-size:9px;line-height:9px;color:#c8c8c8;font-weight:400;font-family:'Liberation Sans',sans-serif;">&#215;</div>
<div class="t" style="left:181px;top:66.26px;font-size:8.2px;line-height:8.2px;color:#bdbcbf;font-weight:400;font-family:'Liberation Sans',sans-serif;letter-spacing:0.3px">*02-kapitel.indd @ 202 %</div>
<div style="left:286px;top:61px;width:109px;height:14px;background:#3a383b"></div>
<div class="t" style="left:291px;top:65.38px;font-size:9px;line-height:9px;color:#d8d8d8;font-weight:400;font-family:'Liberation Sans',sans-serif;">&#215;</div>
<div class="t" style="left:304px;top:66.26px;font-size:8.2px;line-height:8.2px;color:#ffffff;font-weight:700;font-family:'Liberation Sans',sans-serif;letter-spacing:0.05px">Unbenannt-8 @ 100 %</div>
<div style="left:14px;top:73px;width:14px;height:1px;background:#2a292b"></div>
<svg style="position:absolute;left:0px;top:0px;" width="45" height="350" viewBox="0 0 45 350"><path d="M8,83.5 L8,96 L11,93 L13.5,97.5 L15.5,96.5 L13,92 L16.5,92 Z" fill="#111" stroke="#e8e8e8" stroke-width="1.1"/><path d="M26.5,83.5 L26.5,96 L29.5,93 L32,97.5 L34,96.5 L31.5,92 L35,92 Z" fill="#e8e8e8" stroke="#e8e8e8" stroke-width="0.6"/><path d="M7,100.5 L13,100.5 L15,102.5 L15,111 L7,111 Z" fill="#d0d0d0"/><path d="M13,104 L13,111 L15,109.5 L17,111.5" fill="#e8e8e8" stroke="#333" stroke-width="0.5"/><path d="M23,100 L23,111 M37.5,100 L37.5,111" stroke="#e0e0e0" stroke-width="1.2"/><path d="M25.5,105.5 L35,105.5 M27.5,103.5 L25.5,105.5 L27.5,107.5 M33,103.5 L35,105.5 L33,107.5" fill="none" stroke="#e8e8e8" stroke-width="1.3"/><path d="M6,119 L6,128 L17,128 L17,119" fill="#bdbdbd" stroke="#e0e0e0" stroke-width="1"/><path d="M7,123 L16,123 M7,125.5 L16,125.5 M9.5,121 L9.5,128 M12.5,121 L12.5,128" stroke="#555" stroke-width="0.7"/><path d="M25,119 L25,128 L36,128 L36,119" fill="#bdbdbd" stroke="#e0e0e0" stroke-width="1"/><path d="M26,123 L35,123 M26,125.5 L35,125.5 M28.5,121 L28.5,128 M31.5,121 L31.5,128" stroke="#555" stroke-width="0.7"/><path d="M9,115 L12,119 M12,116 L12,119 L9,119" fill="none" stroke="#eee" stroke-width="1.3"/><path d="M35,115 L31,119 M31,116 L31,119 L34,119" fill="none" stroke="#eee" stroke-width="1.3"/><path d="M7.5,138.5 L16,138.5 M11.75,138.5 L11.75,147.5 M9.5,147.5 L14,147.5 M7.5,138.5 L7.5,140.5 M16,138.5 L16,140.5" fill="none" stroke="#e2e2e2" stroke-width="1.5"/><path d="M25,148 L36,137" stroke="#d8d8d8" stroke-width="1.2"/><path d="M7,164 L9,156 L14,152.5 L18,156.5 L14.5,161.5 Z" fill="#cfcfcf" stroke="#eee" stroke-width="0.8"/><path d="M7,164 L11.5,159" stroke="#444" stroke-width="0.8"/><path d="M24.5,164 L26,159.5 L33,152.5 L36,155.5 L29,162.5 Z" fill="#cfcfcf" stroke="#eee" stroke-width="0.8"/><rect x="6" y="170" width="11" height="8.5" fill="none" stroke="#e0e0e0" stroke-width="1.2"/><path d="M6,170 L17,178.5 M17,170 L6,178.5" stroke="#e0e0e0" stroke-width="0.9"/><rect x="25" y="170" width="11" height="8.5" fill="#7a797b" stroke="#e0e0e0" stroke-width="1.2"/><path d="M14.5,165 L17,162.5 L17,165 Z" fill="#e8e8e8"/><path d="M33.5,165 L36,162.5 L36,165 Z" fill="#e8e8e8"/><path d="M14.5,180 L17,177.5 L17,180 Z" fill="#e8e8e8"/><path d="M33.5,180 L36,177.5 L36,180 Z" fill="#e8e8e8"/><path d="M33.5,201 L36,198.5 L36,201 Z" fill="#e8e8e8"/><path d="M6,191 L15,196 M6,198 L15,193" stroke="#e0e0e0" stroke-width="1.1"/><circle cx="15.5" cy="191.5" r="1.8" fill="none" stroke="#e0e0e0"/><circle cx="15.5" cy="197.5" r="1.8" fill="none" stroke="#e0e0e0"/><path d="M24.5,190.5 L24.5,199 L27,196.5 L31,196 Z" fill="#ddd"/><g fill="#ddd"><rect x="28" y="190" width="2" height="1.5"/><rect x="32" y="190" width="2" height="1.5"/><rect x="35" y="190" width="1.5" height="1.5"/><rect x="35" y="194" width="1.5" height="1.5"/><rect x="32" y="198" width="2" height="1.5"/><rect x="28" y="198" width="2" height="1.5"/></g><defs><linearGradient id="tg" x1="0" x2="1"><stop offset="0" stop-color="#222"/><stop offset="1" stop-color="#eee"/></linearGradient></defs><rect x="5.5" y="206.5" width="12" height="9" fill="url(#tg)" stroke="#e0e0e0" stroke-width="1.1"/><rect x="24.5" y="206.5" width="12" height="9" fill="#555" stroke="#e0e0e0" stroke-width="1.1"/><path d="M26,211 L35,211" stroke="#ddd" stroke-width="2" stroke-dasharray="2,1"/><rect x="6.5" y="227.5" width="10" height="9" fill="#666" stroke="#e0e0e0" stroke-width="1.2"/><path d="M12,236 L16,232" stroke="#eee" stroke-width="1.2"/><path d="M25,237 L33,229" stroke="#ddd" stroke-width="1.8"/><circle cx="34" cy="228" r="2.2" fill="#ddd"/><rect x="26" y="233" width="9" height="3" fill="#bbb"/><path d="M6.5,246 L9,252.5 L15,252.5 L17.5,245 L16,244.5 L14.5,247 L14.5,241.5 L13,241.5 L12.5,246 L12,241 L10.5,241 L10.5,246 L9.5,242 L8,242.5 L9,248 Z" fill="#ddd"/><rect x="22" y="240" width="16.5" height="14.5" fill="#29282a"/><circle cx="29" cy="245.5" r="3.5" fill="#777" stroke="#ddd" stroke-width="1.2"/><path d="M31.5,248 L35.5,252" stroke="#ddd" stroke-width="1.6"/><rect x="5.5" y="263.5" width="21.5" height="21.5" fill="#3a78d6" stroke="#516f9c" stroke-width="0.8"/><rect x="14.5" y="273" width="20.5" height="20" fill="#f2f0f2"/><rect x="19.5" y="278" width="10.5" height="10" fill="#29403a"/><path d="M16,292 L34,274" stroke="#cc1f35" stroke-width="2.4"/><path d="M29,266 Q34,264 35,269 M33.5,267.5 L35,269.5 L36.5,267.5" fill="none" stroke="#ddd" stroke-width="1"/><rect x="29" y="263" width="2" height="2" fill="#ddd"/><rect x="5" y="289" width="4" height="4" fill="#111" stroke="#ddd" stroke-width="0.8"/><rect x="8" y="291" width="4" height="4" fill="#eee" stroke="#111" stroke-width="0.8"/><rect x="6.5" y="298" width="11" height="10" fill="#2a292b"/><rect x="8.5" y="300" width="7" height="6" fill="#666" stroke="#ddd" stroke-width="1.1"/><path d="M25,299.5 L32,299.5 M28.5,299.5 L28.5,307 M27,307 L30,307" fill="none" stroke="#eee" stroke-width="1.4"/><rect x="4" y="317" width="8" height="7" fill="#0a0a0a" stroke="#555" stroke-width="0.6"/><rect x="17" y="317" width="5" height="7" fill="#d8d8d8"/><rect x="27" y="315" width="10" height="10" fill="#3a1a22"/><rect x="28.5" y="316.5" width="7" height="7" fill="#eee"/><path d="M28.5,323.5 L35.5,316.5" stroke="#c21d33" stroke-width="1.6"/><rect x="3" y="331" width="16.5" height="13" fill="#2c2b2d"/><rect x="7.5" y="333.5" width="8.5" height="8" fill="#bbb" stroke="#eee" stroke-width="1"/><path d="M9,338 L11,336.5 L13,338.5 L15,337" stroke="#222" stroke-width="1"/><rect x="26.5" y="333.5" width="9" height="8" fill="#555" stroke="#ddd" stroke-width="1"/><rect x="27" y="334" width="8" height="2" fill="#ddd"/><path d="M34.5,345 L37,342.5 L37,345 Z" fill="#e8e8e8"/></svg>
<svg style="position:absolute;left:15px;top:35px;" width="17" height="17" viewBox="0 0 17 17"><circle cx="2.5" cy="2.5" r="2" fill="none" stroke="#d9d9d9" stroke-width="1"/><circle cx="2.5" cy="8.0" r="2" fill="none" stroke="#d9d9d9" stroke-width="1"/><circle cx="2.5" cy="13.5" r="2" fill="none" stroke="#d9d9d9" stroke-width="1"/><circle cx="8.0" cy="2.5" r="2" fill="none" stroke="#d9d9d9" stroke-width="1"/><circle cx="8.0" cy="8.0" r="2" fill="none" stroke="#d9d9d9" stroke-width="1"/><circle cx="8.0" cy="13.5" r="2" fill="none" stroke="#d9d9d9" stroke-width="1"/><circle cx="13.5" cy="2.5" r="2" fill="none" stroke="#d9d9d9" stroke-width="1"/><circle cx="13.5" cy="8.0" r="2" fill="none" stroke="#d9d9d9" stroke-width="1"/><circle cx="13.5" cy="13.5" r="2" fill="none" stroke="#d9d9d9" stroke-width="1"/><circle cx="2.5" cy="2.5" r="2" fill="#e0e0e0"/></svg>
<div class="t" style="left:40px;top:32.23px;font-size:8px;line-height:8px;color:#e0e0e0;font-weight:700;font-family:'Liberation Sans',sans-serif;">X:</div>
<div class="t" style="left:40px;top:48.23px;font-size:8px;line-height:8px;color:#e0e0e0;font-weight:700;font-family:'Liberation Sans',sans-serif;">Y:</div>
<div style="left:49px;top:31px;width:9px;height:10px;background:#3a383b;border-radius:2px"></div>
<svg style="position:absolute;left:49px;top:31px;" width="9" height="10" viewBox="0 0 9 10"><path d="M2.0,4.0 L4.5,1.5 L7.0,4.0 Z M2.0,6.0 L4.5,8.5 L7.0,6.0 Z" fill="#8d8c8f"/></svg>
<div style="left:49px;top:47px;width:9px;height:10px;background:#3a383b;border-radius:2px"></div>
<svg style="position:absolute;left:49px;top:47px;" width="9" height="10" viewBox="0 0 9 10"><path d="M2.0,4.0 L4.5,1.5 L7.0,4.0 Z M2.0,6.0 L4.5,8.5 L7.0,6.0 Z" fill="#8d8c8f"/></svg>
<div style="left:60px;top:31px;width:46px;height:9.5px;background:#aaa9ab;border-radius:1px;"></div>
<div class="t" style="left:62px;top:32.10px;font-size:7.5px;line-height:7.5px;color:#8d8c8f;font-weight:400;font-family:'Liberation Sans',sans-serif;">316,5 mm</div>
<div style="left:60px;top:47px;width:46px;height:9.5px;background:#aaa9ab;border-radius:1px;"></div>
<div class="t" style="left:62px;top:48.10px;font-size:7.5px;line-height:7.5px;color:#8d8c8f;font-weight:400;font-family:'Liberation Sans',sans-serif;">73 mm</div>
<div class="t" style="left:115px;top:32.23px;font-size:8px;line-height:8px;color:#e0e0e0;font-weight:700;font-family:'Liberation Sans',sans-serif;">B:</div>
<div class="t" style="left:115px;top:48.23px;font-size:8px;line-height:8px;color:#e0e0e0;font-weight:700;font-family:'Liberation Sans',sans-serif;">H:</div>
<div style="left:123px;top:31px;width:9px;height:10px;background:#3a383b;border-radius:2px"></div>
<svg style="position:absolute;left:123px;top:31px;" width="9" height="10" viewBox="0 0 9 10"><path d="M2.0,4.0 L4.5,1.5 L7.0,4.0 Z M2.0,6.0 L4.5,8.5 L7.0,6.0 Z" fill="#8d8c8f"/></svg>
<div style="left:123px;top:47px;width:9px;height:10px;background:#3a383b;border-radius:2px"></div>
<svg style="position:absolute;left:123px;top:47px;" width="9" height="10" viewBox="0 0 9 10"><path d="M2.0,4.0 L4.5,1.5 L7.0,4.0 Z M2.0,6.0 L4.5,8.5 L7.0,6.0 Z" fill="#8d8c8f"/></svg>
<div style="left:134px;top:31px;width:46px;height:9.5px;background:#aaa9ab;border-radius:1px;"></div>
<div style="left:134px;top:47px;width:46px;height:9.5px;background:#aaa9ab;border-radius:1px;"></div>
<svg style="position:absolute;left:185px;top:36px;" width="12" height="15" viewBox="0 0 12 15"><path d="M3,6 A3,3 0 0 1 9,6 M3,9 A3,3 0 0 0 9,9 M6,4 L6,11" fill="none" stroke="#dcdcdc" stroke-width="1.3"/></svg>
<div style="left:200px;top:28px;width:1px;height:30px;background:#3e3d40"></div>
<div style="left:205px;top:30px;width:11px;height:11px;border:1px solid #cfcfcf"></div>
<svg style="position:absolute;left:205px;top:30px;" width="11" height="11" viewBox="0 0 11 11"><path d="M2,5.5 L8,5.5 M6,3 L8.5,5.5 L6,8" fill="none" stroke="#e0e0e0" stroke-width="1.3"/></svg>
<div style="left:219px;top:31px;width:10px;height:10px;background:#3a383b;border-radius:2px"></div>
<svg style="position:absolute;left:219px;top:31px;" width="10" height="10" viewBox="0 0 10 10"><path d="M2.5,4.0 L5.0,1.5 L7.5,4.0 Z M2.5,6.0 L5.0,8.5 L7.5,6.0 Z" fill="#8d8c8f"/></svg>
<div style="left:231px;top:31.5px;width:33px;height:8.5px;background:#aaa9ab;border-radius:1px;"></div>
<div style="left:265px;top:31px;width:11px;height:10px;background:#444245;border-radius:1px"></div>
<svg style="position:absolute;left:265px;top:31px;" width="11" height="10" viewBox="0 0 11 10"><path d="M2.5,3.5 L8.5,3.5 L5.5,7.0 Z" fill="#6f6e71"/></svg>
<div style="left:205px;top:45px;width:11px;height:11px;border:1px solid #cfcfcf"></div>
<svg style="position:absolute;left:205px;top:45px;" width="11" height="11" viewBox="0 0 11 11"><path d="M5.5,2 L5.5,8 M3,6 L5.5,8.5 L8,6" fill="none" stroke="#e0e0e0" stroke-width="1.3"/></svg>
<div style="left:219px;top:46px;width:10px;height:10px;background:#3a383b;border-radius:2px"></div>
<svg style="position:absolute;left:219px;top:46px;" width="10" height="10" viewBox="0 0 10 10"><path d="M2.5,4.0 L5.0,1.5 L7.5,4.0 Z M2.5,6.0 L5.0,8.5 L7.5,6.0 Z" fill="#8d8c8f"/></svg>
<div style="left:231px;top:46.5px;width:33px;height:8.5px;background:#aaa9ab;border-radius:1px;"></div>
<div style="left:265px;top:46px;width:11px;height:10px;background:#444245;border-radius:1px"></div>
<svg style="position:absolute;left:265px;top:46px;" width="11" height="10" viewBox="0 0 11 10"><path d="M2.5,3.5 L8.5,3.5 L5.5,7.0 Z" fill="#6f6e71"/></svg>
<div style="left:281px;top:36px;width:13px;height:16px;background:#2a292b;border-radius:1px"></div>
<svg style="position:absolute;left:281px;top:36px;" width="13" height="16" viewBox="0 0 13 16"><path d="M4,6 A2.5,2.5 0 0 1 9,6 M4,10 A2.5,2.5 0 0 0 9,10 M6.5,4.5 L6.5,11.5" fill="none" stroke="#e8e8e8" stroke-width="1.2"/></svg>
<svg style="position:absolute;left:298px;top:31px;" width="10" height="9" viewBox="0 0 10 9"><path d="M1,8 L9,8 L6,1 Z M4,8 A3,3 0 0 0 3,5" fill="none" stroke="#d0d0d0" stroke-width="1"/></svg>
<svg style="position:absolute;left:298px;top:47px;" width="10" height="9" viewBox="0 0 10 9"><path d="M1,8 L4,1 L9,1 L6,8 Z" fill="none" stroke="#d0d0d0" stroke-width="1"/></svg>
<div style="left:311px;top:31px;width:9px;height:10px;background:#3a383b;border-radius:2px"></div>
<svg style="position:absolute;left:311px;top:31px;" width="9" height="10" viewBox="0 0 9 10"><path d="M2.0,4.0 L4.5,1.5 L7.0,4.0 Z M2.0,6.0 L4.5,8.5 L7.0,6.0 Z" fill="#8d8c8f"/></svg>
<div style="left:322px;top:32px;width:33px;height:8.5px;background:#aaa9ab;border-radius:1px;"></div>
<div style="left:357px;top:31px;width:10px;height:10px;background:#444245;border-radius:1px"></div>
<svg style="position:absolute;left:357px;top:31px;" width="10" height="10" viewBox="0 0 10 10"><path d="M2.0,3.5 L8.0,3.5 L5.0,7.0 Z" fill="#6f6e71"/></svg>
<div style="left:311px;top:46px;width:9px;height:10px;background:#3a383b;border-radius:2px"></div>
<svg style="position:absolute;left:311px;top:46px;" width="9" height="10" viewBox="0 0 9 10"><path d="M2.0,4.0 L4.5,1.5 L7.0,4.0 Z M2.0,6.0 L4.5,8.5 L7.0,6.0 Z" fill="#8d8c8f"/></svg>
<div style="left:322px;top:47px;width:33px;height:8.5px;background:#aaa9ab;border-radius:1px;"></div>
<div style="left:357px;top:46px;width:10px;height:10px;background:#444245;border-radius:1px"></div>
<svg style="position:absolute;left:357px;top:46px;" width="10" height="10" viewBox="0 0 10 10"><path d="M2.0,3.5 L8.0,3.5 L5.0,7.0 Z" fill="#6f6e71"/></svg>
<div style="left:371px;top:28px;width:1px;height:30px;background:#3e3d40"></div>
<svg style="position:absolute;left:379px;top:30px;" width="12" height="11" viewBox="0 0 12 11"><path d="M2,9 A4.5,4.5 0 1 1 10,6" fill="none" stroke="#767578" stroke-width="1.4"/><path d="M8,4 L10,6.5 L11.5,3.5" fill="none" stroke="#767578" stroke-width="1"/></svg>
<svg style="position:absolute;left:399px;top:30px;" width="12" height="11" viewBox="0 0 12 11"><path d="M2,9 A4.5,4.5 0 1 1 10,6" fill="none" stroke="#767578" stroke-width="1.4"/><path d="M8,4 L10,6.5 L11.5,3.5" fill="none" stroke="#767578" stroke-width="1"/></svg>
<svg style="position:absolute;left:379px;top:46px;" width="12" height="11" viewBox="0 0 12 11"><path d="M2,9 A4.5,4.5 0 1 1 10,6" fill="none" stroke="#767578" stroke-width="1.4"/><path d="M8,4 L10,6.5 L11.5,3.5" fill="none" stroke="#767578" stroke-width="1"/></svg>
<svg style="position:absolute;left:399px;top:46px;" width="12" height="11" viewBox="0 0 12 11"><path d="M2,9 A4.5,4.5 0 1 1 10,6" fill="none" stroke="#767578" stroke-width="1.4"/><path d="M8,4 L10,6.5 L11.5,3.5" fill="none" stroke="#767578" stroke-width="1"/></svg>
<div class="t" style="left:420px;top:36.00px;font-size:13px;line-height:13px;color:#8f8e91;font-weight:400;font-family:'Liberation Serif',serif;">P</div>
<svg style="position:absolute;left:443px;top:30px;" width="13" height="11" viewBox="0 0 13 11"><path d="M6.5,1 L6.5,10 M2,5 L11,5 M2,5 L2,9 M11,5 L11,9 M4,9 L9,9" fill="none" stroke="#c8c8c8" stroke-width="1.3"/></svg>
<svg style="position:absolute;left:462px;top:30px;" width="13" height="11" viewBox="0 0 13 11"><path d="M6.5,1 L6.5,10 M2,5 L11,5 M2,5 L2,9 M11,5 L11,9 M4,9 L9,9" fill="none" stroke="#c8c8c8" stroke-width="1.3"/></svg>
<svg style="position:absolute;left:443px;top:46px;" width="13" height="11" viewBox="0 0 13 11"><path d="M6.5,1 L6.5,10 M2,5 L11,5 M2,5 L2,9 M11,5 L11,9 M4,9 L9,9" fill="none" stroke="#c8c8c8" stroke-width="1.3"/></svg>
<svg style="position:absolute;left:462px;top:46px;" width="13" height="11" viewBox="0 0 13 11"><path d="M6.5,1 L6.5,10 M2,5 L11,5 M2,5 L2,9 M11,5 L11,9 M4,9 L9,9" fill="none" stroke="#c8c8c8" stroke-width="1.3"/></svg>
<div style="left:480px;top:28px;width:1px;height:30px;background:#3e3d40"></div>
<div style="left:485px;top:29px;width:12px;height:13px;background:#3b78d8;border:1px solid #9fb5d5"></div>
<div style="left:485px;top:46px;width:12px;height:11px;background:#f4f4f4"></div>
<svg style="position:absolute;left:485px;top:46px;" width="12" height="11" viewBox="0 0 12 11"><rect x="3" y="3" width="6" height="5" fill="#1f3d36"/><path d="M1,10 L11,1" stroke="#d0202a" stroke-width="1.8"/></svg>
<div style="left:500px;top:31px;width:9px;height:9px;background:#3e3c3f;border-radius:1px"></div>
<svg style="position:absolute;left:500px;top:31px;" width="9" height="9" viewBox="0 0 9 9"><path d="M3,1.5 L7,4.5 L3,7.5 Z" fill="#d6d6d6"/></svg>
<div style="left:500px;top:47px;width:9px;height:9px;background:#3e3c3f;border-radius:1px"></div>
<svg style="position:absolute;left:500px;top:47px;" width="9" height="9" viewBox="0 0 9 9"><path d="M3,1.5 L7,4.5 L3,7.5 Z" fill="#d6d6d6"/></svg>
<div style="left:514px;top:28px;width:1px;height:30px;background:#3e3d40"></div>
<div style="left:519px;top:31px;width:8px;height:10px;background:#3a383b;border-radius:2px"></div>
<svg style="position:absolute;left:519px;top:31px;" width="8" height="10" viewBox="0 0 8 10"><path d="M1.5,4.0 L4.0,1.5 L6.5,4.0 Z M1.5,6.0 L4.0,8.5 L6.5,6.0 Z" fill="#d8d8d8"/></svg>
<div style="left:530px;top:32px;width:34px;height:8.5px;background:#aaa9ab;border-radius:1px;"></div>
<div class="t" style="left:532px;top:32.60px;font-size:7.5px;line-height:7.5px;color:#111;font-weight:400;font-family:'Liberation Sans',sans-serif;">0 Pt</div>
<div style="left:565px;top:31px;width:11px;height:10px;background:#3e3c3f;border-radius:1px"></div>
<svg style="position:absolute;left:565px;top:31px;" width="11" height="10" viewBox="0 0 11 10"><path d="M2.5,3.5 L8.5,3.5 L5.5,7.0 Z" fill="#cfcfd0"/></svg>
<div style="left:518px;top:47px;width:46px;height:9px;background:#aaa9ab"></div>
<div style="left:520px;top:48.5px;width:38px;height:6px;background:#0a0a0a"></div>
<div style="left:565px;top:47px;width:11px;height:10px;background:#3e3c3f;border-radius:1px"></div>
<svg style="position:absolute;left:565px;top:47px;" width="11" height="10" viewBox="0 0 11 10"><path d="M2.5,3.5 L8.5,3.5 L5.5,7.0 Z" fill="#cfcfd0"/></svg>
<div style="left:582px;top:28px;width:1px;height:30px;background:#3e3d40"></div>
<svg style="position:absolute;left:589px;top:30px;" width="10" height="10" viewBox="0 0 10 10"><rect x="1" y="1" width="7" height="7" fill="none" stroke="#d8d8d8" stroke-width="1.2" stroke-dasharray="2,1"/><rect x="3" y="3" width="3" height="3" fill="#d8d8d8"/></svg>
<svg style="position:absolute;left:608px;top:30px;" width="10" height="10" viewBox="0 0 10 10"><rect x="1" y="1" width="8" height="8" fill="#666" stroke="#c8c8c8" stroke-width="1.2"/></svg>
<div class="t" style="left:627px;top:30.54px;font-size:10px;line-height:10px;color:#cfcfcf;font-weight:700;font-family:'Liberation Serif',serif;"><i>fx</i></div>
<svg style="position:absolute;left:586px;top:47px;" width="10" height="10" viewBox="0 0 10 10"><rect x="0.5" y="0.5" width="9" height="9" fill="none" stroke="#d8d8d8" stroke-width="1" stroke-dasharray="1.5,1"/><circle cx="5" cy="5" r="1.5" fill="#d8d8d8"/></svg>
<div style="left:601px;top:47px;width:25px;height:9px;background:#aaa9ab;border-radius:1px;"></div>
<div class="t" style="left:603px;top:48.09px;font-size:7px;line-height:7px;color:#111;font-weight:400;font-family:'Liberation Sans',sans-serif;">100 %</div>
<div style="left:628px;top:47px;width:10px;height:9px;background:#3e3c3f"></div>
<svg style="position:absolute;left:628px;top:47px;" width="10" height="9" viewBox="0 0 10 9"><path d="M3,1.5 L7,4.5 L3,7.5 Z" fill="#c8c8c8"/></svg>
<div style="left:643px;top:28px;width:1px;height:30px;background:#3e3d40"></div>
<div style="left:647px;top:28px;width:16px;height:15px;background:#2f2d30;border-radius:1px"></div>
<svg style="position:absolute;left:649px;top:30px;" width="12" height="11" viewBox="0 0 12 11"><rect x="0.5" y="0.5" width="11" height="10" fill="none" stroke="#d0d0d0"/><path d="M2,3 L10,3 M2,5.5 L10,5.5 M2,8 L10,8" stroke="#d0d0d0"/></svg>
<svg style="position:absolute;left:669px;top:30px;" width="12" height="11" viewBox="0 0 12 11"><rect x="0.5" y="0.5" width="11" height="10" fill="none" stroke="#b8b8b8"/><rect x="3.5" y="3" width="5" height="5" fill="none" stroke="#b8b8b8"/></svg>
<svg style="position:absolute;left:650px;top:47px;" width="11" height="11" viewBox="0 0 11 11"><circle cx="5.5" cy="5.5" r="4.5" fill="#bbb" stroke="#e0e0e0"/><circle cx="5.5" cy="5.5" r="2" fill="#666"/></svg>
<svg style="position:absolute;left:669px;top:47px;" width="12" height="10" viewBox="0 0 12 10"><rect x="0.5" y="0.5" width="11" height="9" fill="#555" stroke="#a0a0a0"/><rect x="4" y="3" width="4" height="4" fill="#ccc"/></svg>
<div style="left:684px;top:28px;width:1px;height:30px;background:#3e3d40"></div>
<div style="left:688px;top:28px;width:16px;height:16px;background:#37474f;border-radius:1px"></div>
<svg style="position:absolute;left:688px;top:28px;" width="16" height="16" viewBox="0 0 16 16"><rect x="4" y="4" width="8" height="8" fill="none" stroke="#c8d0d4" stroke-width="1.2"/><path d="M1.5,1.5 L4,4 M14.5,1.5 L12,4 M1.5,14.5 L4,12 M14.5,14.5 L12,12" stroke="#c8d0d4" stroke-width="1.2"/></svg>
<div style="left:707px;top:31px;width:9px;height:10px;background:#3a383b;border-radius:2px"></div>
<svg style="position:absolute;left:707px;top:31px;" width="9" height="10" viewBox="0 0 9 10"><path d="M2.0,4.0 L4.5,1.5 L7.0,4.0 Z M2.0,6.0 L4.5,8.5 L7.0,6.0 Z" fill="#d8d8d8"/></svg>
<div style="left:717px;top:31px;width:35px;height:9.5px;background:#aaa9ab;border-radius:1px;"></div>
<div class="t" style="left:719px;top:32.25px;font-size:7.2px;line-height:7.2px;color:#222;font-weight:400;font-family:'Liberation Sans',sans-serif;">4,233 mm</div>
<div style="left:706px;top:47px;width:17px;height:9px;background:#aaa9ab"></div>
<svg style="position:absolute;left:707px;top:48px;" width="14" height="7" viewBox="0 0 14 7"><path d="M1,2 L10,2 L10,6" fill="none" stroke="#222" stroke-width="1.5"/></svg>
<div style="left:723px;top:47px;width:12px;height:9px;background:#3e3c3f;border-radius:1px"></div>
<svg style="position:absolute;left:723px;top:47px;" width="12" height="9" viewBox="0 0 12 9"><path d="M3.0,3.0 L9.0,3.0 L6.0,6.5 Z" fill="#cfcfd0"/></svg>
<div style="left:757px;top:28px;width:1px;height:30px;background:#3e3d40"></div>
<svg style="position:absolute;left:764px;top:30px;" width="11" height="10" viewBox="0 0 11 10"><rect x="1" y="1" width="8" height="7" fill="none" stroke="#e0e0e0" stroke-width="1.2"/><path d="M3,3 L7,6 M7,3 L3,6" stroke="#e0e0e0"/></svg>
<div style="left:781px;top:30.5px;width:85px;height:9.5px;background:#aaa9ab;border-radius:1px;"></div>
<div class="t" style="left:783px;top:31.65px;font-size:7.4px;line-height:7.4px;color:#1c1c1c;font-weight:400;font-family:'Liberation Sans',sans-serif;">[Einfacher Grafikrahme...</div>
<div style="left:867px;top:30.5px;width:11px;height:10px;background:#3e3c3f;border-radius:1px"></div>
<svg style="position:absolute;left:867px;top:30.5px;" width="11" height="10" viewBox="0 0 11 10"><path d="M2.5,3.5 L8.5,3.5 L5.5,7.0 Z" fill="#cfcfd0"/></svg>
<svg style="position:absolute;left:843px;top:46px;" width="14" height="10" viewBox="0 0 14 10"><circle cx="5" cy="5" r="3.8" fill="none" stroke="#999" stroke-width="1.3"/><path d="M10,3 L13,5 L10,7" fill="none" stroke="#999"/></svg>
<svg style="position:absolute;left:863px;top:46px;" width="16" height="10" viewBox="0 0 16 10"><rect x="1" y="1" width="7" height="8" fill="#ddd" stroke="#fff"/><path d="M3,3 L6,7 M6,3 L3,7" stroke="#333"/><path d="M10,8 L14,2" stroke="#aaa" stroke-width="2"/></svg>
<div style="left:880px;top:28px;width:1px;height:30px;background:#3e3d40"></div>
<svg style="position:absolute;left:1883px;top:35px;" width="12" height="13" viewBox="0 0 12 13"><path d="M7,0.5 L3,6.5 L7,6.5 L4,12.5" fill="none" stroke="#e0e0e0" stroke-width="1.4"/></svg>
<svg style="position:absolute;left:1902px;top:41px;" width="4" height="3" viewBox="0 0 4 3"><path d="M0,0 L4,0 L2.0,3 Z" fill="#d0d0d0"/></svg>
<svg style="position:absolute;left:1907px;top:38px;" width="9" height="8" viewBox="0 0 9 8"><path d="M0,1 L9,1 M0,4 L9,4 M0,7 L9,7" stroke="#9a999c" stroke-width="1.2"/></svg>
<div style="left:638px;top:352px;width:550px;height:233px;background:#f1eff3;box-shadow:0 14px 34px 4px rgba(0,0,0,0.40), 0 5px 12px rgba(0,0,0,0.22), 0 0 0 0.5px rgba(0,0,0,0.25);border-radius:4px"></div>
<div style="left:638px;top:352px;width:550px;height:16px;background:linear-gradient(#e6e4e8,#d6d4d8);border-radius:4px 4px 0 0;border-bottom:1px solid #c4c2c6"></div>
<div class="t" style="left:412px;width:1000px;text-align:center;top:355.48px;font-size:10.3px;line-height:10.3px;color:#2a2a2a;font-weight:400;font-family:'Liberation Sans',sans-serif;-webkit-text-stroke:0.2px #2a2a2a">Speichern unter</div>
<div class="t" style="right:1083px;top:389.48px;font-size:10.3px;line-height:10.3px;color:#1b1b1b;font-weight:400;font-family:'Liberation Sans',sans-serif;-webkit-text-stroke:0.25px #1b1b1b">Sichern unter:</div>
<div style="left:840px;top:383px;width:168px;height:20px;background:#fbfafc;border:3px solid #8fb1e6;border-radius:2px"></div>
<div style="left:843px;top:386px;width:53px;height:14px;background:#b4cdf3"></div>
<div class="t" style="left:845px;top:389.48px;font-size:10.3px;line-height:10.3px;color:#1b1b1b;font-weight:400;font-family:'Liberation Sans',sans-serif;-webkit-text-stroke:0.25px #1b1b1b">00-vorlage.indt</div>
<div style="left:1014px;top:386px;width:13px;height:15px;background:#fbfafc;box-shadow:0 0.5px 1.5px rgba(0,0,0,0.35);border-radius:3px"></div>
<svg style="position:absolute;left:1014px;top:386px;" width="13" height="15" viewBox="0 0 13 15"><path d="M3.5,6 L6.5,9 L9.5,6" fill="none" stroke="#222" stroke-width="1.3"/></svg>
<div class="t" style="right:1083px;top:411.48px;font-size:10.3px;line-height:10.3px;color:#1b1b1b;font-weight:400;font-family:'Liberation Sans',sans-serif;-webkit-text-stroke:0.25px #1b1b1b">Tags:</div>
<div style="left:842px;top:408px;width:165px;height:16px;background:#f6f5f8;border:1px solid #d4d2d6"></div>
<div class="t" style="right:1083px;top:433.48px;font-size:10.3px;line-height:10.3px;color:#1b1b1b;font-weight:400;font-family:'Liberation Sans',sans-serif;-webkit-text-stroke:0.25px #1b1b1b">Ort:</div>
<div style="left:843px;top:430px;width:163px;height:15px;background:#fbfafc;box-shadow:0 0.5px 1.5px rgba(0,0,0,0.3);border-radius:3px"></div>
<div style="left:849px;top:433px;width:11px;height:9px;background:#7ec8ee;border-radius:1px"></div>
<div class="t" style="left:864px;top:433.48px;font-size:10.3px;line-height:10.3px;color:#1b1b1b;font-weight:400;font-family:'Liberation Sans',sans-serif;-webkit-text-stroke:0.25px #1b1b1b">Buchfunktionen in InDesign</div>
<div style="left:994px;top:430px;width:12px;height:15px;background:linear-gradient(#5aa2f8,#1f6fe0);border-radius:3px"></div>
<svg style="position:absolute;left:994px;top:430px;" width="12" height="15" viewBox="0 0 12 15"><path d="M3,6 L6,3 L9,6 M3,9 L6,12 L9,9" fill="none" stroke="#fff" stroke-width="1.2"/></svg>
<div style="left:647px;top:456px;width:532px;height:98px;background:#e9e7eb;border-radius:3px;box-shadow:inset 0 0.5px 1px rgba(0,0,0,0.08)"></div>
<div class="t" style="right:1107px;top:465.48px;font-size:10.3px;line-height:10.3px;color:#1b1b1b;font-weight:400;font-family:'Liberation Sans',sans-serif;-webkit-text-stroke:0.25px #1b1b1b">Format:</div>
<div style="left:819px;top:462px;width:225px;height:16px;background:#fbfafc;box-shadow:0 0.5px 1.5px rgba(0,0,0,0.3);border-radius:3px"></div>
<div class="t" style="left:824px;top:465.48px;font-size:10.3px;line-height:10.3px;color:#1b1b1b;font-weight:400;font-family:'Liberation Sans',sans-serif;-webkit-text-stroke:0.25px #1b1b1b">InDesign CC 2015-Vorlage</div>
<div style="left:1032px;top:462px;width:12px;height:16px;background:linear-gradient(#5aa2f8,#1f6fe0);border-radius:3px"></div>
<svg style="position:absolute;left:1032px;top:462px;" width="12" height="16" viewBox="0 0 12 16"><path d="M3,6.5 L6,3.5 L9,6.5 M3,9.5 L6,12.5 L9,9.5" fill="none" stroke="#fff" stroke-width="1.2"/></svg>
<div style="left:663px;top:487px;width:11px;height:11px;background:linear-gradient(#5aa2f8,#1f6fe0);border-radius:2px"></div>
<svg style="position:absolute;left:663px;top:487px;" width="11" height="11" viewBox="0 0 11 11"><path d="M2.5,5.5 L4.8,8 L8.8,2.5" fill="none" stroke="#fff" stroke-width="1.5"/></svg>
<div class="t" style="left:677px;top:487.98px;font-size:10.3px;line-height:10.3px;color:#1b1b1b;font-weight:400;font-family:'Liberation Sans',sans-serif;-webkit-text-stroke:0.25px #1b1b1b">Vorschaubilder immer mit Dokumenten speichern</div>
<div style="left:1034px;top:562px;width:69px;height:15px;background:#fbfafc;box-shadow:0 0.5px 1.5px rgba(0,0,0,0.35);border-radius:3px"></div>
<div class="t" style="left:568.5px;width:1000px;text-align:center;top:565.48px;font-size:10.3px;line-height:10.3px;color:#1b1b1b;font-weight:400;font-family:'Liberation Sans',sans-serif;-webkit-text-stroke:0.25px #1b1b1b">Abbrechen</div>
<div style="left:1109px;top:562px;width:71px;height:15px;background:linear-gradient(#62a8fb,#1a6ce8);border-radius:3px;box-shadow:0 0.5px 1px rgba(0,0,0,0.3)"></div>
<div class="t" style="left:644.5px;width:1000px;text-align:center;top:565.48px;font-size:10.3px;line-height:10.3px;color:#ffffff;font-weight:400;font-family:'Liberation Sans',sans-serif;-webkit-text-stroke:0.2px #fff">Sichern</div>
</body></html>
